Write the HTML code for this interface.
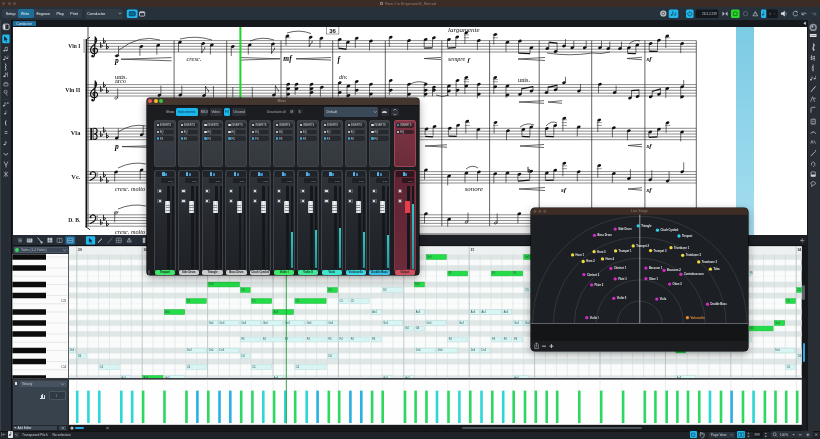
<!DOCTYPE html><html><head><meta charset="utf-8"><style>
*{margin:0;padding:0;box-sizing:border-box}
html,body{width:820px;height:439px;overflow:hidden;background:#1b1e23;font-family:"Liberation Sans",sans-serif}
.a{position:absolute}
</style></head><body><div class="a" style="left:0;top:0;width:820px;height:439px;overflow:hidden;will-change:transform;background:#1b1e23"><div class="a" style="left:0.00px;top:0.00px;width:820.00px;height:6.70px;background:#3b2d26;"></div><div class="a" style="left:2.20px;top:1.90px;width:3.00px;height:3.00px;background:#5c4d45;border-radius:50%"></div><div class="a" style="left:7.65px;top:1.90px;width:3.00px;height:3.00px;background:#5c4d45;border-radius:50%"></div><div class="a" style="left:13.10px;top:1.90px;width:3.00px;height:3.00px;background:#5c4d45;border-radius:50%"></div><svg class="a" style="left:0;top:0;overflow:visible" width="820" height="439"><text x="385.00" y="4.75" font-family="Liberation Sans" font-size="3.75" fill="#8e7f76" text-anchor="start" font-weight="normal">Flow 1 in Enigmatic06_Nimrod</text></svg><div class="a" style="left:380.20px;top:2.20px;width:2.80px;height:2.80px;background:transparent;border:0.5px solid #8e7f76;border-radius:0.4px"></div><div class="a" style="left:0.00px;top:6.70px;width:820.00px;height:13.40px;background:#27313b;"></div><div class="a" style="left:1.80px;top:9.10px;width:79.90px;height:9.20px;background:#303b47;border-radius:1.5px"></div><div class="a" style="left:18.30px;top:9.30px;width:15.80px;height:8.80px;background:#1f6e9a;border-radius:1.5px"></div><svg class="a" style="left:0;top:0;overflow:visible" width="820" height="439"><text x="5.80" y="15.21" font-family="Liberation Sans" font-size="3.7" fill="#eef2f6" text-anchor="start" font-weight="normal">Setup</text></svg><svg class="a" style="left:0;top:0;overflow:visible" width="820" height="439"><text x="20.80" y="15.21" font-family="Liberation Sans" font-size="3.7" fill="#eef2f6" text-anchor="start" font-weight="normal">Write</text></svg><svg class="a" style="left:0;top:0;overflow:visible" width="820" height="439"><text x="36.40" y="15.21" font-family="Liberation Sans" font-size="3.7" fill="#eef2f6" text-anchor="start" font-weight="normal">Engrave</text></svg><svg class="a" style="left:0;top:0;overflow:visible" width="820" height="439"><text x="56.60" y="15.21" font-family="Liberation Sans" font-size="3.7" fill="#eef2f6" text-anchor="start" font-weight="normal">Play</text></svg><svg class="a" style="left:0;top:0;overflow:visible" width="820" height="439"><text x="70.30" y="15.21" font-family="Liberation Sans" font-size="3.7" fill="#eef2f6" text-anchor="start" font-weight="normal">Print</text></svg><div class="a" style="left:84.90px;top:8.90px;width:38.00px;height:9.70px;background:#2f3a45;border-radius:1.5px"></div><svg class="a" style="left:0;top:0;overflow:visible" width="820" height="439"><text x="87.30" y="15.28" font-family="Liberation Sans" font-size="3.9" fill="#e8eef4" text-anchor="start" font-weight="normal">Conductor</text></svg><svg class="a" style="left:0;top:0" width="820" height="439" viewBox="0 0 820 439"><polyline points="118.70,12.75 120.00,14.05 121.30,12.75" stroke="#b0b8c0" stroke-width="0.7" fill="none"/><rect x="126.80" y="9.40" width="10.80" height="8.70" rx="1.5" fill="#22b8ec"/><rect x="129.20" y="11.65" width="6.00" height="4.20" rx="0.5" stroke="#063a55" stroke-width="0.8" fill="#0d6a94"/><rect x="139.50" y="11.70" width="5.20" height="4.40" rx="0.8" stroke="#d0d6dc" stroke-width="0.8" fill="none"/><line x1="139.60" y1="12.60" x2="144.60" y2="12.60" stroke="#d0d6dc" stroke-width="1.0"/><circle cx="663.30" cy="13.50" r="3.10" fill="#c8ccd0"/><circle cx="663.30" cy="13.50" r="1.90" fill="#6a7078"/><circle cx="663.30" cy="13.50" r="0.80" fill="#c8ccd0"/><rect x="668.70" y="9.60" width="9.60" height="8.30" rx="1.5" fill="#22b8ec"/><ellipse cx="671.64" cy="14.93" rx="1.04" ry="0.76" fill="#073a55"/><line x1="672.59" y1="14.83" x2="672.59" y2="11.51" stroke="#073a55" stroke-width="0.52"/><path d="M672.59 11.51 q1.5 0.6 1.3 2" stroke="#073a55" stroke-width="0.47" fill="none"/><ellipse cx="674.96" cy="14.92" rx="0.88" ry="0.64" fill="#073a55"/><line x1="675.76" y1="14.84" x2="675.76" y2="12.04" stroke="#073a55" stroke-width="0.44"/><rect x="686.00" y="9.60" width="7.60" height="8.30" rx="1.5" fill="#22b8ec"/><path d="M688.3 12.4 a2.1 2.1 0 1 0 3 0 M689.8 11 v2.4" stroke="#073a55" stroke-width="0.7" fill="none"/><rect x="695.60" y="9.60" width="22.80" height="8.30" rx="1.5" fill="#14171b"/><path d="M722.5 11.5 l2.2 2.2 l-2.2 2.2 z M727.5 11.5 l-2.2 2.2 l2.2 2.2 z" fill="#b8bec4"/><rect x="731.00" y="9.60" width="8.60" height="8.30" rx="1.5" fill="#2cd82c"/><rect x="733.50" y="11.95" width="3.60" height="3.60" rx="0.5" stroke="#0a5a0a" stroke-width="0.7" fill="none"/><circle cx="745.50" cy="13.70" r="2.20" stroke="#6a7078" stroke-width="0.7" fill="none"/><path d="M755.30 11.50 L757.70 15.82 L752.90 15.82 Z" stroke="#b8bec4" stroke-width="0.7" fill="none"/><line x1="755.30" y1="12.80" x2="755.30" y2="14.20" stroke="#b8bec4" stroke-width="0.5"/><rect x="761.00" y="9.60" width="5.20" height="8.30" rx="1.2" fill="#22b8ec"/><ellipse cx="762.88" cy="14.66" rx="0.99" ry="0.72" fill="#073a55"/><line x1="763.78" y1="14.57" x2="763.78" y2="11.42" stroke="#073a55" stroke-width="0.50"/><rect x="767.00" y="9.60" width="10.60" height="8.30" rx="1" fill="#14171b"/><line x1="770.00" y1="12.40" x2="770.00" y2="15.20" stroke="#8a9098" stroke-width="0.6"/><line x1="773.20" y1="13.70" x2="775.60" y2="13.70" stroke="#555" stroke-width="0.5"/><path d="M781 12.6 h1.6 l2.2 -1.8 v5.8 l-2.2 -1.8 h-1.6 z" fill="#d8dde2"/><path d="M785.8 12.2 q1 1.5 0 3" stroke="#d8dde2" stroke-width="0.5" fill="none"/><path d="M796.8 11.8 a2.3 2.3 0 1 0 0.8 2.4 M795.6 11.4 h1.6 v1.6" stroke="#b8bec4" stroke-width="0.7" fill="none"/><path d="M802.2 14.6 q1.6 -3 4.2 -1 M802 12.4 v2.4 h2.4" stroke="#b8bec4" stroke-width="0.7" fill="none"/><path d="M815.6 14.6 q-1.6 -3 -4.2 -1 M815.8 12.4 v2.4 h-2.4" stroke="#6a7078" stroke-width="0.7" fill="none"/><path d="M805.8 21.6 l-2.4 1.7 l2.4 1.7 z" fill="#d0d6dc"/></svg><svg class="a" style="left:0;top:0;overflow:visible" width="820" height="439"><text x="702.00" y="14.90" font-family="Liberation Sans" font-size="3.1" fill="#c8ccd0" text-anchor="start" font-weight="normal">26.3.2.239</text></svg><div class="a" style="left:0.00px;top:20.10px;width:820.00px;height:7.00px;background:#15181c;"></div><div class="a" style="left:12.80px;top:20.70px;width:23.20px;height:5.80px;background:#1f6d9a;border-radius:1px 1px 0 0"></div><svg class="a" style="left:0;top:0;overflow:visible" width="820" height="439"><text x="16.20" y="24.96" font-family="Liberation Sans" font-size="3.4" fill="#e0ecf4" text-anchor="start" font-weight="normal">Conductor</text></svg><svg class="a" style="left:0;top:0" width="820" height="439" viewBox="0 0 820 439"><path d="M805.8 21.6 l-2.4 1.7 l2.4 1.7 z" fill="#d0d6dc"/></svg><div class="a" style="left:0.00px;top:20.10px;width:11.20px;height:418.90px;background:#262c34;"></div><div class="a" style="left:0.00px;top:20.10px;width:0.80px;height:418.90px;background:#3a4048;"></div><div class="a" style="left:11.00px;top:20.10px;width:1.30px;height:418.90px;background:#0e1013;"></div><svg class="a" style="left:0;top:0" width="820" height="439" viewBox="0 0 820 439"><rect x="3.20" y="24.10" width="5.90" height="5.50" rx="1.3" stroke="#dfe3e6" stroke-width="0.8" fill="none"/><rect x="3.50" y="24.55" width="1.80" height="4.60" rx="0.3" fill="#dfe3e6"/><rect x="2.30" y="34.60" width="7.30" height="8.60" rx="1.2" fill="#22b8ec"/><path d="M4.04 36.04 L7.89 39.56 L6.02 39.67 L7.12 41.65 L6.35 41.98 L5.25 40.00 L4.04 41.10 Z" fill="#0a2a40"/><ellipse cx="4.20" cy="50.82" rx="0.99" ry="0.72" fill="#c4cacf"/><line x1="5.10" y1="50.73" x2="5.10" y2="47.58" stroke="#c4cacf" stroke-width="0.50"/><ellipse cx="6.54" cy="50.46" rx="0.99" ry="0.72" fill="#c4cacf"/><line x1="7.44" y1="50.37" x2="7.44" y2="47.22" stroke="#c4cacf" stroke-width="0.50"/><line x1="5.10" y1="47.58" x2="7.44" y2="47.22" stroke="#c4cacf" stroke-width="0.63"/><ellipse cx="4.08" cy="59.46" rx="0.99" ry="0.72" fill="#c4cacf"/><line x1="4.98" y1="59.37" x2="4.98" y2="56.22" stroke="#c4cacf" stroke-width="0.50"/><path d="M4.98 56.22 q1.5 0.6 1.3 2" stroke="#c4cacf" stroke-width="0.45" fill="none"/><ellipse cx="7.16" cy="58.32" rx="0.88" ry="0.64" fill="#c4cacf"/><line x1="7.96" y1="58.24" x2="7.96" y2="55.44" stroke="#c4cacf" stroke-width="0.44"/><path d="M5.2 63.5 q1.8 2 0 3.5 q1.8 1.5 0 3.5" stroke="#c4cacf" stroke-width="0.9" fill="none"/><ellipse cx="4.40" cy="76.40" rx="1.10" ry="0.80" fill="#c4cacf"/><line x1="5.40" y1="76.30" x2="5.40" y2="72.80" stroke="#c4cacf" stroke-width="0.55"/><path d="M5.40 72.80 q1.5 0.6 1.3 2" stroke="#c4cacf" stroke-width="0.50" fill="none"/><line x1="7.50" y1="72.20" x2="7.50" y2="77.00" stroke="#c4cacf" stroke-width="0.5"/><rect x="3.80" y="83.30" width="4.20" height="2.60" rx="0.4" stroke="#c4cacf" stroke-width="0.6" fill="none"/><line x1="4.40" y1="82.40" x2="7.40" y2="82.40" stroke="#c4cacf" stroke-width="0.5"/><circle cx="5.60" cy="91.80" r="1.50" stroke="#c4cacf" stroke-width="0.6" fill="none"/><line x1="6.20" y1="93.40" x2="7.20" y2="95.60" stroke="#c4cacf" stroke-width="0.6"/><line x1="2.60" y1="99.60" x2="9.20" y2="99.60" stroke="#3a4048" stroke-width="0.5"/><ellipse cx="3.88" cy="105.76" rx="0.99" ry="0.72" fill="#c4cacf"/><line x1="4.78" y1="105.67" x2="4.78" y2="102.52" stroke="#c4cacf" stroke-width="0.50"/><path d="M4.78 102.52 q1.5 0.6 1.3 2" stroke="#c4cacf" stroke-width="0.45" fill="none"/><path d="M6.8 103 h2 M7.8 102 v2" stroke="#c4cacf" stroke-width="0.5" fill="none"/><ellipse cx="5.08" cy="113.76" rx="0.99" ry="0.72" fill="#c4cacf"/><line x1="5.98" y1="113.67" x2="5.98" y2="110.52" stroke="#c4cacf" stroke-width="0.50"/><path d="M6 120.5 q-1.2 2.5 0 5" stroke="#c4cacf" stroke-width="0.9" fill="none"/><line x1="4.60" y1="131.60" x2="7.40" y2="131.60" stroke="#c4cacf" stroke-width="0.7"/><line x1="4.60" y1="133.40" x2="7.40" y2="133.40" stroke="#c4cacf" stroke-width="0.7"/><ellipse cx="4.48" cy="144.56" rx="0.99" ry="0.72" fill="#c4cacf"/><line x1="5.38" y1="144.47" x2="5.38" y2="141.32" stroke="#c4cacf" stroke-width="0.50"/><path d="M5.38 141.32 q1.5 0.6 1.3 2" stroke="#c4cacf" stroke-width="0.45" fill="none"/><path d="M3.8 153 q2 4 4.2 0" stroke="#c4cacf" stroke-width="0.8" fill="none"/><path d="M4 161.5 l2 4 l2 -4 M6 165.5 v2" stroke="#c4cacf" stroke-width="0.7" fill="none"/><path d="M3.6 172 l4.6 4.4 M8.2 172 l-4.6 4.4 M5.9 171.4 v5.6" stroke="#c4cacf" stroke-width="0.6" fill="none"/></svg><div class="a" style="left:806.60px;top:20.10px;width:13.40px;height:418.90px;background:#292d34;"></div><div class="a" style="left:806.60px;top:20.10px;width:0.80px;height:418.90px;background:#15171a;"></div><svg class="a" style="left:0;top:0" width="820" height="439" viewBox="0 0 820 439"><circle cx="813.20" cy="27.40" r="3.70" fill="#8c949c"/><circle cx="813.20" cy="27.40" r="2.20" fill="#3a4048"/><circle cx="812.40" cy="26.60" r="0.90" fill="#c8ccd0"/><rect x="809.90" y="34.00" width="6.60" height="3.00" rx="0.4" fill="#e4e8ec"/><line x1="810.60" y1="35.50" x2="815.80" y2="35.50" stroke="#22262b" stroke-width="0.4"/><g transform="translate(0 0.00)"><path d="M813.6 43.5 q1.5 1 0.6 2.6 q-2.4 1.6 -1.2 3.6 q1.5 1.2 1.6 -0.6 M813.5 43.5 v7.5" stroke="#d0d5da" stroke-width="0.7" fill="none"/></g><g transform="translate(0 0.45)"><path d="M811.4 54.5 v5 M814.2 55.5 v5 M810.6 57 l4.4 -1 M810.6 59 l4.4 -1" stroke="#d0d5da" stroke-width="0.6" fill="none"/></g><g transform="translate(0 0.90)"><path d="M813.2 63.5 v7 M812 65 q2 1 0 2.5 q2 1 0 2.5" stroke="#d0d5da" stroke-width="0.6" fill="none"/></g><g transform="translate(0 1.35)"><ellipse cx="810.92" cy="78.39" rx="0.94" ry="0.68" fill="#d0d5da"/><line x1="811.77" y1="78.31" x2="811.77" y2="75.33" stroke="#d0d5da" stroke-width="0.47"/><path d="M811.77 75.33 q1.5 0.6 1.3 2" stroke="#d0d5da" stroke-width="0.42" fill="none"/><ellipse cx="814.76" cy="77.32" rx="0.88" ry="0.64" fill="#d0d5da"/><line x1="815.56" y1="77.24" x2="815.56" y2="74.44" stroke="#d0d5da" stroke-width="0.44"/></g><g transform="translate(0 1.80)"><path d="M810.8 90 l4.8 -5.5" stroke="#d0d5da" stroke-width="0.9" fill="none"/></g><g transform="translate(0 2.25)"><path d="M810.6 99.5 l2 -5 l2 5 M813.8 96 h2" stroke="#d0d5da" stroke-width="0.6" fill="none"/></g><g transform="translate(0 2.70)"><path d="M811 110 v-4 q0 -1.4 1.4 -1.4 h3" stroke="#d0d5da" stroke-width="0.7" fill="none"/></g><g transform="translate(0 3.15)"><rect x="811.10" y="116.00" width="4.20" height="5.00" rx="0.3" stroke="#d0d5da" stroke-width="0.6" fill="none"/><line x1="811.80" y1="116.80" x2="814.60" y2="116.80" stroke="#d0d5da" stroke-width="0.4"/><line x1="811.80" y1="118.50" x2="814.60" y2="118.50" stroke="#d0d5da" stroke-width="0.4"/><line x1="811.80" y1="120.20" x2="814.60" y2="120.20" stroke="#d0d5da" stroke-width="0.4"/></g><g transform="translate(0 3.60)"><path d="M810.6 130 q2.6 -3.4 5.2 0" stroke="#d0d5da" stroke-width="0.8" fill="none"/></g><g transform="translate(0 4.05)"><path d="M810.8 139.5 l1.2 -3 l1.2 3 M814 136.5 l1.5 3" stroke="#d0d5da" stroke-width="0.6" fill="none"/></g><g transform="translate(0 4.50)"><path d="M810.8 151.5 l4.6 -4.6 M815 146.5 l0.8 -0.8" stroke="#d0d5da" stroke-width="0.8" fill="none"/></g><g transform="translate(0 4.95)"><path d="M811.6 160.5 q-1 -3 1.6 -3.6 q2.6 0.6 1.6 3.6 q-0.6 1 -1.6 1.2" stroke="#d0d5da" stroke-width="0.6" fill="none"/></g><g transform="translate(0 5.40)"><rect x="811.00" y="166.50" width="4.40" height="4.60" rx="0.4" stroke="#d0d5da" stroke-width="0.6" fill="none"/><rect x="811.00" y="169.00" width="4.40" height="2.00" rx="0.2" fill="#d0d5da"/></g><g transform="translate(0 5.85)"><path d="M810.8 177 q2.4 -2.8 4.8 0 q-0.6 2.6 -2.4 2.2 l-1.6 1.6 l0.4 -2 q-1.4 -0.6 -1.2 -1.8" stroke="#d0d5da" stroke-width="0.6" fill="none"/></g></svg><div class="a" style="left:12.5px;top:27.1px;width:794px;height:207.5px;background:#ffffff;"></div><div class="a" style="left:735.7px;top:27.1px;width:18.1px;height:207.5px;background:linear-gradient(#7ccbe4,#a6def0);"></div><svg class="a" style="left:0;top:0" width="820" height="439" viewBox="0 0 820 439"><defs><clipPath id="sc"><rect x="12.5" y="27" width="793.5" height="208"/></clipPath></defs><g clip-path="url(#sc)"><line x1="86" y1="40.60" x2="696.3" y2="40.60" stroke="#5a5a5a" stroke-width="0.7"/><line x1="86" y1="43.45" x2="696.3" y2="43.45" stroke="#5a5a5a" stroke-width="0.7"/><line x1="86" y1="46.30" x2="696.3" y2="46.30" stroke="#5a5a5a" stroke-width="0.7"/><line x1="86" y1="49.15" x2="696.3" y2="49.15" stroke="#5a5a5a" stroke-width="0.7"/><line x1="86" y1="52.00" x2="696.3" y2="52.00" stroke="#5a5a5a" stroke-width="0.7"/><line x1="86" y1="84.60" x2="696.3" y2="84.60" stroke="#5a5a5a" stroke-width="0.7"/><line x1="86" y1="87.45" x2="696.3" y2="87.45" stroke="#5a5a5a" stroke-width="0.7"/><line x1="86" y1="90.30" x2="696.3" y2="90.30" stroke="#5a5a5a" stroke-width="0.7"/><line x1="86" y1="93.15" x2="696.3" y2="93.15" stroke="#5a5a5a" stroke-width="0.7"/><line x1="86" y1="96.00" x2="696.3" y2="96.00" stroke="#5a5a5a" stroke-width="0.7"/><line x1="86" y1="128.30" x2="696.3" y2="128.30" stroke="#5a5a5a" stroke-width="0.7"/><line x1="86" y1="131.15" x2="696.3" y2="131.15" stroke="#5a5a5a" stroke-width="0.7"/><line x1="86" y1="134.00" x2="696.3" y2="134.00" stroke="#5a5a5a" stroke-width="0.7"/><line x1="86" y1="136.85" x2="696.3" y2="136.85" stroke="#5a5a5a" stroke-width="0.7"/><line x1="86" y1="139.70" x2="696.3" y2="139.70" stroke="#5a5a5a" stroke-width="0.7"/><line x1="86" y1="171.60" x2="696.3" y2="171.60" stroke="#5a5a5a" stroke-width="0.7"/><line x1="86" y1="174.45" x2="696.3" y2="174.45" stroke="#5a5a5a" stroke-width="0.7"/><line x1="86" y1="177.30" x2="696.3" y2="177.30" stroke="#5a5a5a" stroke-width="0.7"/><line x1="86" y1="180.15" x2="696.3" y2="180.15" stroke="#5a5a5a" stroke-width="0.7"/><line x1="86" y1="183.00" x2="696.3" y2="183.00" stroke="#5a5a5a" stroke-width="0.7"/><line x1="86" y1="214.80" x2="696.3" y2="214.80" stroke="#5a5a5a" stroke-width="0.7"/><line x1="86" y1="217.65" x2="696.3" y2="217.65" stroke="#5a5a5a" stroke-width="0.7"/><line x1="86" y1="220.50" x2="696.3" y2="220.50" stroke="#5a5a5a" stroke-width="0.7"/><line x1="86" y1="223.35" x2="696.3" y2="223.35" stroke="#5a5a5a" stroke-width="0.7"/><line x1="86" y1="226.20" x2="696.3" y2="226.20" stroke="#5a5a5a" stroke-width="0.7"/><line x1="174.1" y1="40.60" x2="174.1" y2="226.20" stroke="#333" stroke-width="0.75"/><line x1="226.7" y1="40.60" x2="226.7" y2="226.20" stroke="#333" stroke-width="0.75"/><line x1="281" y1="40.60" x2="281" y2="226.20" stroke="#333" stroke-width="0.75"/><line x1="332.7" y1="40.60" x2="332.7" y2="226.20" stroke="#333" stroke-width="0.75"/><line x1="385.3" y1="40.60" x2="385.3" y2="226.20" stroke="#333" stroke-width="0.75"/><line x1="441.8" y1="40.60" x2="441.8" y2="226.20" stroke="#333" stroke-width="0.75"/><line x1="489.6" y1="40.60" x2="489.6" y2="226.20" stroke="#333" stroke-width="0.75"/><line x1="539.2" y1="40.60" x2="539.2" y2="226.20" stroke="#333" stroke-width="0.75"/><line x1="591.7" y1="40.60" x2="591.7" y2="226.20" stroke="#333" stroke-width="0.75"/><line x1="644.9" y1="40.60" x2="644.9" y2="226.20" stroke="#333" stroke-width="0.75"/><line x1="696.3" y1="40.60" x2="696.3" y2="226.20" stroke="#333" stroke-width="0.75"/><line x1="88" y1="27" x2="88" y2="226.20" stroke="#444" stroke-width="0.9"/><line x1="86.3" y1="39.60" x2="86.3" y2="227.20" stroke="#111" stroke-width="1.6"/><path d="M85.5 40.10 Q88 38.60 90 37.10" stroke="#111" stroke-width="0.9" fill="none"/><path d="M85.5 226.70 Q88 228.20 90 229.70" stroke="#111" stroke-width="0.9" fill="none"/><rect x="83.3" y="39" width="2.2" height="14" fill="#bbb"/><text x="80.3" y="47.60" font-family="Liberation Serif" font-size="7.0" font-weight="bold" text-anchor="end" fill="#1a1a1a" textLength="12" lengthAdjust="spacingAndGlyphs">Vln I</text><text x="80.3" y="91.60" font-family="Liberation Serif" font-size="7.0" font-weight="bold" text-anchor="end" fill="#1a1a1a" textLength="15" lengthAdjust="spacingAndGlyphs">Vln II</text><text x="80.3" y="135.30" font-family="Liberation Serif" font-size="7.0" font-weight="bold" text-anchor="end" fill="#1a1a1a" textLength="9.5" lengthAdjust="spacingAndGlyphs">Vla</text><text x="80.3" y="178.60" font-family="Liberation Serif" font-size="7.0" font-weight="bold" text-anchor="end" fill="#1a1a1a" textLength="9" lengthAdjust="spacingAndGlyphs">Vc.</text><text x="80.3" y="221.80" font-family="Liberation Serif" font-size="7.0" font-weight="bold" text-anchor="end" fill="#1a1a1a" textLength="12" lengthAdjust="spacingAndGlyphs">D. B.</text><path d="M94.42 55.14 L95.27 37.18 C97.12 38.61 97.12 42.31 94.28 44.59 C91.14 46.87 89.86 49.15 90.86 51.72 C91.85 54.00 95.42 54.14 96.84 52.57 C98.27 50.86 97.41 48.01 94.84 48.01 C92.85 48.01 92.42 50.29 93.70 51.29 M94.42 55.14 C94.28 56.84 92.85 57.42 91.85 56.42" stroke="#111" stroke-width="1.2" fill="none" stroke-linecap="round"/><circle cx="92.42" cy="55.85" r="1.05" fill="#111"/><path d="M94.42 99.13 L95.27 81.18 C97.12 82.60 97.12 86.31 94.28 88.59 C91.14 90.87 89.86 93.15 90.86 95.71 C91.85 97.99 95.42 98.14 96.84 96.57 C98.27 94.86 97.41 92.01 94.84 92.01 C92.85 92.01 92.42 94.29 93.70 95.29 M94.42 99.13 C94.28 100.84 92.85 101.41 91.85 100.42" stroke="#111" stroke-width="1.2" fill="none" stroke-linecap="round"/><circle cx="92.42" cy="99.85" r="1.05" fill="#111"/><rect x="90.30" y="128.00" width="1.9" height="12.00" fill="#111"/><rect x="92.80" y="128.00" width="0.7" height="12.00" fill="#111"/><path d="M93.70 128.30 q3.4 -0.4 3.4 2.6 q0 2.8 -3 2.9 q3 0.1 3 2.9 q0 3 -3.4 2.6" stroke="#111" stroke-width="1.2" fill="none"/><path d="M90.19 173.96 C90.58 171.47 93.33 171.08 94.78 172.39 C96.22 173.83 95.82 176.58 94.12 178.02 C92.68 179.20 90.97 179.86 89.53 180.51" stroke="#111" stroke-width="1.1" fill="none"/><circle cx="90.71" cy="174.09" r="1.0" fill="#111"/><circle cx="97.13" cy="173.03" r="0.62" fill="#111"/><circle cx="97.13" cy="175.88" r="0.62" fill="#111"/><path d="M90.19 217.16 C90.58 214.67 93.33 214.28 94.78 215.59 C96.22 217.03 95.82 219.78 94.12 221.22 C92.68 222.40 90.97 223.06 89.53 223.71" stroke="#111" stroke-width="1.1" fill="none"/><circle cx="90.71" cy="217.29" r="1.0" fill="#111"/><circle cx="97.13" cy="216.23" r="0.62" fill="#111"/><circle cx="97.13" cy="219.08" r="0.62" fill="#111"/><path d="M100.50 42.10 L100.50 47.60 q2.4 -1 2 -2.2 q-0.4 -1 -2 0.2" stroke="#111" stroke-width="0.85" fill="none"/><path d="M103.50 37.82 L103.50 43.32 q2.4 -1 2 -2.2 q-0.4 -1 -2 0.2" stroke="#111" stroke-width="0.85" fill="none"/><path d="M106.50 43.52 L106.50 49.02 q2.4 -1 2 -2.2 q-0.4 -1 -2 0.2" stroke="#111" stroke-width="0.85" fill="none"/><path d="M100.50 86.10 L100.50 91.60 q2.4 -1 2 -2.2 q-0.4 -1 -2 0.2" stroke="#111" stroke-width="0.85" fill="none"/><path d="M103.50 81.82 L103.50 87.32 q2.4 -1 2 -2.2 q-0.4 -1 -2 0.2" stroke="#111" stroke-width="0.85" fill="none"/><path d="M106.50 87.52 L106.50 93.02 q2.4 -1 2 -2.2 q-0.4 -1 -2 0.2" stroke="#111" stroke-width="0.85" fill="none"/><path d="M100.50 131.23 L100.50 136.73 q2.4 -1 2 -2.2 q-0.4 -1 -2 0.2" stroke="#111" stroke-width="0.85" fill="none"/><path d="M103.50 126.95 L103.50 132.45 q2.4 -1 2 -2.2 q-0.4 -1 -2 0.2" stroke="#111" stroke-width="0.85" fill="none"/><path d="M106.50 132.65 L106.50 138.15 q2.4 -1 2 -2.2 q-0.4 -1 -2 0.2" stroke="#111" stroke-width="0.85" fill="none"/><path d="M100.50 175.95 L100.50 181.45 q2.4 -1 2 -2.2 q-0.4 -1 -2 0.2" stroke="#111" stroke-width="0.85" fill="none"/><path d="M103.50 171.68 L103.50 177.18 q2.4 -1 2 -2.2 q-0.4 -1 -2 0.2" stroke="#111" stroke-width="0.85" fill="none"/><path d="M106.50 177.38 L106.50 182.88 q2.4 -1 2 -2.2 q-0.4 -1 -2 0.2" stroke="#111" stroke-width="0.85" fill="none"/><path d="M100.50 219.15 L100.50 224.65 q2.4 -1 2 -2.2 q-0.4 -1 -2 0.2" stroke="#111" stroke-width="0.85" fill="none"/><path d="M103.50 214.88 L103.50 220.38 q2.4 -1 2 -2.2 q-0.4 -1 -2 0.2" stroke="#111" stroke-width="0.85" fill="none"/><path d="M106.50 220.58 L106.50 226.08 q2.4 -1 2 -2.2 q-0.4 -1 -2 0.2" stroke="#111" stroke-width="0.85" fill="none"/><ellipse cx="117.00" cy="55.80" rx="1.9" ry="1.35" transform="rotate(-22 117.00 55.80)" fill="#111"/><line x1="118.50" y1="55.80" x2="118.50" y2="46.30" stroke="#111" stroke-width="0.6"/><line x1="114.40" y1="55.80" x2="119.60" y2="55.80" stroke="#333" stroke-width="0.5"/><ellipse cx="141.40" cy="46.40" rx="1.9" ry="1.35" transform="rotate(-22 141.40 46.40)" fill="#111"/><line x1="139.90" y1="46.40" x2="139.90" y2="55.90" stroke="#111" stroke-width="0.6"/><ellipse cx="158.30" cy="45.20" rx="1.9" ry="1.35" transform="rotate(-22 158.30 45.20)" fill="#111"/><line x1="156.80" y1="45.20" x2="156.80" y2="54.70" stroke="#111" stroke-width="0.6"/><path d="M119.00 50.00 Q139.50 34.00 160.00 40.00" stroke="#222" stroke-width="0.7" fill="none"/><text x="115.00" y="62.50" font-family="Liberation Serif" font-size="7.5" font-style="italic" font-weight="bold" text-anchor="start" fill="#000">p</text><path d="M171.50 57.60 L121.00 59.20 L171.50 60.80" stroke="#333" stroke-width="0.75" fill="none"/><ellipse cx="180.00" cy="42.30" rx="1.9" ry="1.35" transform="rotate(-22 180.00 42.30)" fill="#111"/><line x1="178.50" y1="42.30" x2="178.50" y2="51.80" stroke="#111" stroke-width="0.6"/><ellipse cx="203.20" cy="43.60" rx="1.9" ry="1.35" transform="rotate(-22 203.20 43.60)" fill="#111"/><line x1="201.70" y1="43.60" x2="201.70" y2="53.10" stroke="#111" stroke-width="0.6"/><path d="M201.70 53.10 q0.3 -2.2 2.4 -3.6 q0.9 -0.9 0.5 -2.4" stroke="#111" stroke-width="0.75" fill="none"/><ellipse cx="211.90" cy="45.00" rx="1.9" ry="1.35" transform="rotate(-22 211.90 45.00)" fill="#111"/><line x1="210.40" y1="45.00" x2="210.40" y2="54.50" stroke="#111" stroke-width="0.6"/><path d="M180.00 39.00 Q196.00 35.00 212.00 40.00" stroke="#222" stroke-width="0.7" fill="none"/><text x="186.50" y="60.50" font-family="Liberation Serif" font-size="6.4" font-style="italic" font-weight="normal" text-anchor="start" fill="#111">cresc.</text><ellipse cx="232.80" cy="46.60" rx="1.9" ry="1.35" transform="rotate(-22 232.80 46.60)" fill="#111"/><line x1="231.30" y1="46.60" x2="231.30" y2="56.10" stroke="#111" stroke-width="0.6"/><ellipse cx="249.80" cy="45.00" rx="1.9" ry="1.35" transform="rotate(-22 249.80 45.00)" fill="#111"/><line x1="248.30" y1="45.00" x2="248.30" y2="54.50" stroke="#111" stroke-width="0.6"/><ellipse cx="273.00" cy="44.10" rx="1.9" ry="1.35" transform="rotate(-22 273.00 44.10)" fill="#111"/><line x1="271.50" y1="44.10" x2="271.50" y2="53.60" stroke="#111" stroke-width="0.6"/><path d="M271.50 53.60 q0.3 -2.2 2.4 -3.6 q0.9 -0.9 0.5 -2.4" stroke="#111" stroke-width="0.75" fill="none"/><path d="M250.00 41.00 Q262.00 36.00 274.00 40.00" stroke="#222" stroke-width="0.7" fill="none"/><path d="M241.00 57.55 L280.00 58.80 L241.00 60.05" stroke="#333" stroke-width="0.75" fill="none"/><text x="283.30" y="61.00" font-family="Liberation Serif" font-size="7.5" font-style="italic" font-weight="bold" text-anchor="start" fill="#000">mf</text><ellipse cx="287.50" cy="36.10" rx="1.9" ry="1.35" transform="rotate(-22 287.50 36.10)" fill="#111"/><line x1="286.00" y1="36.10" x2="286.00" y2="45.60" stroke="#111" stroke-width="0.6"/><line x1="284.90" y1="37.75" x2="290.10" y2="37.75" stroke="#333" stroke-width="0.5"/><ellipse cx="310.70" cy="37.30" rx="1.9" ry="1.35" transform="rotate(-22 310.70 37.30)" fill="#111"/><line x1="309.20" y1="37.30" x2="309.20" y2="46.80" stroke="#111" stroke-width="0.6"/><path d="M309.20 46.80 q0.3 -2.2 2.4 -3.6 q0.9 -0.9 0.5 -2.4" stroke="#111" stroke-width="0.75" fill="none"/><ellipse cx="321.50" cy="38.30" rx="1.9" ry="1.35" transform="rotate(-22 321.50 38.30)" fill="#111"/><line x1="320.00" y1="38.30" x2="320.00" y2="47.80" stroke="#111" stroke-width="0.6"/><path d="M287.00 33.00 Q299.00 29.00 311.00 33.50" stroke="#222" stroke-width="0.7" fill="none"/><path d="M331.00 57.55 L296.00 58.80 L331.00 60.05" stroke="#333" stroke-width="0.75" fill="none"/><text x="337.50" y="61.50" font-family="Liberation Serif" font-size="7.5" font-style="italic" font-weight="bold" text-anchor="start" fill="#000">f</text><ellipse cx="339.80" cy="39.50" rx="1.9" ry="1.35" transform="rotate(-22 339.80 39.50)" fill="#111"/><line x1="338.30" y1="39.50" x2="338.30" y2="47.50" stroke="#111" stroke-width="0.6"/><ellipse cx="348.00" cy="42.30" rx="1.9" ry="1.35" transform="rotate(-22 348.00 42.30)" fill="#111"/><line x1="346.50" y1="42.30" x2="346.50" y2="48.30" stroke="#111" stroke-width="0.6"/><polygon points="338.30,47.50 346.50,48.60 346.50,49.90 338.30,48.80" fill="#111"/><ellipse cx="356.80" cy="38.30" rx="1.9" ry="1.35" transform="rotate(-22 356.80 38.30)" fill="#111"/><line x1="355.30" y1="38.30" x2="355.30" y2="47.80" stroke="#111" stroke-width="0.6"/><ellipse cx="371.00" cy="41.10" rx="1.9" ry="1.35" transform="rotate(-22 371.00 41.10)" fill="#111"/><line x1="369.50" y1="41.10" x2="369.50" y2="50.60" stroke="#111" stroke-width="0.6"/><ellipse cx="390.80" cy="37.30" rx="1.9" ry="1.35" transform="rotate(-22 390.80 37.30)" fill="#111"/><line x1="389.30" y1="37.30" x2="389.30" y2="46.80" stroke="#111" stroke-width="0.6"/><ellipse cx="409.10" cy="40.60" rx="1.9" ry="1.35" transform="rotate(-22 409.10 40.60)" fill="#111"/><line x1="407.60" y1="40.60" x2="407.60" y2="50.10" stroke="#111" stroke-width="0.6"/><ellipse cx="425.70" cy="39.50" rx="1.9" ry="1.35" transform="rotate(-22 425.70 39.50)" fill="#111"/><line x1="424.20" y1="39.50" x2="424.20" y2="47.50" stroke="#111" stroke-width="0.6"/><ellipse cx="434.00" cy="37.80" rx="1.9" ry="1.35" transform="rotate(-22 434.00 37.80)" fill="#111"/><line x1="432.50" y1="37.80" x2="432.50" y2="47.30" stroke="#111" stroke-width="0.6"/><polygon points="424.20,47.50 432.50,47.30 432.50,48.60 424.20,48.80" fill="#111"/><path d="M441.00 57.40 L424.00 58.50 L441.00 59.60" stroke="#333" stroke-width="0.75" fill="none"/><ellipse cx="449.00" cy="39.50" rx="1.9" ry="1.35" transform="rotate(-22 449.00 39.50)" fill="#111"/><line x1="447.50" y1="39.50" x2="447.50" y2="47.50" stroke="#111" stroke-width="0.6"/><ellipse cx="457.30" cy="37.00" rx="1.9" ry="1.35" transform="rotate(-22 457.30 37.00)" fill="#111"/><line x1="455.80" y1="37.00" x2="455.80" y2="47.00" stroke="#111" stroke-width="0.6"/><polygon points="447.50,47.50 455.80,47.00 455.80,48.30 447.50,48.80" fill="#111"/><ellipse cx="466.40" cy="32.80" rx="1.9" ry="1.35" transform="rotate(-22 466.40 32.80)" fill="#111"/><line x1="464.90" y1="32.80" x2="464.90" y2="43.80" stroke="#111" stroke-width="0.6"/><line x1="463.80" y1="34.90" x2="469.00" y2="34.90" stroke="#333" stroke-width="0.5"/><line x1="463.80" y1="37.75" x2="469.00" y2="37.75" stroke="#333" stroke-width="0.5"/><ellipse cx="478.90" cy="40.60" rx="1.9" ry="1.35" transform="rotate(-22 478.90 40.60)" fill="#111"/><line x1="477.40" y1="40.60" x2="477.40" y2="50.10" stroke="#111" stroke-width="0.6"/><text x="448.00" y="32.00" font-family="Liberation Serif" font-size="7" font-style="italic" font-weight="normal" text-anchor="start" fill="#111">largamente</text><text x="448.00" y="61.00" font-family="Liberation Serif" font-size="6" font-style="italic" font-weight="normal" text-anchor="start" fill="#111">sempre</text><text x="467.50" y="61.50" font-family="Liberation Serif" font-size="7" font-style="italic" font-weight="bold" text-anchor="start" fill="#000">f</text><ellipse cx="495.30" cy="34.50" rx="1.9" ry="1.35" transform="rotate(-22 495.30 34.50)" fill="#111"/><line x1="493.80" y1="34.50" x2="493.80" y2="44.50" stroke="#111" stroke-width="0.6"/><line x1="492.70" y1="34.90" x2="497.90" y2="34.90" stroke="#333" stroke-width="0.5"/><line x1="492.70" y1="37.75" x2="497.90" y2="37.75" stroke="#333" stroke-width="0.5"/><ellipse cx="507.50" cy="42.30" rx="1.9" ry="1.35" transform="rotate(-22 507.50 42.30)" fill="#111"/><line x1="506.00" y1="42.30" x2="506.00" y2="51.80" stroke="#111" stroke-width="0.6"/><ellipse cx="520.00" cy="41.10" rx="1.9" ry="1.35" transform="rotate(-22 520.00 41.10)" fill="#111"/><line x1="521.50" y1="41.10" x2="521.50" y2="41.10" stroke="#111" stroke-width="0.6"/><ellipse cx="531.50" cy="47.80" rx="1.9" ry="1.35" transform="rotate(-22 531.50 47.80)" fill="#111"/><line x1="533.00" y1="47.80" x2="533.00" y2="47.80" stroke="#111" stroke-width="0.6"/><line x1="518.50" y1="41.10" x2="518.50" y2="53.20" stroke="#111" stroke-width="0.6"/><line x1="530.00" y1="47.80" x2="530.00" y2="53.50" stroke="#111" stroke-width="0.6"/><polygon points="518.50,52.50 530.00,53.00 530.00,54.30 518.50,53.80" fill="#111"/><path d="M545.00 57.50 L518.00 59.00 L545.00 60.50" stroke="#333" stroke-width="0.75" fill="none"/><ellipse cx="547.30" cy="48.60" rx="1.9" ry="1.35" transform="rotate(-22 547.30 48.60)" fill="#111"/><line x1="548.80" y1="48.60" x2="548.80" y2="42.60" stroke="#111" stroke-width="0.6"/><ellipse cx="555.60" cy="51.60" rx="1.9" ry="1.35" transform="rotate(-22 555.60 51.60)" fill="#111"/><line x1="557.10" y1="51.60" x2="557.10" y2="42.60" stroke="#111" stroke-width="0.6"/><polygon points="548.80,41.50 557.10,42.50 557.10,43.80 548.80,42.80" fill="#111"/><ellipse cx="564.00" cy="46.10" rx="1.9" ry="1.35" transform="rotate(-22 564.00 46.10)" fill="#111"/><line x1="565.50" y1="46.10" x2="565.50" y2="39.10" stroke="#111" stroke-width="0.6"/><ellipse cx="572.30" cy="47.80" rx="1.9" ry="1.35" transform="rotate(-22 572.30 47.80)" fill="#111"/><line x1="573.80" y1="47.80" x2="573.80" y2="40.80" stroke="#111" stroke-width="0.6"/><ellipse cx="584.70" cy="47.80" rx="1.9" ry="1.35" transform="rotate(-22 584.70 47.80)" fill="#111"/><line x1="586.20" y1="47.80" x2="586.20" y2="40.80" stroke="#111" stroke-width="0.6"/><path d="M547.00 53.00 Q569.50 56.50 592.00 53.00" stroke="#222" stroke-width="0.7" fill="none"/><ellipse cx="600.00" cy="47.80" rx="1.9" ry="1.35" transform="rotate(-22 600.00 47.80)" fill="#111"/><line x1="601.50" y1="47.80" x2="601.50" y2="40.80" stroke="#111" stroke-width="0.6"/><ellipse cx="608.30" cy="48.60" rx="1.9" ry="1.35" transform="rotate(-22 608.30 48.60)" fill="#111"/><line x1="609.80" y1="48.60" x2="609.80" y2="41.60" stroke="#111" stroke-width="0.6"/><ellipse cx="620.00" cy="48.60" rx="1.9" ry="1.35" transform="rotate(-22 620.00 48.60)" fill="#111"/><line x1="621.50" y1="48.60" x2="621.50" y2="41.60" stroke="#111" stroke-width="0.6"/><path d="M592.00 53.00 Q601.00 54.50 610.00 52.00" stroke="#222" stroke-width="0.7" fill="none"/><ellipse cx="629.00" cy="47.80" rx="1.9" ry="1.35" transform="rotate(-22 629.00 47.80)" fill="#111"/><line x1="627.50" y1="47.80" x2="627.50" y2="52.80" stroke="#111" stroke-width="0.6"/><ellipse cx="637.40" cy="45.00" rx="1.9" ry="1.35" transform="rotate(-22 637.40 45.00)" fill="#111"/><line x1="635.90" y1="45.00" x2="635.90" y2="53.00" stroke="#111" stroke-width="0.6"/><polygon points="627.50,52.80 635.90,53.00 635.90,54.30 627.50,54.10" fill="#111"/><path d="M629.00 44.00 Q634.50 39.00 640.00 41.00" stroke="#222" stroke-width="0.7" fill="none"/><path d="M642.00 57.25 L627.00 58.50 L642.00 59.75" stroke="#333" stroke-width="0.75" fill="none"/><ellipse cx="650.70" cy="43.60" rx="1.9" ry="1.35" transform="rotate(-22 650.70 43.60)" fill="#111"/><line x1="649.20" y1="43.60" x2="649.20" y2="50.60" stroke="#111" stroke-width="0.6"/><ellipse cx="659.00" cy="40.30" rx="1.9" ry="1.35" transform="rotate(-22 659.00 40.30)" fill="#111"/><line x1="657.50" y1="40.30" x2="657.50" y2="50.80" stroke="#111" stroke-width="0.6"/><polygon points="649.20,50.60 657.50,50.80 657.50,52.10 649.20,51.90" fill="#111"/><ellipse cx="667.30" cy="36.10" rx="1.9" ry="1.35" transform="rotate(-22 667.30 36.10)" fill="#111"/><line x1="665.80" y1="36.10" x2="665.80" y2="48.10" stroke="#111" stroke-width="0.6"/><line x1="664.70" y1="37.75" x2="669.90" y2="37.75" stroke="#333" stroke-width="0.5"/><ellipse cx="682.20" cy="43.60" rx="1.9" ry="1.35" transform="rotate(-22 682.20 43.60)" fill="#111"/><line x1="680.70" y1="43.60" x2="680.70" y2="53.10" stroke="#111" stroke-width="0.6"/><text x="646.50" y="61.00" font-family="Liberation Serif" font-size="7" font-style="italic" font-weight="bold" text-anchor="start" fill="#000">sf</text><text x="115.00" y="78.80" font-family="Liberation Serif" font-size="6.3" font-style="normal" font-weight="normal" text-anchor="start" fill="#111">unis.</text><text x="115.00" y="83.30" font-family="Liberation Serif" font-size="6.3" font-style="normal" font-weight="normal" text-anchor="start" fill="#111">arco</text><ellipse cx="116.20" cy="98.00" rx="1.5" ry="1.0" transform="rotate(-22 116.20 98.00)" fill="none" stroke="#111" stroke-width="0.6"/><line x1="117.70" y1="98.00" x2="117.70" y2="88.50" stroke="#111" stroke-width="0.6"/><ellipse cx="159.40" cy="95.20" rx="1.9" ry="1.35" transform="rotate(-22 159.40 95.20)" fill="#111"/><line x1="160.90" y1="95.20" x2="160.90" y2="85.70" stroke="#111" stroke-width="0.6"/><ellipse cx="180.30" cy="95.10" rx="1.9" ry="1.35" transform="rotate(-22 180.30 95.10)" fill="#111"/><line x1="181.80" y1="95.10" x2="181.80" y2="85.60" stroke="#111" stroke-width="0.6"/><ellipse cx="204.00" cy="95.60" rx="1.9" ry="1.35" transform="rotate(-22 204.00 95.60)" fill="#111"/><line x1="205.50" y1="95.60" x2="205.50" y2="86.10" stroke="#111" stroke-width="0.6"/><path d="M205.50 86.10 q0.3 2.2 2.4 3.6 q0.9 0.9 0.5 2.4" stroke="#111" stroke-width="0.75" fill="none"/><line x1="213.50" y1="86.00" x2="213.50" y2="97.50" stroke="#111" stroke-width="0.6"/><line x1="232.80" y1="87.00" x2="232.80" y2="97.50" stroke="#111" stroke-width="0.6"/><line x1="252.30" y1="87.00" x2="252.30" y2="97.50" stroke="#111" stroke-width="0.6"/><ellipse cx="273.90" cy="95.10" rx="1.9" ry="1.35" transform="rotate(-22 273.90 95.10)" fill="#111"/><line x1="275.40" y1="95.10" x2="275.40" y2="85.60" stroke="#111" stroke-width="0.6"/><path d="M275.40 85.60 q0.3 2.2 2.4 3.6 q0.9 0.9 0.5 2.4" stroke="#111" stroke-width="0.75" fill="none"/><ellipse cx="288.30" cy="84.30" rx="1.9" ry="1.35" transform="rotate(-22 288.30 84.30)" fill="#111"/><ellipse cx="288.30" cy="88.80" rx="1.9" ry="1.35" transform="rotate(-22 288.30 88.80)" fill="#111"/><ellipse cx="288.30" cy="94.30" rx="1.9" ry="1.35" transform="rotate(-22 288.30 94.30)" fill="#111"/><line x1="286.80" y1="84.30" x2="286.80" y2="98.30" stroke="#111" stroke-width="0.6"/><ellipse cx="296.60" cy="84.30" rx="1.9" ry="1.35" transform="rotate(-22 296.60 84.30)" fill="#111"/><ellipse cx="296.60" cy="88.80" rx="1.9" ry="1.35" transform="rotate(-22 296.60 88.80)" fill="#111"/><line x1="295.10" y1="84.30" x2="295.10" y2="94.80" stroke="#111" stroke-width="0.6"/><ellipse cx="311.60" cy="84.30" rx="1.9" ry="1.35" transform="rotate(-22 311.60 84.30)" fill="#111"/><ellipse cx="311.60" cy="88.80" rx="1.9" ry="1.35" transform="rotate(-22 311.60 88.80)" fill="#111"/><ellipse cx="311.60" cy="92.60" rx="1.9" ry="1.35" transform="rotate(-22 311.60 92.60)" fill="#111"/><line x1="310.10" y1="84.30" x2="310.10" y2="96.60" stroke="#111" stroke-width="0.6"/><ellipse cx="321.90" cy="87.20" rx="1.9" ry="1.35" transform="rotate(-22 321.90 87.20)" fill="#111"/><line x1="320.40" y1="87.20" x2="320.40" y2="96.70" stroke="#111" stroke-width="0.6"/><text x="339.00" y="79.00" font-family="Liberation Serif" font-size="6" font-style="italic" font-weight="normal" text-anchor="start" fill="#111">div.</text><ellipse cx="339.80" cy="82.70" rx="1.9" ry="1.35" transform="rotate(-22 339.80 82.70)" fill="#111"/><ellipse cx="339.80" cy="92.60" rx="1.9" ry="1.35" transform="rotate(-22 339.80 92.60)" fill="#111"/><line x1="338.30" y1="82.70" x2="338.30" y2="96.60" stroke="#111" stroke-width="0.6"/><ellipse cx="348.50" cy="86.00" rx="1.9" ry="1.35" transform="rotate(-22 348.50 86.00)" fill="#111"/><ellipse cx="348.50" cy="95.50" rx="1.9" ry="1.35" transform="rotate(-22 348.50 95.50)" fill="#111"/><line x1="347.00" y1="86.00" x2="347.00" y2="98.50" stroke="#111" stroke-width="0.6"/><ellipse cx="356.80" cy="81.50" rx="1.9" ry="1.35" transform="rotate(-22 356.80 81.50)" fill="#111"/><ellipse cx="356.80" cy="90.20" rx="1.9" ry="1.35" transform="rotate(-22 356.80 90.20)" fill="#111"/><line x1="355.30" y1="81.50" x2="355.30" y2="95.20" stroke="#111" stroke-width="0.6"/><ellipse cx="371.00" cy="84.30" rx="1.9" ry="1.35" transform="rotate(-22 371.00 84.30)" fill="#111"/><ellipse cx="371.00" cy="94.00" rx="1.9" ry="1.35" transform="rotate(-22 371.00 94.00)" fill="#111"/><line x1="369.50" y1="84.30" x2="369.50" y2="97.00" stroke="#111" stroke-width="0.6"/><ellipse cx="390.80" cy="80.50" rx="1.9" ry="1.35" transform="rotate(-22 390.80 80.50)" fill="#111"/><ellipse cx="390.80" cy="90.20" rx="1.9" ry="1.35" transform="rotate(-22 390.80 90.20)" fill="#111"/><line x1="389.30" y1="80.50" x2="389.30" y2="95.20" stroke="#111" stroke-width="0.6"/><ellipse cx="409.10" cy="84.30" rx="1.9" ry="1.35" transform="rotate(-22 409.10 84.30)" fill="#111"/><ellipse cx="409.10" cy="94.30" rx="1.9" ry="1.35" transform="rotate(-22 409.10 94.30)" fill="#111"/><line x1="407.60" y1="84.30" x2="407.60" y2="97.30" stroke="#111" stroke-width="0.6"/><ellipse cx="425.70" cy="84.30" rx="1.9" ry="1.35" transform="rotate(-22 425.70 84.30)" fill="#111"/><ellipse cx="425.70" cy="90.20" rx="1.9" ry="1.35" transform="rotate(-22 425.70 90.20)" fill="#111"/><ellipse cx="425.70" cy="94.30" rx="1.9" ry="1.35" transform="rotate(-22 425.70 94.30)" fill="#111"/><line x1="424.20" y1="84.30" x2="424.20" y2="97.30" stroke="#111" stroke-width="0.6"/><ellipse cx="434.00" cy="87.20" rx="1.9" ry="1.35" transform="rotate(-22 434.00 87.20)" fill="#111"/><ellipse cx="434.00" cy="90.20" rx="1.9" ry="1.35" transform="rotate(-22 434.00 90.20)" fill="#111"/><line x1="432.50" y1="87.20" x2="432.50" y2="96.20" stroke="#111" stroke-width="0.6"/><path d="M410.00 84.00 Q418.00 80.00 426.00 83.00" stroke="#222" stroke-width="0.7" fill="none"/><path d="M436.00 95.00 Q442.50 98.00 449.00 95.00" stroke="#222" stroke-width="0.7" fill="none"/><ellipse cx="449.00" cy="86.00" rx="1.9" ry="1.35" transform="rotate(-22 449.00 86.00)" fill="#111"/><ellipse cx="449.00" cy="91.00" rx="1.9" ry="1.35" transform="rotate(-22 449.00 91.00)" fill="#111"/><line x1="447.50" y1="86.00" x2="447.50" y2="96.00" stroke="#111" stroke-width="0.6"/><ellipse cx="457.60" cy="80.50" rx="1.9" ry="1.35" transform="rotate(-22 457.60 80.50)" fill="#111"/><ellipse cx="457.60" cy="90.20" rx="1.9" ry="1.35" transform="rotate(-22 457.60 90.20)" fill="#111"/><line x1="456.10" y1="80.50" x2="456.10" y2="96.20" stroke="#111" stroke-width="0.6"/><ellipse cx="466.40" cy="77.50" rx="1.9" ry="1.35" transform="rotate(-22 466.40 77.50)" fill="#111"/><ellipse cx="466.40" cy="86.00" rx="1.9" ry="1.35" transform="rotate(-22 466.40 86.00)" fill="#111"/><line x1="464.90" y1="77.50" x2="464.90" y2="94.00" stroke="#111" stroke-width="0.6"/><line x1="463.80" y1="79.60" x2="469.00" y2="79.60" stroke="#333" stroke-width="0.5"/><line x1="463.80" y1="81.75" x2="469.00" y2="81.75" stroke="#333" stroke-width="0.5"/><ellipse cx="478.90" cy="84.30" rx="1.9" ry="1.35" transform="rotate(-22 478.90 84.30)" fill="#111"/><ellipse cx="478.90" cy="94.30" rx="1.9" ry="1.35" transform="rotate(-22 478.90 94.30)" fill="#111"/><line x1="477.40" y1="84.30" x2="477.40" y2="98.30" stroke="#111" stroke-width="0.6"/><ellipse cx="495.30" cy="77.50" rx="1.9" ry="1.35" transform="rotate(-22 495.30 77.50)" fill="#111"/><ellipse cx="495.30" cy="86.80" rx="1.9" ry="1.35" transform="rotate(-22 495.30 86.80)" fill="#111"/><line x1="493.80" y1="77.50" x2="493.80" y2="93.80" stroke="#111" stroke-width="0.6"/><line x1="492.70" y1="79.60" x2="497.90" y2="79.60" stroke="#333" stroke-width="0.5"/><line x1="492.70" y1="81.75" x2="497.90" y2="81.75" stroke="#333" stroke-width="0.5"/><ellipse cx="507.50" cy="86.00" rx="1.9" ry="1.35" transform="rotate(-22 507.50 86.00)" fill="#111"/><ellipse cx="507.50" cy="95.00" rx="1.9" ry="1.35" transform="rotate(-22 507.50 95.00)" fill="#111"/><line x1="506.00" y1="86.00" x2="506.00" y2="98.00" stroke="#111" stroke-width="0.6"/><text x="518.00" y="81.50" font-family="Liberation Serif" font-size="6.3" font-style="normal" font-weight="normal" text-anchor="start" fill="#111">unis.</text><path d="M544.00 100.70 L519.00 102.00 L544.00 103.30" stroke="#333" stroke-width="0.75" fill="none"/><path d="M562.00 100.70 L548.00 102.00 L562.00 103.30" stroke="#333" stroke-width="0.75" fill="none"/><ellipse cx="520.00" cy="94.30" rx="1.9" ry="1.35" transform="rotate(-22 520.00 94.30)" fill="#111"/><line x1="521.50" y1="94.30" x2="521.50" y2="88.30" stroke="#111" stroke-width="0.6"/><ellipse cx="531.50" cy="91.00" rx="1.9" ry="1.35" transform="rotate(-22 531.50 91.00)" fill="#111"/><line x1="533.00" y1="91.00" x2="533.00" y2="86.00" stroke="#111" stroke-width="0.6"/><polygon points="521.50,88.30 533.00,86.00 533.00,87.30 521.50,89.60" fill="#111"/><ellipse cx="546.50" cy="92.60" rx="1.9" ry="1.35" transform="rotate(-22 546.50 92.60)" fill="#111"/><line x1="548.00" y1="92.60" x2="548.00" y2="86.60" stroke="#111" stroke-width="0.6"/><ellipse cx="555.60" cy="89.80" rx="1.9" ry="1.35" transform="rotate(-22 555.60 89.80)" fill="#111"/><line x1="557.10" y1="89.80" x2="557.10" y2="84.80" stroke="#111" stroke-width="0.6"/><polygon points="548.00,86.60 557.10,84.80 557.10,86.10 548.00,87.90" fill="#111"/><ellipse cx="564.00" cy="82.70" rx="1.9" ry="1.35" transform="rotate(-22 564.00 82.70)" fill="#111"/><line x1="565.50" y1="82.70" x2="565.50" y2="76.70" stroke="#111" stroke-width="0.6"/><ellipse cx="579.00" cy="91.00" rx="1.9" ry="1.35" transform="rotate(-22 579.00 91.00)" fill="#111"/><line x1="580.50" y1="91.00" x2="580.50" y2="84.00" stroke="#111" stroke-width="0.6"/><ellipse cx="600.00" cy="84.30" rx="1.9" ry="1.35" transform="rotate(-22 600.00 84.30)" fill="#111"/><line x1="598.50" y1="84.30" x2="598.50" y2="93.30" stroke="#111" stroke-width="0.6"/><ellipse cx="614.60" cy="92.60" rx="1.9" ry="1.35" transform="rotate(-22 614.60 92.60)" fill="#111"/><line x1="616.10" y1="92.60" x2="616.10" y2="85.60" stroke="#111" stroke-width="0.6"/><ellipse cx="630.00" cy="98.00" rx="1.9" ry="1.35" transform="rotate(-22 630.00 98.00)" fill="#111"/><line x1="631.50" y1="98.00" x2="631.50" y2="90.00" stroke="#111" stroke-width="0.6"/><ellipse cx="637.50" cy="96.50" rx="1.9" ry="1.35" transform="rotate(-22 637.50 96.50)" fill="#111"/><line x1="639.00" y1="96.50" x2="639.00" y2="89.50" stroke="#111" stroke-width="0.6"/><polygon points="631.50,90.00 639.00,89.50 639.00,90.80 631.50,91.30" fill="#111"/><ellipse cx="650.70" cy="96.80" rx="1.9" ry="1.35" transform="rotate(-22 650.70 96.80)" fill="#111"/><line x1="652.20" y1="96.80" x2="652.20" y2="90.80" stroke="#111" stroke-width="0.6"/><ellipse cx="659.00" cy="94.30" rx="1.9" ry="1.35" transform="rotate(-22 659.00 94.30)" fill="#111"/><line x1="660.50" y1="94.30" x2="660.50" y2="88.30" stroke="#111" stroke-width="0.6"/><polygon points="652.20,90.80 660.50,88.30 660.50,89.60 652.20,92.10" fill="#111"/><ellipse cx="667.30" cy="88.50" rx="1.9" ry="1.35" transform="rotate(-22 667.30 88.50)" fill="#111"/><line x1="665.80" y1="88.50" x2="665.80" y2="98.00" stroke="#111" stroke-width="0.6"/><ellipse cx="682.20" cy="86.80" rx="1.9" ry="1.35" transform="rotate(-22 682.20 86.80)" fill="#111"/><ellipse cx="682.20" cy="96.80" rx="1.9" ry="1.35" transform="rotate(-22 682.20 96.80)" fill="#111"/><line x1="680.70" y1="86.80" x2="680.70" y2="98.80" stroke="#111" stroke-width="0.6"/><line x1="683.70" y1="80.00" x2="683.70" y2="86.80" stroke="#111" stroke-width="0.6"/><ellipse cx="116.80" cy="138.00" rx="1.9" ry="1.35" transform="rotate(-22 116.80 138.00)" fill="#111"/><line x1="118.30" y1="138.00" x2="118.30" y2="128.50" stroke="#111" stroke-width="0.6"/><ellipse cx="141.70" cy="134.80" rx="1.9" ry="1.35" transform="rotate(-22 141.70 134.80)" fill="#111"/><line x1="143.20" y1="134.80" x2="143.20" y2="125.30" stroke="#111" stroke-width="0.6"/><text x="115.00" y="148.50" font-family="Liberation Serif" font-size="7.5" font-style="italic" font-weight="bold" text-anchor="start" fill="#000">p</text><path d="M118.00 132.00 Q132.00 123.00 146.00 126.00" stroke="#222" stroke-width="0.7" fill="none"/><path d="M150.00 145.80 L122.00 146.60 L150.00 147.40" stroke="#333" stroke-width="0.75" fill="none"/><ellipse cx="426.60" cy="129.00" rx="1.9" ry="1.35" transform="rotate(-22 426.60 129.00)" fill="#111"/><line x1="425.10" y1="129.00" x2="425.10" y2="135.00" stroke="#111" stroke-width="0.6"/><ellipse cx="434.60" cy="126.60" rx="1.9" ry="1.35" transform="rotate(-22 434.60 126.60)" fill="#111"/><line x1="433.10" y1="126.60" x2="433.10" y2="135.60" stroke="#111" stroke-width="0.6"/><polygon points="425.10,135.80 433.10,136.30 433.10,137.60 425.10,137.10" fill="#111"/><path d="M447.00 144.75 L425.00 146.00 L447.00 147.25" stroke="#333" stroke-width="0.75" fill="none"/><ellipse cx="449.90" cy="128.30" rx="1.9" ry="1.35" transform="rotate(-22 449.90 128.30)" fill="#111"/><line x1="448.40" y1="128.30" x2="448.40" y2="135.30" stroke="#111" stroke-width="0.6"/><ellipse cx="458.20" cy="125.30" rx="1.9" ry="1.35" transform="rotate(-22 458.20 125.30)" fill="#111"/><line x1="456.70" y1="125.30" x2="456.70" y2="135.30" stroke="#111" stroke-width="0.6"/><polygon points="448.40,135.50 456.70,135.80 456.70,137.10 448.40,136.80" fill="#111"/><ellipse cx="467.30" cy="121.30" rx="1.9" ry="1.35" transform="rotate(-22 467.30 121.30)" fill="#111"/><line x1="465.80" y1="121.30" x2="465.80" y2="133.30" stroke="#111" stroke-width="0.6"/><line x1="464.70" y1="122.60" x2="469.90" y2="122.60" stroke="#333" stroke-width="0.5"/><line x1="464.70" y1="125.40" x2="469.90" y2="125.40" stroke="#333" stroke-width="0.5"/><ellipse cx="478.50" cy="129.60" rx="1.9" ry="1.35" transform="rotate(-22 478.50 129.60)" fill="#111"/><line x1="477.00" y1="129.60" x2="477.00" y2="139.10" stroke="#111" stroke-width="0.6"/><ellipse cx="495.60" cy="122.40" rx="1.9" ry="1.35" transform="rotate(-22 495.60 122.40)" fill="#111"/><line x1="494.10" y1="122.40" x2="494.10" y2="133.40" stroke="#111" stroke-width="0.6"/><line x1="493.00" y1="125.40" x2="498.20" y2="125.40" stroke="#333" stroke-width="0.5"/><ellipse cx="508.00" cy="130.70" rx="1.9" ry="1.35" transform="rotate(-22 508.00 130.70)" fill="#111"/><line x1="506.50" y1="130.70" x2="506.50" y2="140.20" stroke="#111" stroke-width="0.6"/><ellipse cx="523.40" cy="129.60" rx="1.9" ry="1.35" transform="rotate(-22 523.40 129.60)" fill="#111"/><line x1="521.90" y1="129.60" x2="521.90" y2="135.60" stroke="#111" stroke-width="0.6"/><ellipse cx="531.40" cy="126.90" rx="1.9" ry="1.35" transform="rotate(-22 531.40 126.90)" fill="#111"/><line x1="529.90" y1="126.90" x2="529.90" y2="135.90" stroke="#111" stroke-width="0.6"/><polygon points="521.90,135.80 529.90,136.20 529.90,137.50 521.90,137.10" fill="#111"/><path d="M520.00 127.00 Q527.00 122.00 534.00 125.00" stroke="#222" stroke-width="0.7" fill="none"/><ellipse cx="546.90" cy="128.50" rx="1.9" ry="1.35" transform="rotate(-22 546.90 128.50)" fill="#111"/><line x1="545.40" y1="128.50" x2="545.40" y2="135.50" stroke="#111" stroke-width="0.6"/><ellipse cx="555.30" cy="125.50" rx="1.9" ry="1.35" transform="rotate(-22 555.30 125.50)" fill="#111"/><line x1="553.80" y1="125.50" x2="553.80" y2="135.50" stroke="#111" stroke-width="0.6"/><polygon points="545.40,135.80 553.80,136.00 553.80,137.30 545.40,137.10" fill="#111"/><path d="M546.00 126.00 Q551.50 120.00 557.00 123.00" stroke="#222" stroke-width="0.7" fill="none"/><path d="M544.00 144.50 L520.00 146.00 L544.00 147.50" stroke="#333" stroke-width="0.75" fill="none"/><ellipse cx="564.40" cy="118.20" rx="1.9" ry="1.35" transform="rotate(-22 564.40 118.20)" fill="#111"/><line x1="562.90" y1="118.20" x2="562.90" y2="131.20" stroke="#111" stroke-width="0.6"/><line x1="561.80" y1="119.80" x2="567.00" y2="119.80" stroke="#333" stroke-width="0.5"/><line x1="561.80" y1="122.60" x2="567.00" y2="122.60" stroke="#333" stroke-width="0.5"/><line x1="561.80" y1="125.40" x2="567.00" y2="125.40" stroke="#333" stroke-width="0.5"/><ellipse cx="578.80" cy="126.90" rx="1.9" ry="1.35" transform="rotate(-22 578.80 126.90)" fill="#111"/><line x1="577.30" y1="126.90" x2="577.30" y2="136.40" stroke="#111" stroke-width="0.6"/><ellipse cx="599.30" cy="120.00" rx="1.9" ry="1.35" transform="rotate(-22 599.30 120.00)" fill="#111"/><line x1="597.80" y1="120.00" x2="597.80" y2="132.00" stroke="#111" stroke-width="0.6"/><line x1="596.70" y1="122.60" x2="601.90" y2="122.60" stroke="#333" stroke-width="0.5"/><line x1="596.70" y1="125.40" x2="601.90" y2="125.40" stroke="#333" stroke-width="0.5"/><ellipse cx="613.90" cy="127.80" rx="1.9" ry="1.35" transform="rotate(-22 613.90 127.80)" fill="#111"/><line x1="612.40" y1="127.80" x2="612.40" y2="137.30" stroke="#111" stroke-width="0.6"/><ellipse cx="628.90" cy="130.80" rx="1.9" ry="1.35" transform="rotate(-22 628.90 130.80)" fill="#111"/><line x1="627.40" y1="130.80" x2="627.40" y2="140.30" stroke="#111" stroke-width="0.6"/><path d="M642.00 144.25 L628.00 145.50 L642.00 146.75" stroke="#333" stroke-width="0.75" fill="none"/><ellipse cx="650.30" cy="131.90" rx="1.9" ry="1.35" transform="rotate(-22 650.30 131.90)" fill="#111"/><line x1="648.80" y1="131.90" x2="648.80" y2="136.90" stroke="#111" stroke-width="0.6"/><ellipse cx="659.00" cy="129.20" rx="1.9" ry="1.35" transform="rotate(-22 659.00 129.20)" fill="#111"/><line x1="657.50" y1="129.20" x2="657.50" y2="136.20" stroke="#111" stroke-width="0.6"/><polygon points="648.80,136.80 657.50,136.20 657.50,137.50 648.80,138.10" fill="#111"/><ellipse cx="667.60" cy="122.80" rx="1.9" ry="1.35" transform="rotate(-22 667.60 122.80)" fill="#111"/><line x1="666.10" y1="122.80" x2="666.10" y2="132.80" stroke="#111" stroke-width="0.6"/><line x1="665.00" y1="125.40" x2="670.20" y2="125.40" stroke="#333" stroke-width="0.5"/><ellipse cx="682.20" cy="131.90" rx="1.9" ry="1.35" transform="rotate(-22 682.20 131.90)" fill="#111"/><line x1="680.70" y1="131.90" x2="680.70" y2="141.40" stroke="#111" stroke-width="0.6"/><text x="646.50" y="148.00" font-family="Liberation Serif" font-size="7" font-style="italic" font-weight="bold" text-anchor="start" fill="#000">sf</text><ellipse cx="116.20" cy="172.00" rx="1.9" ry="1.35" transform="rotate(-22 116.20 172.00)" fill="#111"/><line x1="114.70" y1="172.00" x2="114.70" y2="181.50" stroke="#111" stroke-width="0.6"/><ellipse cx="141.70" cy="170.00" rx="1.9" ry="1.35" transform="rotate(-22 141.70 170.00)" fill="#111"/><line x1="140.20" y1="170.00" x2="140.20" y2="179.50" stroke="#111" stroke-width="0.6"/><path d="M118.00 168.00 Q132.00 161.00 146.00 164.00" stroke="#222" stroke-width="0.7" fill="none"/><text x="115.00" y="190.50" font-family="Liberation Serif" font-size="6.2" font-style="italic" font-weight="normal" text-anchor="start" fill="#111">cresc. molto</text><ellipse cx="426.00" cy="170.00" rx="1.9" ry="1.35" transform="rotate(-22 426.00 170.00)" fill="#111"/><line x1="424.50" y1="170.00" x2="424.50" y2="179.50" stroke="#111" stroke-width="0.6"/><ellipse cx="449.20" cy="176.00" rx="1.9" ry="1.35" transform="rotate(-22 449.20 176.00)" fill="#111"/><line x1="447.70" y1="176.00" x2="447.70" y2="185.50" stroke="#111" stroke-width="0.6"/><ellipse cx="466.50" cy="173.10" rx="1.9" ry="1.35" transform="rotate(-22 466.50 173.10)" fill="#111"/><line x1="465.00" y1="173.10" x2="465.00" y2="182.60" stroke="#111" stroke-width="0.6"/><ellipse cx="479.00" cy="171.90" rx="1.9" ry="1.35" transform="rotate(-22 479.00 171.90)" fill="#111"/><line x1="477.50" y1="171.90" x2="477.50" y2="181.40" stroke="#111" stroke-width="0.6"/><path d="M466.00 169.00 Q472.00 164.00 478.00 168.00" stroke="#222" stroke-width="0.7" fill="none"/><text x="464.70" y="190.80" font-family="Liberation Serif" font-size="6.8" font-style="italic" font-weight="normal" text-anchor="start" fill="#111">sonore</text><ellipse cx="495.30" cy="173.70" rx="1.9" ry="1.35" transform="rotate(-22 495.30 173.70)" fill="#111"/><line x1="493.80" y1="173.70" x2="493.80" y2="183.20" stroke="#111" stroke-width="0.6"/><ellipse cx="507.50" cy="173.10" rx="1.9" ry="1.35" transform="rotate(-22 507.50 173.10)" fill="#111"/><line x1="506.00" y1="173.10" x2="506.00" y2="182.60" stroke="#111" stroke-width="0.6"/><ellipse cx="519.40" cy="174.20" rx="1.9" ry="1.35" transform="rotate(-22 519.40 174.20)" fill="#111"/><line x1="517.90" y1="174.20" x2="517.90" y2="180.20" stroke="#111" stroke-width="0.6"/><ellipse cx="531.20" cy="171.30" rx="1.9" ry="1.35" transform="rotate(-22 531.20 171.30)" fill="#111"/><line x1="529.70" y1="171.30" x2="529.70" y2="179.30" stroke="#111" stroke-width="0.6"/><polygon points="517.90,180.50 529.70,179.50 529.70,180.80 517.90,181.80" fill="#111"/><path d="M528.00 166.80 L528.00 172.30 q2.4 -1 2 -2.2 q-0.4 -1 -2 0.2" stroke="#111" stroke-width="0.85" fill="none"/><path d="M545.00 187.50 L519.00 189.00 L545.00 190.50" stroke="#333" stroke-width="0.75" fill="none"/><ellipse cx="546.90" cy="172.90" rx="1.9" ry="1.35" transform="rotate(-22 546.90 172.90)" fill="#111"/><line x1="545.40" y1="172.90" x2="545.40" y2="179.90" stroke="#111" stroke-width="0.6"/><ellipse cx="555.30" cy="170.20" rx="1.9" ry="1.35" transform="rotate(-22 555.30 170.20)" fill="#111"/><line x1="553.80" y1="170.20" x2="553.80" y2="179.20" stroke="#111" stroke-width="0.6"/><polygon points="545.40,179.80 553.80,179.50 553.80,180.80 545.40,181.10" fill="#111"/><ellipse cx="564.40" cy="163.30" rx="1.9" ry="1.35" transform="rotate(-22 564.40 163.30)" fill="#111"/><line x1="562.90" y1="163.30" x2="562.90" y2="176.30" stroke="#111" stroke-width="0.6"/><line x1="561.80" y1="165.90" x2="567.00" y2="165.90" stroke="#333" stroke-width="0.5"/><line x1="561.80" y1="168.70" x2="567.00" y2="168.70" stroke="#333" stroke-width="0.5"/><ellipse cx="578.80" cy="171.80" rx="1.9" ry="1.35" transform="rotate(-22 578.80 171.80)" fill="#111"/><line x1="577.30" y1="171.80" x2="577.30" y2="181.30" stroke="#111" stroke-width="0.6"/><text x="561.00" y="191.50" font-family="Liberation Serif" font-size="7" font-style="italic" font-weight="bold" text-anchor="start" fill="#000">sf</text><ellipse cx="599.30" cy="165.60" rx="1.9" ry="1.35" transform="rotate(-22 599.30 165.60)" fill="#111"/><line x1="597.80" y1="165.60" x2="597.80" y2="177.60" stroke="#111" stroke-width="0.6"/><line x1="596.70" y1="168.70" x2="601.90" y2="168.70" stroke="#333" stroke-width="0.5"/><ellipse cx="613.90" cy="173.40" rx="1.9" ry="1.35" transform="rotate(-22 613.90 173.40)" fill="#111"/><line x1="612.40" y1="173.40" x2="612.40" y2="182.90" stroke="#111" stroke-width="0.6"/><ellipse cx="628.90" cy="178.60" rx="1.9" ry="1.35" transform="rotate(-22 628.90 178.60)" fill="#111"/><line x1="630.40" y1="178.60" x2="630.40" y2="169.10" stroke="#111" stroke-width="0.6"/><path d="M642.00 187.75 L628.00 189.00 L642.00 190.25" stroke="#333" stroke-width="0.75" fill="none"/><ellipse cx="650.30" cy="179.70" rx="1.9" ry="1.35" transform="rotate(-22 650.30 179.70)" fill="#111"/><line x1="651.80" y1="179.70" x2="651.80" y2="170.20" stroke="#111" stroke-width="0.6"/><ellipse cx="667.60" cy="180.90" rx="1.9" ry="1.35" transform="rotate(-22 667.60 180.90)" fill="#111"/><line x1="669.10" y1="180.90" x2="669.10" y2="171.40" stroke="#111" stroke-width="0.6"/><ellipse cx="682.20" cy="171.80" rx="1.9" ry="1.35" transform="rotate(-22 682.20 171.80)" fill="#111"/><line x1="683.70" y1="171.80" x2="683.70" y2="162.30" stroke="#111" stroke-width="0.6"/><text x="646.50" y="191.50" font-family="Liberation Serif" font-size="7" font-style="italic" font-weight="bold" text-anchor="start" fill="#000">sf</text><ellipse cx="116.20" cy="212.80" rx="1.5" ry="1.0" transform="rotate(-22 116.20 212.80)" fill="none" stroke="#111" stroke-width="0.6"/><line x1="114.70" y1="212.80" x2="114.70" y2="222.30" stroke="#111" stroke-width="0.6"/><line x1="113.60" y1="212.00" x2="118.80" y2="212.00" stroke="#333" stroke-width="0.5"/><path d="M118.00 209.00 Q132.00 203.00 146.00 206.00" stroke="#222" stroke-width="0.7" fill="none"/><text x="115.00" y="234.00" font-family="Liberation Serif" font-size="6.2" font-style="italic" font-weight="normal" text-anchor="start" fill="#111">cresc. molto</text><ellipse cx="426.00" cy="213.80" rx="1.9" ry="1.35" transform="rotate(-22 426.00 213.80)" fill="#111"/><line x1="424.50" y1="213.80" x2="424.50" y2="223.30" stroke="#111" stroke-width="0.6"/><ellipse cx="449.20" cy="219.30" rx="1.9" ry="1.35" transform="rotate(-22 449.20 219.30)" fill="#111"/><line x1="447.70" y1="219.30" x2="447.70" y2="228.80" stroke="#111" stroke-width="0.6"/><ellipse cx="466.50" cy="222.00" rx="1.5" ry="1.0" transform="rotate(-22 466.50 222.00)" fill="none" stroke="#111" stroke-width="0.6"/><line x1="468.00" y1="222.00" x2="468.00" y2="212.50" stroke="#111" stroke-width="0.6"/><ellipse cx="495.70" cy="222.90" rx="1.5" ry="1.0" transform="rotate(-22 495.70 222.90)" fill="none" stroke="#111" stroke-width="0.6"/><line x1="497.20" y1="222.90" x2="497.20" y2="213.40" stroke="#111" stroke-width="0.6"/><ellipse cx="519.40" cy="213.80" rx="1.9" ry="1.35" transform="rotate(-22 519.40 213.80)" fill="#111"/><line x1="517.90" y1="213.80" x2="517.90" y2="223.30" stroke="#111" stroke-width="0.6"/><rect x="326.3" y="26.8" width="12.6" height="7.2" fill="#fff" stroke="#444" stroke-width="0.5"/><text x="332.60" y="32.90" font-family="Liberation Sans" font-size="6" font-style="normal" font-weight="bold" text-anchor="middle" fill="#111">36</text><rect x="239.4" y="27" width="2" height="208" fill="#1fd22e"/><rect x="147" y="226.7" width="383" height="6.8" fill="#e9e9e9"/><rect x="147" y="233.5" width="383" height="1.1" fill="#4a4c50"/></g></svg><svg class="a" style="left:0;top:0" width="820" height="439" viewBox="0 0 820 439"><defs><clipPath id="gr"><rect x="68.5" y="246.2" width="733.3" height="132.0"/></clipPath><clipPath id="ky"><rect x="12.2" y="254" width="56.3" height="124.19999999999999"/></clipPath></defs><g clip-path="url(#gr)"><rect x="68.5" y="246.2" width="733.3" height="132.0" fill="#fafcfc"/><line x1="68.5" y1="248.75" x2="801.8" y2="248.75" stroke="#e9eded" stroke-width="0.4"/><rect x="68.5" y="254.25" width="733.3" height="5.5" fill="#dfe6e6"/><line x1="68.5" y1="254.25" x2="801.8" y2="254.25" stroke="#e9eded" stroke-width="0.4"/><line x1="68.5" y1="259.75" x2="801.8" y2="259.75" stroke="#e9eded" stroke-width="0.4"/><rect x="68.5" y="265.25" width="733.3" height="5.5" fill="#dfe6e6"/><line x1="68.5" y1="265.25" x2="801.8" y2="265.25" stroke="#e9eded" stroke-width="0.4"/><line x1="68.5" y1="270.75" x2="801.8" y2="270.75" stroke="#e9eded" stroke-width="0.4"/><line x1="68.5" y1="276.25" x2="801.8" y2="276.25" stroke="#e9eded" stroke-width="0.4"/><rect x="68.5" y="281.75" width="733.3" height="5.5" fill="#dfe6e6"/><line x1="68.5" y1="281.75" x2="801.8" y2="281.75" stroke="#e9eded" stroke-width="0.4"/><line x1="68.5" y1="287.25" x2="801.8" y2="287.25" stroke="#e9eded" stroke-width="0.4"/><rect x="68.5" y="292.75" width="733.3" height="5.5" fill="#dfe6e6"/><line x1="68.5" y1="292.75" x2="801.8" y2="292.75" stroke="#e9eded" stroke-width="0.4"/><line x1="68.5" y1="298.25" x2="801.8" y2="298.25" stroke="#e9eded" stroke-width="0.4"/><line x1="68.5" y1="303.75" x2="801.8" y2="303.75" stroke="#e9eded" stroke-width="0.4"/><rect x="68.5" y="309.25" width="733.3" height="5.5" fill="#dfe6e6"/><line x1="68.5" y1="309.25" x2="801.8" y2="309.25" stroke="#e9eded" stroke-width="0.4"/><line x1="68.5" y1="314.75" x2="801.8" y2="314.75" stroke="#e9eded" stroke-width="0.4"/><rect x="68.5" y="320.25" width="733.3" height="5.5" fill="#dfe6e6"/><line x1="68.5" y1="320.25" x2="801.8" y2="320.25" stroke="#e9eded" stroke-width="0.4"/><line x1="68.5" y1="325.75" x2="801.8" y2="325.75" stroke="#e9eded" stroke-width="0.4"/><rect x="68.5" y="331.25" width="733.3" height="5.5" fill="#dfe6e6"/><line x1="68.5" y1="331.25" x2="801.8" y2="331.25" stroke="#e9eded" stroke-width="0.4"/><line x1="68.5" y1="336.75" x2="801.8" y2="336.75" stroke="#e9eded" stroke-width="0.4"/><line x1="68.5" y1="342.25" x2="801.8" y2="342.25" stroke="#e9eded" stroke-width="0.4"/><rect x="68.5" y="347.75" width="733.3" height="5.5" fill="#dfe6e6"/><line x1="68.5" y1="347.75" x2="801.8" y2="347.75" stroke="#e9eded" stroke-width="0.4"/><line x1="68.5" y1="353.25" x2="801.8" y2="353.25" stroke="#e9eded" stroke-width="0.4"/><rect x="68.5" y="358.75" width="733.3" height="5.5" fill="#dfe6e6"/><line x1="68.5" y1="358.75" x2="801.8" y2="358.75" stroke="#e9eded" stroke-width="0.4"/><line x1="68.5" y1="364.25" x2="801.8" y2="364.25" stroke="#e9eded" stroke-width="0.4"/><line x1="68.5" y1="369.75" x2="801.8" y2="369.75" stroke="#e9eded" stroke-width="0.4"/><rect x="68.5" y="375.25" width="733.3" height="5.5" fill="#dfe6e6"/><line x1="68.5" y1="375.25" x2="801.8" y2="375.25" stroke="#e9eded" stroke-width="0.4"/><line x1="68.5" y1="380.75" x2="801.8" y2="380.75" stroke="#e9eded" stroke-width="0.4"/><rect x="68.5" y="246.2" width="733.3" height="7.800000000000011" fill="#eef1f1"/><line x1="76.80" y1="246.2" x2="76.80" y2="378.2" stroke="#b4bcbc" stroke-width="0.8"/><line x1="87.70" y1="254" x2="87.70" y2="378.2" stroke="#d0d7d7" stroke-width="0.5"/><line x1="98.60" y1="254" x2="98.60" y2="378.2" stroke="#d0d7d7" stroke-width="0.5"/><line x1="109.50" y1="254" x2="109.50" y2="378.2" stroke="#d0d7d7" stroke-width="0.5"/><line x1="120.40" y1="254" x2="120.40" y2="378.2" stroke="#d0d7d7" stroke-width="0.5"/><line x1="131.30" y1="254" x2="131.30" y2="378.2" stroke="#d0d7d7" stroke-width="0.5"/><line x1="142.20" y1="246.2" x2="142.20" y2="378.2" stroke="#b4bcbc" stroke-width="0.8"/><line x1="153.10" y1="254" x2="153.10" y2="378.2" stroke="#d0d7d7" stroke-width="0.5"/><line x1="164.00" y1="254" x2="164.00" y2="378.2" stroke="#d0d7d7" stroke-width="0.5"/><line x1="174.90" y1="254" x2="174.90" y2="378.2" stroke="#d0d7d7" stroke-width="0.5"/><line x1="185.80" y1="254" x2="185.80" y2="378.2" stroke="#d0d7d7" stroke-width="0.5"/><line x1="196.70" y1="254" x2="196.70" y2="378.2" stroke="#d0d7d7" stroke-width="0.5"/><line x1="207.60" y1="246.2" x2="207.60" y2="378.2" stroke="#b4bcbc" stroke-width="0.8"/><line x1="218.50" y1="254" x2="218.50" y2="378.2" stroke="#d0d7d7" stroke-width="0.5"/><line x1="229.40" y1="254" x2="229.40" y2="378.2" stroke="#d0d7d7" stroke-width="0.5"/><line x1="240.30" y1="254" x2="240.30" y2="378.2" stroke="#d0d7d7" stroke-width="0.5"/><line x1="251.20" y1="254" x2="251.20" y2="378.2" stroke="#d0d7d7" stroke-width="0.5"/><line x1="262.10" y1="254" x2="262.10" y2="378.2" stroke="#d0d7d7" stroke-width="0.5"/><line x1="273.00" y1="246.2" x2="273.00" y2="378.2" stroke="#b4bcbc" stroke-width="0.8"/><line x1="283.90" y1="254" x2="283.90" y2="378.2" stroke="#d0d7d7" stroke-width="0.5"/><line x1="294.80" y1="254" x2="294.80" y2="378.2" stroke="#d0d7d7" stroke-width="0.5"/><line x1="305.70" y1="254" x2="305.70" y2="378.2" stroke="#d0d7d7" stroke-width="0.5"/><line x1="316.60" y1="254" x2="316.60" y2="378.2" stroke="#d0d7d7" stroke-width="0.5"/><line x1="327.50" y1="254" x2="327.50" y2="378.2" stroke="#d0d7d7" stroke-width="0.5"/><line x1="338.40" y1="246.2" x2="338.40" y2="378.2" stroke="#b4bcbc" stroke-width="0.8"/><line x1="349.30" y1="254" x2="349.30" y2="378.2" stroke="#d0d7d7" stroke-width="0.5"/><line x1="360.20" y1="254" x2="360.20" y2="378.2" stroke="#d0d7d7" stroke-width="0.5"/><line x1="371.10" y1="254" x2="371.10" y2="378.2" stroke="#d0d7d7" stroke-width="0.5"/><line x1="382.00" y1="254" x2="382.00" y2="378.2" stroke="#d0d7d7" stroke-width="0.5"/><line x1="392.90" y1="254" x2="392.90" y2="378.2" stroke="#d0d7d7" stroke-width="0.5"/><line x1="403.80" y1="246.2" x2="403.80" y2="378.2" stroke="#b4bcbc" stroke-width="0.8"/><line x1="414.70" y1="254" x2="414.70" y2="378.2" stroke="#d0d7d7" stroke-width="0.5"/><line x1="425.60" y1="254" x2="425.60" y2="378.2" stroke="#d0d7d7" stroke-width="0.5"/><line x1="436.50" y1="254" x2="436.50" y2="378.2" stroke="#d0d7d7" stroke-width="0.5"/><line x1="447.40" y1="254" x2="447.40" y2="378.2" stroke="#d0d7d7" stroke-width="0.5"/><line x1="458.30" y1="254" x2="458.30" y2="378.2" stroke="#d0d7d7" stroke-width="0.5"/><line x1="469.20" y1="246.2" x2="469.20" y2="378.2" stroke="#b4bcbc" stroke-width="0.8"/><line x1="480.10" y1="254" x2="480.10" y2="378.2" stroke="#d0d7d7" stroke-width="0.5"/><line x1="491.00" y1="254" x2="491.00" y2="378.2" stroke="#d0d7d7" stroke-width="0.5"/><line x1="501.90" y1="254" x2="501.90" y2="378.2" stroke="#d0d7d7" stroke-width="0.5"/><line x1="512.80" y1="254" x2="512.80" y2="378.2" stroke="#d0d7d7" stroke-width="0.5"/><line x1="523.70" y1="254" x2="523.70" y2="378.2" stroke="#d0d7d7" stroke-width="0.5"/><line x1="534.60" y1="246.2" x2="534.60" y2="378.2" stroke="#b4bcbc" stroke-width="0.8"/><line x1="545.50" y1="254" x2="545.50" y2="378.2" stroke="#d0d7d7" stroke-width="0.5"/><line x1="556.40" y1="254" x2="556.40" y2="378.2" stroke="#d0d7d7" stroke-width="0.5"/><line x1="567.30" y1="254" x2="567.30" y2="378.2" stroke="#d0d7d7" stroke-width="0.5"/><line x1="578.20" y1="254" x2="578.20" y2="378.2" stroke="#d0d7d7" stroke-width="0.5"/><line x1="589.10" y1="254" x2="589.10" y2="378.2" stroke="#d0d7d7" stroke-width="0.5"/><line x1="600.00" y1="246.2" x2="600.00" y2="378.2" stroke="#b4bcbc" stroke-width="0.8"/><line x1="610.90" y1="254" x2="610.90" y2="378.2" stroke="#d0d7d7" stroke-width="0.5"/><line x1="621.80" y1="254" x2="621.80" y2="378.2" stroke="#d0d7d7" stroke-width="0.5"/><line x1="632.70" y1="254" x2="632.70" y2="378.2" stroke="#d0d7d7" stroke-width="0.5"/><line x1="643.60" y1="254" x2="643.60" y2="378.2" stroke="#d0d7d7" stroke-width="0.5"/><line x1="654.50" y1="254" x2="654.50" y2="378.2" stroke="#d0d7d7" stroke-width="0.5"/><line x1="665.40" y1="246.2" x2="665.40" y2="378.2" stroke="#b4bcbc" stroke-width="0.8"/><line x1="676.30" y1="254" x2="676.30" y2="378.2" stroke="#d0d7d7" stroke-width="0.5"/><line x1="687.20" y1="254" x2="687.20" y2="378.2" stroke="#d0d7d7" stroke-width="0.5"/><line x1="698.10" y1="254" x2="698.10" y2="378.2" stroke="#d0d7d7" stroke-width="0.5"/><line x1="709.00" y1="254" x2="709.00" y2="378.2" stroke="#d0d7d7" stroke-width="0.5"/><line x1="719.90" y1="254" x2="719.90" y2="378.2" stroke="#d0d7d7" stroke-width="0.5"/><line x1="730.80" y1="246.2" x2="730.80" y2="378.2" stroke="#b4bcbc" stroke-width="0.8"/><line x1="741.70" y1="254" x2="741.70" y2="378.2" stroke="#d0d7d7" stroke-width="0.5"/><line x1="752.60" y1="254" x2="752.60" y2="378.2" stroke="#d0d7d7" stroke-width="0.5"/><line x1="763.50" y1="254" x2="763.50" y2="378.2" stroke="#d0d7d7" stroke-width="0.5"/><line x1="774.40" y1="254" x2="774.40" y2="378.2" stroke="#d0d7d7" stroke-width="0.5"/><line x1="785.30" y1="254" x2="785.30" y2="378.2" stroke="#d0d7d7" stroke-width="0.5"/><line x1="796.20" y1="246.2" x2="796.20" y2="378.2" stroke="#b4bcbc" stroke-width="0.8"/><text x="78.00" y="250.8" font-family="Liberation Sans" font-size="3.4" font-weight="bold" fill="#333">29</text><text x="143.40" y="250.8" font-family="Liberation Sans" font-size="3.4" font-weight="bold" fill="#333">30</text><text x="470.40" y="250.8" font-family="Liberation Sans" font-size="3.4" font-weight="bold" fill="#333">31</text><text x="797.40" y="250.8" font-family="Liberation Sans" font-size="3.4" font-weight="bold" fill="#333">34</text><rect x="207.90" y="282.10" width="31.50" height="4.8" fill="#22dc48" stroke="#15b836" stroke-width="0.5"/><text x="208.80" y="285.35" font-family="Liberation Sans" font-size="2.6" fill="#3a4a50">D&#9839;5</text><rect x="240.50" y="287.60" width="9.70" height="4.8" fill="#22dc48" stroke="#15b836" stroke-width="0.5"/><text x="241.40" y="290.85" font-family="Liberation Sans" font-size="2.6" fill="#3a4a50">D5</text><rect x="186.10" y="298.60" width="20.20" height="4.8" fill="#22dc48" stroke="#15b836" stroke-width="0.5"/><text x="187.00" y="301.85" font-family="Liberation Sans" font-size="2.6" fill="#3a4a50">C5</text><rect x="251.30" y="298.60" width="20.40" height="4.8" fill="#22dc48" stroke="#15b836" stroke-width="0.5"/><text x="252.20" y="301.85" font-family="Liberation Sans" font-size="2.6" fill="#3a4a50">C5</text><rect x="164.30" y="309.60" width="20.40" height="4.8" fill="#22dc48" stroke="#15b836" stroke-width="0.5"/><text x="165.20" y="312.85" font-family="Liberation Sans" font-size="2.6" fill="#3a4a50">A&#9839;4</text><rect x="207.90" y="320.60" width="9.40" height="4.8" fill="#d6f5f3" stroke="#b8dcdb" stroke-width="0.5"/><text x="208.80" y="323.85" font-family="Liberation Sans" font-size="2.6" fill="#3a4a50">G&#9839;4</text><rect x="218.70" y="320.60" width="20.20" height="4.8" fill="#d6f5f3" stroke="#b8dcdb" stroke-width="0.5"/><text x="219.60" y="323.85" font-family="Liberation Sans" font-size="2.6" fill="#3a4a50">G&#9839;4</text><rect x="240.50" y="320.60" width="20.20" height="4.8" fill="#d6f5f3" stroke="#b8dcdb" stroke-width="0.5"/><text x="241.40" y="323.85" font-family="Liberation Sans" font-size="2.6" fill="#3a4a50">G&#9839;4</text><rect x="262.00" y="320.60" width="20.20" height="4.8" fill="#d6f5f3" stroke="#b8dcdb" stroke-width="0.5"/><text x="262.90" y="323.85" font-family="Liberation Sans" font-size="2.6" fill="#3a4a50">G&#9839;4</text><rect x="240.50" y="337.10" width="20.20" height="4.8" fill="#d6f5f3" stroke="#b8dcdb" stroke-width="0.5"/><text x="241.40" y="340.35" font-family="Liberation Sans" font-size="2.6" fill="#3a4a50">F4</text><rect x="262.00" y="337.10" width="20.20" height="4.8" fill="#d6f5f3" stroke="#b8dcdb" stroke-width="0.5"/><text x="262.90" y="340.35" font-family="Liberation Sans" font-size="2.6" fill="#3a4a50">F4</text><rect x="68.80" y="348.10" width="6.40" height="4.8" fill="#d6f5f3" stroke="#b8dcdb" stroke-width="0.5"/><text x="69.70" y="351.35" font-family="Liberation Sans" font-size="2.6" fill="#3a4a50">D&#9839;4</text><rect x="186.10" y="348.10" width="20.20" height="4.8" fill="#d6f5f3" stroke="#b8dcdb" stroke-width="0.5"/><text x="187.00" y="351.35" font-family="Liberation Sans" font-size="2.6" fill="#3a4a50">D&#9839;4</text><rect x="207.90" y="348.10" width="9.40" height="4.8" fill="#d6f5f3" stroke="#b8dcdb" stroke-width="0.5"/><text x="208.80" y="351.35" font-family="Liberation Sans" font-size="2.6" fill="#3a4a50">D&#9839;4</text><rect x="218.70" y="348.10" width="20.20" height="4.8" fill="#d6f5f3" stroke="#b8dcdb" stroke-width="0.5"/><text x="219.60" y="351.35" font-family="Liberation Sans" font-size="2.6" fill="#3a4a50">D&#9839;4</text><rect x="77.10" y="353.60" width="9.40" height="4.8" fill="#d6f5f3" stroke="#b8dcdb" stroke-width="0.5"/><text x="78.00" y="356.85" font-family="Liberation Sans" font-size="2.6" fill="#3a4a50">D4</text><rect x="240.50" y="353.60" width="9.70" height="4.8" fill="#d6f5f3" stroke="#b8dcdb" stroke-width="0.5"/><text x="241.40" y="356.85" font-family="Liberation Sans" font-size="2.6" fill="#3a4a50">D4</text><rect x="98.90" y="364.60" width="20.20" height="4.8" fill="#d6f5f3" stroke="#b8dcdb" stroke-width="0.5"/><text x="99.80" y="367.85" font-family="Liberation Sans" font-size="2.6" fill="#3a4a50">C4</text><rect x="186.10" y="364.60" width="20.20" height="4.8" fill="#d6f5f3" stroke="#b8dcdb" stroke-width="0.5"/><text x="187.00" y="367.85" font-family="Liberation Sans" font-size="2.6" fill="#3a4a50">C4</text><rect x="251.30" y="364.60" width="20.40" height="4.8" fill="#d6f5f3" stroke="#b8dcdb" stroke-width="0.5"/><text x="252.20" y="367.85" font-family="Liberation Sans" font-size="2.6" fill="#3a4a50">C4</text><rect x="120.40" y="375.60" width="10.00" height="4.8" fill="#d6f5f3" stroke="#b8dcdb" stroke-width="0.5"/><text x="121.30" y="378.85" font-family="Liberation Sans" font-size="2.6" fill="#3a4a50">A&#9839;3</text><rect x="142.50" y="375.60" width="20.40" height="4.8" fill="#22dc48" stroke="#15b836" stroke-width="0.5"/><text x="143.40" y="378.85" font-family="Liberation Sans" font-size="2.6" fill="#3a4a50">A&#9839;3</text><rect x="164.30" y="375.60" width="20.40" height="4.8" fill="#d6f5f3" stroke="#b8dcdb" stroke-width="0.5"/><text x="165.20" y="378.85" font-family="Liberation Sans" font-size="2.6" fill="#3a4a50">A&#9839;3</text><rect x="327.50" y="287.60" width="9.90" height="4.8" fill="#22dc48" stroke="#15b836" stroke-width="0.5"/><text x="328.40" y="290.85" font-family="Liberation Sans" font-size="2.6" fill="#3a4a50">D5</text><rect x="382.30" y="287.60" width="20.30" height="4.8" fill="#d6f5f3" stroke="#b8dcdb" stroke-width="0.5"/><text x="383.20" y="290.85" font-family="Liberation Sans" font-size="2.6" fill="#3a4a50">D5</text><rect x="414.30" y="282.10" width="10.10" height="4.8" fill="#22dc48" stroke="#15b836" stroke-width="0.5"/><text x="415.20" y="285.35" font-family="Liberation Sans" font-size="2.6" fill="#3a4a50">D&#9839;5</text><rect x="447.80" y="271.10" width="19.90" height="4.8" fill="#22dc48" stroke="#15b836" stroke-width="0.5"/><text x="448.70" y="274.35" font-family="Liberation Sans" font-size="2.6" fill="#3a4a50">F5</text><rect x="294.90" y="298.60" width="31.20" height="4.8" fill="#22dc48" stroke="#15b836" stroke-width="0.5"/><text x="295.80" y="301.85" font-family="Liberation Sans" font-size="2.6" fill="#3a4a50">C5</text><rect x="338.70" y="298.60" width="9.50" height="4.8" fill="#d6f5f3" stroke="#b8dcdb" stroke-width="0.5"/><text x="339.60" y="301.85" font-family="Liberation Sans" font-size="2.6" fill="#3a4a50">C5</text><rect x="349.80" y="298.60" width="19.40" height="4.8" fill="#d6f5f3" stroke="#b8dcdb" stroke-width="0.5"/><text x="350.70" y="301.85" font-family="Liberation Sans" font-size="2.6" fill="#3a4a50">C5</text><rect x="272.80" y="309.60" width="20.70" height="4.8" fill="#22dc48" stroke="#15b836" stroke-width="0.5"/><text x="273.70" y="312.85" font-family="Liberation Sans" font-size="2.6" fill="#3a4a50">A&#9839;4</text><rect x="371.30" y="309.60" width="9.90" height="4.8" fill="#d6f5f3" stroke="#b8dcdb" stroke-width="0.5"/><text x="372.20" y="312.85" font-family="Liberation Sans" font-size="2.6" fill="#3a4a50">A&#9839;4</text><rect x="414.90" y="309.60" width="9.50" height="4.8" fill="#d6f5f3" stroke="#b8dcdb" stroke-width="0.5"/><text x="415.80" y="312.85" font-family="Liberation Sans" font-size="2.6" fill="#3a4a50">A&#9839;4</text><rect x="284.10" y="320.60" width="20.00" height="4.8" fill="#d6f5f3" stroke="#b8dcdb" stroke-width="0.5"/><text x="285.00" y="323.85" font-family="Liberation Sans" font-size="2.6" fill="#3a4a50">G&#9839;4</text><rect x="305.90" y="320.60" width="20.20" height="4.8" fill="#d6f5f3" stroke="#b8dcdb" stroke-width="0.5"/><text x="306.80" y="323.85" font-family="Liberation Sans" font-size="2.6" fill="#3a4a50">G&#9839;4</text><rect x="327.50" y="320.60" width="9.90" height="4.8" fill="#d6f5f3" stroke="#b8dcdb" stroke-width="0.5"/><text x="328.40" y="323.85" font-family="Liberation Sans" font-size="2.6" fill="#3a4a50">G&#9839;4</text><rect x="382.30" y="320.60" width="20.40" height="4.8" fill="#d6f5f3" stroke="#b8dcdb" stroke-width="0.5"/><text x="383.20" y="323.85" font-family="Liberation Sans" font-size="2.6" fill="#3a4a50">G&#9839;4</text><rect x="425.70" y="320.60" width="20.20" height="4.8" fill="#d6f5f3" stroke="#b8dcdb" stroke-width="0.5"/><text x="426.60" y="323.85" font-family="Liberation Sans" font-size="2.6" fill="#3a4a50">G&#9839;4</text><rect x="458.20" y="320.60" width="9.50" height="4.8" fill="#d6f5f3" stroke="#b8dcdb" stroke-width="0.5"/><text x="459.10" y="323.85" font-family="Liberation Sans" font-size="2.6" fill="#3a4a50">G&#9839;4</text><rect x="404.30" y="326.10" width="9.40" height="4.8" fill="#d6f5f3" stroke="#b8dcdb" stroke-width="0.5"/><text x="405.20" y="329.35" font-family="Liberation Sans" font-size="2.6" fill="#3a4a50">G4</text><rect x="414.90" y="326.10" width="9.50" height="4.8" fill="#d6f5f3" stroke="#b8dcdb" stroke-width="0.5"/><text x="415.80" y="329.35" font-family="Liberation Sans" font-size="2.6" fill="#3a4a50">G4</text><rect x="284.10" y="337.10" width="20.00" height="4.8" fill="#d6f5f3" stroke="#b8dcdb" stroke-width="0.5"/><text x="285.00" y="340.35" font-family="Liberation Sans" font-size="2.6" fill="#3a4a50">F4</text><rect x="305.90" y="337.10" width="20.20" height="4.8" fill="#d6f5f3" stroke="#b8dcdb" stroke-width="0.5"/><text x="306.80" y="340.35" font-family="Liberation Sans" font-size="2.6" fill="#3a4a50">F4</text><rect x="327.50" y="337.10" width="9.90" height="4.8" fill="#d6f5f3" stroke="#b8dcdb" stroke-width="0.5"/><text x="328.40" y="340.35" font-family="Liberation Sans" font-size="2.6" fill="#3a4a50">F4</text><rect x="338.70" y="337.10" width="9.50" height="4.8" fill="#d6f5f3" stroke="#b8dcdb" stroke-width="0.5"/><text x="339.60" y="340.35" font-family="Liberation Sans" font-size="2.6" fill="#3a4a50">F4</text><rect x="349.80" y="337.10" width="19.40" height="4.8" fill="#d6f5f3" stroke="#b8dcdb" stroke-width="0.5"/><text x="350.70" y="340.35" font-family="Liberation Sans" font-size="2.6" fill="#3a4a50">F4</text><rect x="371.30" y="337.10" width="9.90" height="4.8" fill="#d6f5f3" stroke="#b8dcdb" stroke-width="0.5"/><text x="372.20" y="340.35" font-family="Liberation Sans" font-size="2.6" fill="#3a4a50">F4</text><rect x="447.80" y="337.10" width="19.90" height="4.8" fill="#d6f5f3" stroke="#b8dcdb" stroke-width="0.5"/><text x="448.70" y="340.35" font-family="Liberation Sans" font-size="2.6" fill="#3a4a50">F4</text><rect x="414.90" y="348.10" width="20.20" height="4.8" fill="#d6f5f3" stroke="#b8dcdb" stroke-width="0.5"/><text x="415.80" y="351.35" font-family="Liberation Sans" font-size="2.6" fill="#3a4a50">D&#9839;4</text><rect x="437.00" y="348.10" width="20.70" height="4.8" fill="#d6f5f3" stroke="#b8dcdb" stroke-width="0.5"/><text x="437.90" y="351.35" font-family="Liberation Sans" font-size="2.6" fill="#3a4a50">D&#9839;4</text><rect x="327.50" y="353.60" width="9.90" height="4.8" fill="#d6f5f3" stroke="#b8dcdb" stroke-width="0.5"/><text x="328.40" y="356.85" font-family="Liberation Sans" font-size="2.6" fill="#3a4a50">D4</text><rect x="294.90" y="364.60" width="31.20" height="4.8" fill="#d6f5f3" stroke="#b8dcdb" stroke-width="0.5"/><text x="295.80" y="367.85" font-family="Liberation Sans" font-size="2.6" fill="#3a4a50">C4</text><rect x="272.80" y="375.60" width="9.90" height="4.8" fill="#d6f5f3" stroke="#b8dcdb" stroke-width="0.5"/><text x="273.70" y="378.85" font-family="Liberation Sans" font-size="2.6" fill="#3a4a50">A&#9839;3</text><rect x="382.30" y="375.60" width="9.40" height="4.8" fill="#d6f5f3" stroke="#b8dcdb" stroke-width="0.5"/><text x="383.20" y="378.85" font-family="Liberation Sans" font-size="2.6" fill="#3a4a50">A&#9839;3</text><rect x="404.30" y="375.60" width="9.40" height="4.8" fill="#d6f5f3" stroke="#b8dcdb" stroke-width="0.5"/><text x="405.20" y="378.85" font-family="Liberation Sans" font-size="2.6" fill="#3a4a50">A&#9839;3</text><rect x="426.30" y="254.60" width="20.00" height="4.8" fill="#22dc48" stroke="#15b836" stroke-width="0.5"/><text x="427.20" y="257.85" font-family="Liberation Sans" font-size="2.6" fill="#3a4a50">G&#9839;5</text><rect x="523.80" y="254.60" width="15.90" height="4.8" fill="#22dc48" stroke="#15b836" stroke-width="0.5"/><text x="524.70" y="257.85" font-family="Liberation Sans" font-size="2.6" fill="#3a4a50">G&#9839;5</text><rect x="491.30" y="271.10" width="20.40" height="4.8" fill="#22dc48" stroke="#15b836" stroke-width="0.5"/><text x="492.20" y="274.35" font-family="Liberation Sans" font-size="2.6" fill="#3a4a50">F5</text><rect x="512.30" y="271.10" width="10.40" height="4.8" fill="#22dc48" stroke="#15b836" stroke-width="0.5"/><text x="513.20" y="274.35" font-family="Liberation Sans" font-size="2.6" fill="#3a4a50">F5</text><rect x="524.70" y="287.60" width="10.00" height="4.8" fill="#d6f5f3" stroke="#b8dcdb" stroke-width="0.5"/><text x="525.60" y="290.85" font-family="Liberation Sans" font-size="2.6" fill="#3a4a50">D5</text><rect x="469.80" y="309.60" width="9.50" height="4.8" fill="#d6f5f3" stroke="#b8dcdb" stroke-width="0.5"/><text x="470.70" y="312.85" font-family="Liberation Sans" font-size="2.6" fill="#3a4a50">A&#9839;4</text><rect x="480.50" y="309.60" width="20.70" height="4.8" fill="#d6f5f3" stroke="#b8dcdb" stroke-width="0.5"/><text x="481.40" y="312.85" font-family="Liberation Sans" font-size="2.6" fill="#3a4a50">A&#9839;4</text><rect x="502.80" y="309.60" width="8.90" height="4.8" fill="#d6f5f3" stroke="#b8dcdb" stroke-width="0.5"/><text x="503.70" y="312.85" font-family="Liberation Sans" font-size="2.6" fill="#3a4a50">A&#9839;4</text><rect x="513.30" y="320.60" width="9.40" height="4.8" fill="#d6f5f3" stroke="#b8dcdb" stroke-width="0.5"/><text x="514.20" y="323.85" font-family="Liberation Sans" font-size="2.6" fill="#3a4a50">G&#9839;4</text><rect x="524.30" y="320.60" width="10.40" height="4.8" fill="#d6f5f3" stroke="#b8dcdb" stroke-width="0.5"/><text x="525.20" y="323.85" font-family="Liberation Sans" font-size="2.6" fill="#3a4a50">G&#9839;4</text><rect x="491.30" y="337.10" width="9.90" height="4.8" fill="#d6f5f3" stroke="#b8dcdb" stroke-width="0.5"/><text x="492.20" y="340.35" font-family="Liberation Sans" font-size="2.6" fill="#3a4a50">F4</text><rect x="502.80" y="337.10" width="8.90" height="4.8" fill="#d6f5f3" stroke="#b8dcdb" stroke-width="0.5"/><text x="503.70" y="340.35" font-family="Liberation Sans" font-size="2.6" fill="#3a4a50">F4</text><rect x="513.30" y="337.10" width="9.40" height="4.8" fill="#d6f5f3" stroke="#b8dcdb" stroke-width="0.5"/><text x="514.20" y="340.35" font-family="Liberation Sans" font-size="2.6" fill="#3a4a50">F4</text><rect x="469.80" y="348.10" width="9.50" height="4.8" fill="#d6f5f3" stroke="#b8dcdb" stroke-width="0.5"/><text x="470.70" y="351.35" font-family="Liberation Sans" font-size="2.6" fill="#3a4a50">D&#9839;4</text><rect x="480.50" y="348.10" width="9.20" height="4.8" fill="#d6f5f3" stroke="#b8dcdb" stroke-width="0.5"/><text x="481.40" y="351.35" font-family="Liberation Sans" font-size="2.6" fill="#3a4a50">D&#9839;4</text><rect x="513.30" y="375.60" width="15.40" height="4.8" fill="#d6f5f3" stroke="#b8dcdb" stroke-width="0.5"/><text x="514.20" y="378.85" font-family="Liberation Sans" font-size="2.6" fill="#3a4a50">A&#9839;3</text><rect x="749.00" y="271.10" width="2.70" height="4.8" fill="#d6f5f3" stroke="#b8dcdb" stroke-width="0.5"/><text x="749.90" y="274.35" font-family="Liberation Sans" font-size="2.6" fill="#3a4a50">F5</text><rect x="796.70" y="287.60" width="4.80" height="4.8" fill="#22dc48" stroke="#15b836" stroke-width="0.5"/><text x="797.60" y="290.85" font-family="Liberation Sans" font-size="2.6" fill="#3a4a50">D5</text><rect x="785.80" y="298.60" width="9.60" height="4.8" fill="#22dc48" stroke="#15b836" stroke-width="0.5"/><text x="786.70" y="301.85" font-family="Liberation Sans" font-size="2.6" fill="#3a4a50">C5</text><rect x="774.30" y="320.60" width="10.40" height="4.8" fill="#22dc48" stroke="#15b836" stroke-width="0.5"/><text x="775.20" y="323.85" font-family="Liberation Sans" font-size="2.6" fill="#3a4a50">G&#9839;4</text><rect x="749.00" y="326.10" width="24.10" height="4.8" fill="#22dc48" stroke="#15b836" stroke-width="0.5"/><text x="749.90" y="329.35" font-family="Liberation Sans" font-size="2.6" fill="#3a4a50">G4</text><rect x="774.30" y="348.10" width="20.40" height="4.8" fill="#d6f5f3" stroke="#b8dcdb" stroke-width="0.5"/><text x="775.20" y="351.35" font-family="Liberation Sans" font-size="2.6" fill="#3a4a50">D&#9839;4</text><rect x="797.00" y="353.60" width="4.50" height="4.8" fill="#d6f5f3" stroke="#b8dcdb" stroke-width="0.5"/><text x="797.90" y="356.85" font-family="Liberation Sans" font-size="2.6" fill="#3a4a50">D4</text><rect x="785.80" y="364.60" width="9.60" height="4.8" fill="#d6f5f3" stroke="#b8dcdb" stroke-width="0.5"/><text x="786.70" y="367.85" font-family="Liberation Sans" font-size="2.6" fill="#3a4a50">C4</text><rect x="675.90" y="348.10" width="9.80" height="4.8" fill="#22dc48" stroke="#15b836" stroke-width="0.5"/><text x="676.80" y="351.35" font-family="Liberation Sans" font-size="2.6" fill="#3a4a50">D&#9839;4</text><rect x="675.90" y="375.60" width="19.80" height="4.8" fill="#d6f5f3" stroke="#b8dcdb" stroke-width="0.5"/><text x="676.80" y="378.85" font-family="Liberation Sans" font-size="2.6" fill="#3a4a50">A&#9839;3</text><rect x="740.30" y="337.10" width="11.40" height="4.8" fill="#d6f5f3" stroke="#b8dcdb" stroke-width="0.5"/><text x="741.20" y="340.35" font-family="Liberation Sans" font-size="2.6" fill="#3a4a50">F4</text><line x1="286.3" y1="246.2" x2="286.3" y2="378.2" stroke="#1d9a35" stroke-width="0.9"/></g><rect x="67.6" y="246.2" width="1.4" height="132.0" fill="#2a2d31"/><g clip-path="url(#ky)"><rect x="12.2" y="254" width="56.3" height="124.19999999999999" fill="#fbfbfb"/><rect x="12.2" y="254.25" width="33.8" height="5.5" fill="#0c0c0c"/><line x1="46" y1="257.00" x2="67.6" y2="257.00" stroke="#d2d4d6" stroke-width="0.5"/><rect x="12.2" y="265.25" width="33.8" height="5.5" fill="#0c0c0c"/><line x1="46" y1="268.00" x2="67.6" y2="268.00" stroke="#d2d4d6" stroke-width="0.5"/><line x1="12.5" y1="276.25" x2="67.6" y2="276.25" stroke="#d2d4d6" stroke-width="0.5"/><rect x="12.2" y="281.75" width="33.8" height="5.5" fill="#0c0c0c"/><line x1="46" y1="284.50" x2="67.6" y2="284.50" stroke="#d2d4d6" stroke-width="0.5"/><rect x="12.2" y="292.75" width="33.8" height="5.5" fill="#0c0c0c"/><line x1="46" y1="295.50" x2="67.6" y2="295.50" stroke="#d2d4d6" stroke-width="0.5"/><line x1="12.5" y1="303.75" x2="67.6" y2="303.75" stroke="#d2d4d6" stroke-width="0.5"/><rect x="12.2" y="309.25" width="33.8" height="5.5" fill="#0c0c0c"/><line x1="46" y1="312.00" x2="67.6" y2="312.00" stroke="#d2d4d6" stroke-width="0.5"/><rect x="12.2" y="320.25" width="33.8" height="5.5" fill="#0c0c0c"/><line x1="46" y1="323.00" x2="67.6" y2="323.00" stroke="#d2d4d6" stroke-width="0.5"/><rect x="12.2" y="331.25" width="33.8" height="5.5" fill="#0c0c0c"/><line x1="46" y1="334.00" x2="67.6" y2="334.00" stroke="#d2d4d6" stroke-width="0.5"/><line x1="12.5" y1="342.25" x2="67.6" y2="342.25" stroke="#d2d4d6" stroke-width="0.5"/><rect x="12.2" y="347.75" width="33.8" height="5.5" fill="#0c0c0c"/><line x1="46" y1="350.50" x2="67.6" y2="350.50" stroke="#d2d4d6" stroke-width="0.5"/><rect x="12.2" y="358.75" width="33.8" height="5.5" fill="#0c0c0c"/><line x1="46" y1="361.50" x2="67.6" y2="361.50" stroke="#d2d4d6" stroke-width="0.5"/><line x1="12.5" y1="369.75" x2="67.6" y2="369.75" stroke="#d2d4d6" stroke-width="0.5"/><rect x="12.2" y="375.25" width="33.8" height="5.5" fill="#0c0c0c"/><line x1="46" y1="378.00" x2="67.6" y2="378.00" stroke="#d2d4d6" stroke-width="0.5"/><text x="66" y="301.6" font-family="Liberation Sans" font-size="3.8" fill="#333" text-anchor="end">C5</text><text x="66" y="367.6" font-family="Liberation Sans" font-size="3.8" fill="#333" text-anchor="end">C4</text></g><rect x="12.5" y="378.0" width="789.3" height="1.6" fill="#3a3d42"/></svg><div class="a" style="left:12.50px;top:246.20px;width:55.20px;height:7.80px;background:#2a3038;"></div><div class="a" style="left:13.70px;top:246.70px;width:54.00px;height:6.60px;background:#3a4654;border-radius:1px;border:0.5px solid #4b5868"></div><div class="a" style="left:15.30px;top:248.40px;width:3.80px;height:3.80px;background:#34d860;border-radius:50%"></div><svg class="a" style="left:0;top:0;overflow:visible" width="820" height="439"><text x="21.00" y="251.22" font-family="Liberation Sans" font-size="3" fill="#b8c0c8" text-anchor="start" font-weight="normal">Violins (1-4 Violins)</text></svg><svg class="a" style="left:0;top:0" width="820" height="439" viewBox="0 0 820 439"><polyline points="63.2,249.4 64.5,250.7 65.8,249.4" stroke="#b8c0c8" stroke-width="0.6" fill="none"/></svg><div class="a" style="left:12.50px;top:379.60px;width:55.60px;height:45.20px;background:#38424d;"></div><div class="a" style="left:19.50px;top:381.00px;width:47.40px;height:6.40px;background:#46525f;border-radius:1px"></div><div class="a" style="left:14.60px;top:382.40px;width:2.40px;height:2.40px;background:#dfe4e8;border-radius:0.3px"></div><svg class="a" style="left:0;top:0;overflow:visible" width="820" height="439"><text x="22.00" y="384.92" font-family="Liberation Sans" font-size="3" fill="#c4ccd4" text-anchor="start" font-weight="normal">Velocity</text></svg><svg class="a" style="left:0;top:0" width="820" height="439" viewBox="0 0 820 439"><polyline points="61.2,383.4 62.6,384.8 64,383.4" stroke="#c4ccd4" stroke-width="0.6" fill="none"/></svg><div class="a" style="left:39.60px;top:394.20px;width:5.40px;height:5.00px;background:transparent;border-bottom:0.8px solid #d8dde2"></div><div class="a" style="left:40.60px;top:394.60px;width:0.90px;height:4.40px;background:#d8dde2;"></div><div class="a" style="left:42.40px;top:393.60px;width:0.90px;height:5.40px;background:#d8dde2;"></div><div class="a" style="left:44.00px;top:395.40px;width:0.80px;height:3.60px;background:#d8dde2;"></div><div class="a" style="left:48.80px;top:391.30px;width:17.50px;height:9.20px;background:#303942;border-radius:1px;border:0.5px solid #4a5560"></div><svg class="a" style="left:0;top:0;overflow:visible" width="820" height="439"><text x="55.50" y="396.72" font-family="Liberation Sans" font-size="3" fill="#9aa4ae" text-anchor="start" font-weight="normal">1</text></svg><div class="a" style="left:63.40px;top:392.60px;width:1.60px;height:6.00px;background:transparent;"></div><svg class="a" style="left:0;top:0" width="820" height="439" viewBox="0 0 820 439"><rect x="68.5" y="379.6" width="733.3" height="45.2" fill="#fefefe"/><line x1="76.80" y1="379.6" x2="76.80" y2="424.8" stroke="#dfe3e3" stroke-width="0.6"/><line x1="98.60" y1="379.6" x2="98.60" y2="424.8" stroke="#eef0f0" stroke-width="0.6"/><line x1="120.40" y1="379.6" x2="120.40" y2="424.8" stroke="#eef0f0" stroke-width="0.6"/><line x1="142.20" y1="379.6" x2="142.20" y2="424.8" stroke="#dfe3e3" stroke-width="0.6"/><line x1="164.00" y1="379.6" x2="164.00" y2="424.8" stroke="#eef0f0" stroke-width="0.6"/><line x1="185.80" y1="379.6" x2="185.80" y2="424.8" stroke="#eef0f0" stroke-width="0.6"/><line x1="207.60" y1="379.6" x2="207.60" y2="424.8" stroke="#dfe3e3" stroke-width="0.6"/><line x1="229.40" y1="379.6" x2="229.40" y2="424.8" stroke="#eef0f0" stroke-width="0.6"/><line x1="251.20" y1="379.6" x2="251.20" y2="424.8" stroke="#eef0f0" stroke-width="0.6"/><line x1="273.00" y1="379.6" x2="273.00" y2="424.8" stroke="#dfe3e3" stroke-width="0.6"/><line x1="294.80" y1="379.6" x2="294.80" y2="424.8" stroke="#eef0f0" stroke-width="0.6"/><line x1="316.60" y1="379.6" x2="316.60" y2="424.8" stroke="#eef0f0" stroke-width="0.6"/><line x1="338.40" y1="379.6" x2="338.40" y2="424.8" stroke="#dfe3e3" stroke-width="0.6"/><line x1="360.20" y1="379.6" x2="360.20" y2="424.8" stroke="#eef0f0" stroke-width="0.6"/><line x1="382.00" y1="379.6" x2="382.00" y2="424.8" stroke="#eef0f0" stroke-width="0.6"/><line x1="403.80" y1="379.6" x2="403.80" y2="424.8" stroke="#dfe3e3" stroke-width="0.6"/><line x1="425.60" y1="379.6" x2="425.60" y2="424.8" stroke="#eef0f0" stroke-width="0.6"/><line x1="447.40" y1="379.6" x2="447.40" y2="424.8" stroke="#eef0f0" stroke-width="0.6"/><line x1="469.20" y1="379.6" x2="469.20" y2="424.8" stroke="#dfe3e3" stroke-width="0.6"/><line x1="491.00" y1="379.6" x2="491.00" y2="424.8" stroke="#eef0f0" stroke-width="0.6"/><line x1="512.80" y1="379.6" x2="512.80" y2="424.8" stroke="#eef0f0" stroke-width="0.6"/><line x1="534.60" y1="379.6" x2="534.60" y2="424.8" stroke="#dfe3e3" stroke-width="0.6"/><line x1="556.40" y1="379.6" x2="556.40" y2="424.8" stroke="#eef0f0" stroke-width="0.6"/><line x1="578.20" y1="379.6" x2="578.20" y2="424.8" stroke="#eef0f0" stroke-width="0.6"/><line x1="600.00" y1="379.6" x2="600.00" y2="424.8" stroke="#dfe3e3" stroke-width="0.6"/><line x1="621.80" y1="379.6" x2="621.80" y2="424.8" stroke="#eef0f0" stroke-width="0.6"/><line x1="643.60" y1="379.6" x2="643.60" y2="424.8" stroke="#eef0f0" stroke-width="0.6"/><line x1="665.40" y1="379.6" x2="665.40" y2="424.8" stroke="#dfe3e3" stroke-width="0.6"/><line x1="687.20" y1="379.6" x2="687.20" y2="424.8" stroke="#eef0f0" stroke-width="0.6"/><line x1="709.00" y1="379.6" x2="709.00" y2="424.8" stroke="#eef0f0" stroke-width="0.6"/><line x1="730.80" y1="379.6" x2="730.80" y2="424.8" stroke="#dfe3e3" stroke-width="0.6"/><line x1="752.60" y1="379.6" x2="752.60" y2="424.8" stroke="#eef0f0" stroke-width="0.6"/><line x1="774.40" y1="379.6" x2="774.40" y2="424.8" stroke="#eef0f0" stroke-width="0.6"/><line x1="796.20" y1="379.6" x2="796.20" y2="424.8" stroke="#dfe3e3" stroke-width="0.6"/><rect x="67.6" y="379.6" width="1.4" height="45.2" fill="#2a2d31"/><rect x="75.90" y="390.6" width="2.6" height="32.4" fill="#2cd8d6"/><rect x="87.10" y="390.6" width="2.6" height="32.4" fill="#2cd8d6"/><rect x="98.00" y="390.6" width="2.6" height="32.4" fill="#2cd8d6"/><rect x="120.00" y="390.6" width="2.6" height="32.4" fill="#2cd8d6"/><rect x="130.90" y="390.6" width="2.6" height="32.4" fill="#2cd8d6"/><rect x="141.80" y="390.6" width="2.6" height="32.4" fill="#2cd862"/><rect x="163.20" y="390.6" width="2.6" height="32.4" fill="#2cd862"/><rect x="185.20" y="390.6" width="2.6" height="32.4" fill="#2cd862"/><rect x="196.10" y="390.6" width="2.6" height="32.4" fill="#2ab0e4"/><rect x="207.00" y="390.6" width="2.6" height="32.4" fill="#2cd862"/><rect x="218.20" y="390.6" width="2.6" height="32.4" fill="#2ab0e4"/><rect x="229.00" y="390.6" width="2.6" height="32.4" fill="#2ab0e4"/><rect x="239.90" y="390.6" width="2.6" height="32.4" fill="#2cd862"/><rect x="251.10" y="390.6" width="2.6" height="32.4" fill="#2cd862"/><rect x="262.00" y="390.6" width="2.6" height="32.4" fill="#2cd8d6"/><rect x="272.80" y="390.6" width="2.6" height="32.4" fill="#2cd862"/><rect x="284.00" y="390.6" width="2.6" height="32.4" fill="#2cd8d6"/><rect x="293.90" y="390.6" width="2.6" height="32.4" fill="#2cd862"/><rect x="305.40" y="390.6" width="2.6" height="32.4" fill="#2cd8d6"/><rect x="316.30" y="390.6" width="2.6" height="32.4" fill="#2ab0e4"/><rect x="327.50" y="390.6" width="2.6" height="32.4" fill="#2cd862"/><rect x="337.90" y="390.6" width="2.6" height="32.4" fill="#2cd862"/><rect x="349.10" y="390.6" width="2.6" height="32.4" fill="#2ab0e4"/><rect x="360.00" y="390.6" width="2.6" height="32.4" fill="#2ab0e4"/><rect x="370.80" y="390.6" width="2.6" height="32.4" fill="#2cd862"/><rect x="381.40" y="390.6" width="2.6" height="32.4" fill="#2cd862"/><rect x="403.70" y="390.6" width="2.6" height="32.4" fill="#2cd862"/><rect x="414.30" y="390.6" width="2.6" height="32.4" fill="#2cd862"/><rect x="425.20" y="390.6" width="2.6" height="32.4" fill="#2cd862"/><rect x="435.70" y="390.6" width="2.6" height="32.4" fill="#2cd8d6"/><rect x="447.20" y="390.6" width="2.6" height="32.4" fill="#2cd862"/><rect x="458.10" y="390.6" width="2.6" height="32.4" fill="#2cd8d6"/><rect x="469.00" y="390.6" width="2.6" height="32.4" fill="#2cd862"/><rect x="480.20" y="390.6" width="2.6" height="32.4" fill="#2cd8d6"/><rect x="491.00" y="390.6" width="2.6" height="32.4" fill="#2cd862"/><rect x="501.90" y="390.6" width="2.6" height="32.4" fill="#2cd8d6"/><rect x="512.40" y="390.6" width="2.6" height="32.4" fill="#2cd862"/><rect x="523.70" y="390.6" width="2.6" height="32.4" fill="#2cd862"/><rect x="534.50" y="390.6" width="2.6" height="32.4" fill="#2cd862"/><rect x="545.40" y="390.6" width="2.6" height="32.4" fill="#2cd862"/><rect x="555.90" y="390.6" width="2.6" height="32.4" fill="#2cd862"/><rect x="578.00" y="390.6" width="2.6" height="32.4" fill="#2cd862"/><rect x="599.90" y="390.6" width="2.6" height="32.4" fill="#2cd862"/><rect x="621.80" y="390.6" width="2.6" height="32.4" fill="#2cd862"/><rect x="643.50" y="390.6" width="2.6" height="32.4" fill="#2cd862"/><rect x="654.10" y="390.6" width="2.6" height="32.4" fill="#2cd862"/><rect x="665.40" y="390.6" width="2.6" height="32.4" fill="#2cd862"/><rect x="676.10" y="390.6" width="2.6" height="32.4" fill="#2cd862"/><rect x="686.70" y="390.6" width="2.6" height="32.4" fill="#2cd862"/><rect x="698.00" y="390.6" width="2.6" height="32.4" fill="#2cd862"/><rect x="708.70" y="390.6" width="2.6" height="32.4" fill="#2cd8d6"/><rect x="719.70" y="390.6" width="2.6" height="32.4" fill="#2cd862"/><rect x="730.30" y="390.6" width="2.6" height="32.4" fill="#2ab0e4"/><rect x="741.70" y="390.6" width="2.6" height="32.4" fill="#2cd862"/><rect x="752.30" y="390.6" width="2.6" height="32.4" fill="#2cd8d6"/><rect x="763.60" y="390.6" width="2.6" height="32.4" fill="#2cd862"/><rect x="774.20" y="390.6" width="2.6" height="32.4" fill="#2cd862"/><rect x="784.90" y="390.6" width="2.6" height="32.4" fill="#2cd862"/><rect x="795.90" y="390.6" width="2.6" height="32.4" fill="#2cd862"/><line x1="286.3" y1="379.6" x2="286.3" y2="423.6" stroke="#1d9a35" stroke-width="0.9"/></svg><div class="a" style="left:12.50px;top:235.10px;width:793.90px;height:10.10px;background:#1c1f23;"></div><div class="a" style="left:12.50px;top:235.10px;width:140.00px;height:10.10px;background:#252c35;"></div><div class="a" style="left:12.50px;top:245.20px;width:793.90px;height:1.00px;background:#111316;"></div><svg class="a" style="left:0;top:0" width="820" height="439" viewBox="0 0 820 439"><line x1="18.40" y1="239.00" x2="22.00" y2="239.00" stroke="#b8c0c8" stroke-width="0.6"/><line x1="18.40" y1="240.40" x2="22.00" y2="240.40" stroke="#b8c0c8" stroke-width="0.6"/><line x1="18.40" y1="241.80" x2="22.00" y2="241.80" stroke="#b8c0c8" stroke-width="0.6"/><line x1="17.60" y1="239.00" x2="18.20" y2="239.00" stroke="#b8c0c8" stroke-width="0.6"/><rect x="26.80" y="238.40" width="5.60" height="4.00" rx="0.4" fill="#b8c0c8"/><line x1="28.20" y1="238.40" x2="28.20" y2="241.40" stroke="#27303a" stroke-width="0.5"/><line x1="30.20" y1="238.40" x2="30.20" y2="241.40" stroke="#27303a" stroke-width="0.5"/><path d="M37.6 237.6 l3.6 4.4" stroke="#b8c0c8" stroke-width="1.0" fill="none"/><circle cx="41.60" cy="242.40" r="1.10" fill="#b8c0c8"/><rect x="47.50" y="237.70" width="2.20" height="2.20" rx="0.2" fill="#b8c0c8"/><rect x="50.10" y="237.70" width="2.20" height="2.20" rx="0.2" fill="#b8c0c8"/><rect x="47.50" y="240.30" width="2.20" height="2.20" rx="0.2" fill="#b8c0c8"/><rect x="50.10" y="240.30" width="2.20" height="2.20" rx="0.2" fill="#b8c0c8"/><rect x="57.10" y="238.30" width="5.00" height="4.20" rx="0.3" stroke="#b8c0c8" stroke-width="0.5" fill="none"/><line x1="59.60" y1="238.30" x2="59.60" y2="242.50" stroke="#b8c0c8" stroke-width="0.4"/><rect x="65.40" y="236.35" width="9.70" height="8.20" rx="1" fill="#1e6d9c"/><rect x="67.55" y="238.25" width="5.40" height="4.40" rx="0.3" stroke="#cfe4f0" stroke-width="0.5" fill="none"/><line x1="68.00" y1="240.40" x2="72.60" y2="240.40" stroke="#cfe4f0" stroke-width="0.5"/><rect x="85.90" y="236.35" width="9.30" height="8.20" rx="1" fill="#22b8ec"/><path d="M88.92 237.77 L92.59 241.13 L90.81 241.24 L91.86 243.12 L91.12 243.44 L90.07 241.55 L88.92 242.60 Z" fill="#0a2a40"/><path d="M98.20 242.40 L102.00 238.60" stroke="#d8dde2" stroke-width="1.0" fill="none"/><path d="M97.80 242.80 l0.4 -1.2 l0.8 0.8 z" fill="#d8dde2"/><line x1="107.50" y1="243.50" x2="112.50" y2="237.50" stroke="#8a9098" stroke-width="0.6"/><rect x="116.30" y="238.10" width="5.00" height="4.60" rx="0.3" stroke="#b8c0c8" stroke-width="0.5" fill="none"/><line x1="118.80" y1="238.10" x2="118.80" y2="242.70" stroke="#b8c0c8" stroke-width="0.4"/><line x1="116.30" y1="240.40" x2="121.30" y2="240.40" stroke="#b8c0c8" stroke-width="0.4"/><path d="M129.20 238.00 L131.40 241.96 L127.00 241.96 Z" stroke="#b8c0c8" stroke-width="0.6" fill="none"/><line x1="129.20" y1="238.00" x2="129.20" y2="242.20" stroke="#b8c0c8" stroke-width="0.5"/><rect x="142.80" y="237.80" width="2.40" height="5.20" rx="0.4" fill="#b8c0c8"/><path d="M800 240.4 h4.4 M802.2 238.2 v4.4" stroke="#b8c0c8" stroke-width="0.6" fill="none"/></svg><div class="a" style="left:12.50px;top:424.80px;width:55.60px;height:6.00px;background:#22272d;"></div><div class="a" style="left:12.70px;top:425.80px;width:44.30px;height:4.60px;background:#3a4450;border-radius:0.6px"></div><svg class="a" style="left:0;top:0;overflow:visible" width="820" height="439"><text x="17.50" y="429.12" font-family="Liberation Sans" font-size="3" fill="#dde4ea" text-anchor="start" font-weight="normal">Add Editor</text></svg><div class="a" style="left:59.40px;top:425.80px;width:7.10px;height:4.60px;background:#3a4450;border-radius:0.6px"></div><div class="a" style="left:68.50px;top:424.80px;width:733.00px;height:6.00px;background:#15181b;"></div><div class="a" style="left:74.50px;top:426.90px;width:9.80px;height:2.40px;background:#2aa8e0;border-radius:1px"></div><div class="a" style="left:461.70px;top:426.60px;width:180.50px;height:2.80px;background:#4a5058;border-radius:1.2px"></div><div class="a" style="left:801.80px;top:246.20px;width:4.80px;height:184.00px;background:#15171a;"></div><div class="a" style="left:802.20px;top:285.00px;width:3.20px;height:14.70px;background:#5a6068;border-radius:1.5px"></div><div class="a" style="left:802.60px;top:343.00px;width:2.40px;height:18.70px;background:#2aa8e0;border-radius:1px"></div><div class="a" style="left:801.80px;top:378.20px;width:4.60px;height:52.00px;background:#1a1d21;"></div><div class="a" style="left:0.00px;top:430.80px;width:820.00px;height:8.20px;background:#1f2328;"></div><div class="a" style="left:0.00px;top:430.80px;width:820.00px;height:0.50px;background:#101214;"></div><div class="a" style="left:7.60px;top:431.40px;width:5.60px;height:6.60px;background:#dfe4e8;border-radius:0.8px"></div><div class="a" style="left:13.60px;top:431.60px;width:5.40px;height:6.20px;background:#2c323a;border-radius:0.8px"></div><svg class="a" style="left:0;top:0;overflow:visible" width="820" height="439"><text x="22.00" y="435.77" font-family="Liberation Sans" font-size="3.3" fill="#c8d0d8" text-anchor="start" font-weight="normal">Transposed Pitch</text></svg><svg class="a" style="left:0;top:0;overflow:visible" width="820" height="439"><text x="52.40" y="435.77" font-family="Liberation Sans" font-size="3.3" fill="#c8d0d8" text-anchor="start" font-weight="normal">No selection</text></svg><div class="a" style="left:689.50px;top:431.40px;width:7.30px;height:6.80px;background:#22b8ec;border-radius:1px"></div><div class="a" style="left:709.00px;top:431.60px;width:25.60px;height:6.60px;background:#2c343e;border-radius:1px"></div><svg class="a" style="left:0;top:0;overflow:visible" width="820" height="439"><text x="710.80" y="435.77" font-family="Liberation Sans" font-size="3.3" fill="#d0d6dc" text-anchor="start" font-weight="normal">Page View</text></svg><div class="a" style="left:737.00px;top:431.40px;width:8.20px;height:6.80px;background:#22b8ec;border-radius:1px"></div><div class="a" style="left:753.20px;top:431.60px;width:9.60px;height:6.60px;background:#14171b;border-radius:1px"></div><svg class="a" style="left:0;top:0;overflow:visible" width="820" height="439"><text x="754.50" y="435.60" font-family="Liberation Sans" font-size="3.1" fill="#c0c8d0" text-anchor="start" font-weight="normal">999</text></svg><div class="a" style="left:771.00px;top:431.40px;width:42.00px;height:7.00px;background:#2a3038;border-radius:1px"></div><svg class="a" style="left:0;top:0;overflow:visible" width="820" height="439"><text x="779.80" y="435.77" font-family="Liberation Sans" font-size="3.3" fill="#c8d0d8" text-anchor="start" font-weight="normal">100%</text></svg><svg class="a" style="left:0;top:0" width="820" height="439" viewBox="0 0 820 439"><path d="M14 427 l1.2 1.6 l1.2 -1.6 z" fill="#c0c8d0"/><path d="M61.8 426.8 l2.4 2.4 M64.2 426.8 l-2.4 2.4" stroke="#b0b8c0" stroke-width="0.5" fill="none"/><circle cx="72.00" cy="428.10" r="1.60" fill="#b0b8c0"/><path d="M106.3 426.8 l2.4 2.4 M108.7 426.8 l-2.4 2.4" stroke="#b0b8c0" stroke-width="0.6" fill="none"/><path d="M1.5 432.5 v4 M2.6 434.5 h3 M3.8 433.4 l-1.2 1.1 l1.2 1.1" stroke="#a0a8b0" stroke-width="0.5" fill="none"/><ellipse cx="9.80" cy="435.00" rx="1.10" ry="0.80" fill="#222"/><line x1="10.80" y1="434.90" x2="10.80" y2="431.40" stroke="#222" stroke-width="0.55"/><polyline points="15.10,434.00 16.30,435.20 17.50,434.00" stroke="#c0c8d0" stroke-width="0.6" fill="none"/><rect x="691.55" y="433.20" width="3.20" height="3.20" rx="0.3" stroke="#073a55" stroke-width="0.6" fill="none"/><path d="M700.6 436.6 q-0.8 -2 0 -3.6 v-1 M701.8 432.2 v2.4 M703 432.6 v2.2 M704.2 433.4 v2 q0 2 -1.8 2.4 h-1" stroke="#d0d6dc" stroke-width="0.6" fill="none"/><polyline points="730.50,434.25 731.60,435.35 732.70,434.25" stroke="#a0a8b0" stroke-width="0.6" fill="none"/><rect x="738.30" y="432.80" width="2.60" height="4.00" rx="0.2" stroke="#073a55" stroke-width="0.5" fill="none"/><rect x="741.30" y="432.80" width="2.60" height="4.00" rx="0.2" stroke="#073a55" stroke-width="0.5" fill="none"/><path d="M747.2 433.8 l1.2 -1.4 l1.2 1.4 z M747.2 435.8 l1.2 1.4 l1.2 -1.4 z" fill="#a0a8b0"/><path d="M764.6 433.8 l1.2 -1.4 l1.2 1.4 z M764.6 435.8 l1.2 1.4 l1.2 -1.4 z" fill="#a0a8b0"/><circle cx="774.60" cy="434.20" r="1.50" stroke="#b0b8c0" stroke-width="0.6" fill="none"/><line x1="775.70" y1="435.30" x2="776.90" y2="436.50" stroke="#b0b8c0" stroke-width="0.6"/><path d="M792.4 434 l1.2 1.4 l1.2 -1.4 z" fill="#a0a8b0"/><line x1="798.60" y1="434.80" x2="801.80" y2="434.80" stroke="#c8d0d8" stroke-width="0.6"/><path d="M806.2 434.8 h3.4 M807.9 433.1 v3.4" stroke="#c8d0d8" stroke-width="0.6" fill="none"/><path d="M815 433.4 l2.4 2.4 M817.4 433.4 l-2.4 2.4" stroke="#c8d0d8" stroke-width="0.5" fill="none"/></svg><div class="a" style="left:146.80px;top:97.60px;width:271.90px;height:177.50px;background:#1c1d21;box-shadow:0 3px 10px rgba(0,0,0,0.38), 0 0 0 0.6px #050505;border-radius:3px"></div><div class="a" style="left:146.80px;top:97.60px;width:271.90px;height:177.50px;background:#1c1d21;border-radius:3px;overflow:hidden"></div><div class="a" style="left:146.80px;top:97.60px;width:271.90px;height:7.20px;background:#44362e;border-radius:3px 3px 0 0"></div><div class="a" style="left:146.80px;top:104.90px;width:271.90px;height:0.60px;background:#121316;"></div><div class="a" style="left:148.30px;top:99.20px;width:3.90px;height:3.90px;background:#ee5b52;border-radius:50%"></div><div class="a" style="left:153.75px;top:99.20px;width:3.90px;height:3.90px;background:#f3bd31;border-radius:50%"></div><div class="a" style="left:159.20px;top:99.20px;width:3.90px;height:3.90px;background:#3fc43f;border-radius:50%"></div><svg class="a" style="left:0;top:0;overflow:visible" width="820" height="439"><text x="277.50" y="102.46" font-family="Liberation Sans" font-size="3.4" fill="#a09a95" text-anchor="start" font-weight="normal">Mixer</text></svg><svg class="a" style="left:0;top:0;overflow:visible" width="820" height="439"><text x="166.00" y="112.97" font-family="Liberation Sans" font-size="3.3" fill="#b9bdc2" text-anchor="start" font-weight="normal">Show</text></svg><div class="a" style="left:176.00px;top:107.90px;width:22.30px;height:7.90px;background:#1bb6ea;border-radius:1.5px"></div><svg class="a" style="left:0;top:0;overflow:visible" width="820" height="439"><text x="177.80" y="113.06" font-family="Liberation Sans" font-size="3.4" fill="#0a3550" text-anchor="start" font-weight="normal">Instruments</text></svg><div class="a" style="left:199.80px;top:107.90px;width:8.60px;height:7.90px;background:#2b2e34;border-radius:1.5px"></div><svg class="a" style="left:0;top:0;overflow:visible" width="820" height="439"><text x="200.80" y="112.97" font-family="Liberation Sans" font-size="3.3" fill="#c0c4c8" text-anchor="start" font-weight="normal">MIDI</text></svg><div class="a" style="left:210.00px;top:107.90px;width:11.80px;height:7.90px;background:#2b2e34;border-radius:1.5px"></div><svg class="a" style="left:0;top:0;overflow:visible" width="820" height="439"><text x="211.40" y="112.97" font-family="Liberation Sans" font-size="3.3" fill="#c0c4c8" text-anchor="start" font-weight="normal">Video</text></svg><div class="a" style="left:223.50px;top:107.90px;width:6.70px;height:7.90px;background:#1bb6ea;border-radius:1.5px"></div><svg class="a" style="left:0;top:0;overflow:visible" width="820" height="439"><text x="225.10" y="112.97" font-family="Liberation Sans" font-size="3.3" fill="#0a3550" text-anchor="start" font-weight="normal">FX</text></svg><div class="a" style="left:232.30px;top:107.90px;width:14.00px;height:7.90px;background:#2b2e34;border-radius:1.5px"></div><svg class="a" style="left:0;top:0;overflow:visible" width="820" height="439"><text x="233.60" y="112.97" font-family="Liberation Sans" font-size="3.3" fill="#c0c4c8" text-anchor="start" font-weight="normal">Unused</text></svg><svg class="a" style="left:0;top:0;overflow:visible" width="820" height="439"><text x="267.00" y="113.00" font-family="Liberation Sans" font-size="3.1" fill="#a8acb0" text-anchor="start" font-weight="normal">Deactivate all</text></svg><div class="a" style="left:289.50px;top:108.80px;width:5.00px;height:5.50px;background:#25282d;border-radius:1px"></div><svg class="a" style="left:0;top:0;overflow:visible" width="820" height="439"><text x="290.60" y="112.72" font-family="Liberation Sans" font-size="3" fill="#ccc" text-anchor="start" font-weight="normal">M</text></svg><div class="a" style="left:297.50px;top:108.80px;width:5.00px;height:5.50px;background:#25282d;border-radius:1px"></div><svg class="a" style="left:0;top:0;overflow:visible" width="820" height="439"><text x="298.60" y="112.72" font-family="Liberation Sans" font-size="3" fill="#ccc" text-anchor="start" font-weight="normal">S</text></svg><div class="a" style="left:323.80px;top:107.40px;width:54.50px;height:9.30px;background:#3a4858;border-radius:1.5px"></div><svg class="a" style="left:0;top:0;overflow:visible" width="820" height="439"><text x="326.50" y="113.46" font-family="Liberation Sans" font-size="3.4" fill="#d8dde2" text-anchor="start" font-weight="normal">Default</text></svg><div class="a" style="left:380.60px;top:107.80px;width:8.00px;height:8.50px;background:#2b2e34;border-radius:1.5px"></div><div class="a" style="left:391.00px;top:107.80px;width:8.00px;height:8.50px;background:#2b2e34;border-radius:1.5px"></div><div class="a" style="left:382.30px;top:110.60px;width:4.60px;height:2.80px;background:transparent;border:0.6px solid #c8ccd0;border-radius:2.3px 2.3px 0 0"></div><svg class="a" style="left:0;top:0" width="820" height="439" viewBox="0 0 820 439"><polyline points="373.8,111.2 375.2,112.6 376.6,111.2" stroke="#c8ccd8" stroke-width="0.6" fill="none"/><path d="M393.4 110.6 l1.6 -1.6 l1.6 1.6 M393.4 113.6 l1.6 1.6 l1.6 -1.6" stroke="#c8ccd0" stroke-width="0.6" fill="none"/></svg><div class="a" style="left:153.90px;top:120.10px;width:21.90px;height:47.00px;background:linear-gradient(#3b4047,#343940);border-radius:2px;border:0.4px solid #40454c"></div><div class="a" style="left:155.70px;top:123.00px;width:18.30px;height:4.70px;background:#26292e;border-radius:2.3px"></div><div class="a" style="left:156.70px;top:124.20px;width:2.30px;height:2.30px;background:#e8e8e8;border-radius:50%"></div><svg class="a" style="left:0;top:0;overflow:visible" width="820" height="439"><text x="159.90" y="126.33" font-family="Liberation Sans" font-size="2.6" fill="#d8dadc" text-anchor="start" font-weight="normal">INSERTS</text></svg><div class="a" style="left:155.70px;top:129.60px;width:18.30px;height:4.70px;background:#26292e;border-radius:2.3px"></div><div class="a" style="left:156.70px;top:130.80px;width:2.30px;height:2.30px;background:#e8e8e8;border-radius:50%"></div><svg class="a" style="left:0;top:0;overflow:visible" width="820" height="439"><text x="159.90" y="132.93" font-family="Liberation Sans" font-size="2.6" fill="#d8dadc" text-anchor="start" font-weight="normal">EQ</text></svg><div class="a" style="left:155.70px;top:136.20px;width:18.30px;height:4.70px;background:#26292e;border-radius:2.3px"></div><div class="a" style="left:156.70px;top:137.40px;width:2.30px;height:2.30px;background:#39a8e0;border-radius:50%"></div><svg class="a" style="left:0;top:0;overflow:visible" width="820" height="439"><text x="159.90" y="139.53" font-family="Liberation Sans" font-size="2.6" fill="#d8dadc" text-anchor="start" font-weight="normal">FX</text></svg><div class="a" style="left:153.90px;top:169.80px;width:21.90px;height:102.50px;background:linear-gradient(#30363d,#262a30 45%,#1e2126);border-radius:2px;border:0.5px solid #3d4249"></div><div class="a" style="left:155.70px;top:171.30px;width:18.30px;height:5.60px;background:#202328;border-radius:1.2px"></div><div class="a" style="left:162.45px;top:172.40px;width:2.20px;height:3.40px;background:#5cb0e0;border-radius:0.6px"></div><div class="a" style="left:165.05px;top:173.20px;width:2.20px;height:2.60px;background:#3a88c0;border-radius:0.6px"></div><div class="a" style="left:161.30px;top:178.20px;width:12.70px;height:5.00px;background:#1e2125;border-radius:1px"></div><svg class="a" style="left:0;top:0;overflow:visible" width="820" height="439"><text x="167.30" y="181.62" font-family="Liberation Sans" font-size="2.4" fill="#9ac" text-anchor="start" font-weight="normal">-0.00</text></svg><div class="a" style="left:157.30px;top:188.60px;width:4.60px;height:4.20px;background:#3a4047;border-radius:0.6px;border:0.4px solid #50565e"></div><div class="a" style="left:158.50px;top:189.80px;width:2.20px;height:1.80px;background:#d8dce0;border-radius:0.3px"></div><div class="a" style="left:157.30px;top:198.60px;width:4.60px;height:4.20px;background:#3a4047;border-radius:0.6px;border:0.4px solid #50565e"></div><div class="a" style="left:158.50px;top:199.80px;width:2.20px;height:1.80px;background:#d8dce0;border-radius:0.3px"></div><div class="a" style="left:167.00px;top:186.30px;width:2.90px;height:83.00px;background:#15171a;"></div><div class="a" style="left:172.10px;top:186.30px;width:1.80px;height:83.00px;background:#15171a;"></div><div class="a" style="left:165.10px;top:201.30px;width:5.00px;height:11.30px;background:linear-gradient(90deg,#bfc3c6,#f2f3f4,#c7cacd);border-radius:0.6px"></div><div class="a" style="left:165.50px;top:204.50px;width:4.20px;height:0.50px;background:#8a8e92;"></div><div class="a" style="left:165.50px;top:207.20px;width:4.20px;height:0.50px;background:#8a8e92;"></div><div class="a" style="left:165.50px;top:209.90px;width:4.20px;height:0.50px;background:#8a8e92;"></div><div class="a" style="left:154.70px;top:269.60px;width:20.30px;height:5.30px;background:#3fe46a;border-radius:1.8px"></div><svg class="a" style="left:0;top:0;overflow:visible" width="820" height="439"><text x="164.85" y="272.87" font-family="Liberation Sans" font-size="2.7" fill="#0d2a18" text-anchor="middle" font-weight="bold">Timpani</text></svg><div class="a" style="left:177.75px;top:120.10px;width:21.90px;height:47.00px;background:linear-gradient(#3b4047,#343940);border-radius:2px;border:0.4px solid #40454c"></div><div class="a" style="left:179.55px;top:123.00px;width:18.30px;height:4.70px;background:#26292e;border-radius:2.3px"></div><div class="a" style="left:180.55px;top:124.20px;width:2.30px;height:2.30px;background:#e8e8e8;border-radius:50%"></div><svg class="a" style="left:0;top:0;overflow:visible" width="820" height="439"><text x="183.75" y="126.33" font-family="Liberation Sans" font-size="2.6" fill="#d8dadc" text-anchor="start" font-weight="normal">INSERTS</text></svg><div class="a" style="left:179.55px;top:129.60px;width:18.30px;height:4.70px;background:#26292e;border-radius:2.3px"></div><div class="a" style="left:180.55px;top:130.80px;width:2.30px;height:2.30px;background:#e8e8e8;border-radius:50%"></div><svg class="a" style="left:0;top:0;overflow:visible" width="820" height="439"><text x="183.75" y="132.93" font-family="Liberation Sans" font-size="2.6" fill="#d8dadc" text-anchor="start" font-weight="normal">EQ</text></svg><div class="a" style="left:179.55px;top:136.20px;width:18.30px;height:4.70px;background:#26292e;border-radius:2.3px"></div><div class="a" style="left:180.55px;top:137.40px;width:2.30px;height:2.30px;background:#39a8e0;border-radius:50%"></div><svg class="a" style="left:0;top:0;overflow:visible" width="820" height="439"><text x="183.75" y="139.53" font-family="Liberation Sans" font-size="2.6" fill="#d8dadc" text-anchor="start" font-weight="normal">FX</text></svg><div class="a" style="left:177.75px;top:169.80px;width:21.90px;height:102.50px;background:linear-gradient(#30363d,#262a30 45%,#1e2126);border-radius:2px;border:0.5px solid #3d4249"></div><div class="a" style="left:179.55px;top:171.30px;width:18.30px;height:5.60px;background:#202328;border-radius:1.2px"></div><div class="a" style="left:186.30px;top:172.40px;width:2.20px;height:3.40px;background:#5cb0e0;border-radius:0.6px"></div><div class="a" style="left:188.90px;top:173.20px;width:2.20px;height:2.60px;background:#3a88c0;border-radius:0.6px"></div><div class="a" style="left:185.15px;top:178.20px;width:12.70px;height:5.00px;background:#1e2125;border-radius:1px"></div><svg class="a" style="left:0;top:0;overflow:visible" width="820" height="439"><text x="191.15" y="181.62" font-family="Liberation Sans" font-size="2.4" fill="#9ac" text-anchor="start" font-weight="normal">-0.00</text></svg><div class="a" style="left:181.15px;top:188.60px;width:4.60px;height:4.20px;background:#3a4047;border-radius:0.6px;border:0.4px solid #50565e"></div><div class="a" style="left:182.35px;top:189.80px;width:2.20px;height:1.80px;background:#d8dce0;border-radius:0.3px"></div><div class="a" style="left:181.15px;top:198.60px;width:4.60px;height:4.20px;background:#3a4047;border-radius:0.6px;border:0.4px solid #50565e"></div><div class="a" style="left:182.35px;top:199.80px;width:2.20px;height:1.80px;background:#d8dce0;border-radius:0.3px"></div><div class="a" style="left:190.85px;top:186.30px;width:2.90px;height:83.00px;background:#15171a;"></div><div class="a" style="left:195.95px;top:186.30px;width:1.80px;height:83.00px;background:#15171a;"></div><div class="a" style="left:188.95px;top:201.30px;width:5.00px;height:11.30px;background:linear-gradient(90deg,#bfc3c6,#f2f3f4,#c7cacd);border-radius:0.6px"></div><div class="a" style="left:189.35px;top:204.50px;width:4.20px;height:0.50px;background:#8a8e92;"></div><div class="a" style="left:189.35px;top:207.20px;width:4.20px;height:0.50px;background:#8a8e92;"></div><div class="a" style="left:189.35px;top:209.90px;width:4.20px;height:0.50px;background:#8a8e92;"></div><div class="a" style="left:178.55px;top:269.60px;width:20.30px;height:5.30px;background:#c9cbcd;border-radius:1.8px"></div><svg class="a" style="left:0;top:0;overflow:visible" width="820" height="439"><text x="188.70" y="272.87" font-family="Liberation Sans" font-size="2.7" fill="#222" text-anchor="middle" font-weight="bold">Side Drum</text></svg><div class="a" style="left:201.60px;top:120.10px;width:21.90px;height:47.00px;background:linear-gradient(#3b4047,#343940);border-radius:2px;border:0.4px solid #40454c"></div><div class="a" style="left:203.40px;top:123.00px;width:18.30px;height:4.70px;background:#26292e;border-radius:2.3px"></div><div class="a" style="left:204.40px;top:124.20px;width:2.30px;height:2.30px;background:#e8e8e8;border-radius:50%"></div><svg class="a" style="left:0;top:0;overflow:visible" width="820" height="439"><text x="207.60" y="126.33" font-family="Liberation Sans" font-size="2.6" fill="#d8dadc" text-anchor="start" font-weight="normal">INSERTS</text></svg><div class="a" style="left:203.40px;top:129.60px;width:18.30px;height:4.70px;background:#26292e;border-radius:2.3px"></div><div class="a" style="left:204.40px;top:130.80px;width:2.30px;height:2.30px;background:#e8e8e8;border-radius:50%"></div><svg class="a" style="left:0;top:0;overflow:visible" width="820" height="439"><text x="207.60" y="132.93" font-family="Liberation Sans" font-size="2.6" fill="#d8dadc" text-anchor="start" font-weight="normal">EQ</text></svg><div class="a" style="left:203.40px;top:136.20px;width:18.30px;height:4.70px;background:#26292e;border-radius:2.3px"></div><div class="a" style="left:204.40px;top:137.40px;width:2.30px;height:2.30px;background:#39a8e0;border-radius:50%"></div><svg class="a" style="left:0;top:0;overflow:visible" width="820" height="439"><text x="207.60" y="139.53" font-family="Liberation Sans" font-size="2.6" fill="#d8dadc" text-anchor="start" font-weight="normal">FX</text></svg><div class="a" style="left:201.60px;top:169.80px;width:21.90px;height:102.50px;background:linear-gradient(#30363d,#262a30 45%,#1e2126);border-radius:2px;border:0.5px solid #3d4249"></div><div class="a" style="left:203.40px;top:171.30px;width:18.30px;height:5.60px;background:#202328;border-radius:1.2px"></div><div class="a" style="left:210.15px;top:172.40px;width:2.20px;height:3.40px;background:#5cb0e0;border-radius:0.6px"></div><div class="a" style="left:212.75px;top:173.20px;width:2.20px;height:2.60px;background:#3a88c0;border-radius:0.6px"></div><div class="a" style="left:209.00px;top:178.20px;width:12.70px;height:5.00px;background:#1e2125;border-radius:1px"></div><svg class="a" style="left:0;top:0;overflow:visible" width="820" height="439"><text x="215.00" y="181.62" font-family="Liberation Sans" font-size="2.4" fill="#9ac" text-anchor="start" font-weight="normal">-0.00</text></svg><div class="a" style="left:205.00px;top:188.60px;width:4.60px;height:4.20px;background:#3a4047;border-radius:0.6px;border:0.4px solid #50565e"></div><div class="a" style="left:206.20px;top:189.80px;width:2.20px;height:1.80px;background:#d8dce0;border-radius:0.3px"></div><div class="a" style="left:205.00px;top:198.60px;width:4.60px;height:4.20px;background:#3a4047;border-radius:0.6px;border:0.4px solid #50565e"></div><div class="a" style="left:206.20px;top:199.80px;width:2.20px;height:1.80px;background:#d8dce0;border-radius:0.3px"></div><div class="a" style="left:214.70px;top:186.30px;width:2.90px;height:83.00px;background:#15171a;"></div><div class="a" style="left:219.80px;top:186.30px;width:1.80px;height:83.00px;background:#15171a;"></div><div class="a" style="left:212.80px;top:201.30px;width:5.00px;height:11.30px;background:linear-gradient(90deg,#bfc3c6,#f2f3f4,#c7cacd);border-radius:0.6px"></div><div class="a" style="left:213.20px;top:204.50px;width:4.20px;height:0.50px;background:#8a8e92;"></div><div class="a" style="left:213.20px;top:207.20px;width:4.20px;height:0.50px;background:#8a8e92;"></div><div class="a" style="left:213.20px;top:209.90px;width:4.20px;height:0.50px;background:#8a8e92;"></div><div class="a" style="left:202.40px;top:269.60px;width:20.30px;height:5.30px;background:#c9cbcd;border-radius:1.8px"></div><svg class="a" style="left:0;top:0;overflow:visible" width="820" height="439"><text x="212.55" y="272.87" font-family="Liberation Sans" font-size="2.7" fill="#222" text-anchor="middle" font-weight="bold">Triangle</text></svg><div class="a" style="left:225.45px;top:120.10px;width:21.90px;height:47.00px;background:linear-gradient(#3b4047,#343940);border-radius:2px;border:0.4px solid #40454c"></div><div class="a" style="left:227.25px;top:123.00px;width:18.30px;height:4.70px;background:#26292e;border-radius:2.3px"></div><div class="a" style="left:228.25px;top:124.20px;width:2.30px;height:2.30px;background:#e8e8e8;border-radius:50%"></div><svg class="a" style="left:0;top:0;overflow:visible" width="820" height="439"><text x="231.45" y="126.33" font-family="Liberation Sans" font-size="2.6" fill="#d8dadc" text-anchor="start" font-weight="normal">INSERTS</text></svg><div class="a" style="left:227.25px;top:129.60px;width:18.30px;height:4.70px;background:#26292e;border-radius:2.3px"></div><div class="a" style="left:228.25px;top:130.80px;width:2.30px;height:2.30px;background:#e8e8e8;border-radius:50%"></div><svg class="a" style="left:0;top:0;overflow:visible" width="820" height="439"><text x="231.45" y="132.93" font-family="Liberation Sans" font-size="2.6" fill="#d8dadc" text-anchor="start" font-weight="normal">EQ</text></svg><div class="a" style="left:227.25px;top:136.20px;width:18.30px;height:4.70px;background:#26292e;border-radius:2.3px"></div><div class="a" style="left:228.25px;top:137.40px;width:2.30px;height:2.30px;background:#39a8e0;border-radius:50%"></div><svg class="a" style="left:0;top:0;overflow:visible" width="820" height="439"><text x="231.45" y="139.53" font-family="Liberation Sans" font-size="2.6" fill="#d8dadc" text-anchor="start" font-weight="normal">FX</text></svg><div class="a" style="left:225.45px;top:169.80px;width:21.90px;height:102.50px;background:linear-gradient(#30363d,#262a30 45%,#1e2126);border-radius:2px;border:0.5px solid #3d4249"></div><div class="a" style="left:227.25px;top:171.30px;width:18.30px;height:5.60px;background:#202328;border-radius:1.2px"></div><div class="a" style="left:234.00px;top:172.40px;width:2.20px;height:3.40px;background:#5cb0e0;border-radius:0.6px"></div><div class="a" style="left:236.60px;top:173.20px;width:2.20px;height:2.60px;background:#3a88c0;border-radius:0.6px"></div><div class="a" style="left:232.85px;top:178.20px;width:12.70px;height:5.00px;background:#1e2125;border-radius:1px"></div><svg class="a" style="left:0;top:0;overflow:visible" width="820" height="439"><text x="238.85" y="181.62" font-family="Liberation Sans" font-size="2.4" fill="#9ac" text-anchor="start" font-weight="normal">-0.00</text></svg><div class="a" style="left:228.85px;top:188.60px;width:4.60px;height:4.20px;background:#3a4047;border-radius:0.6px;border:0.4px solid #50565e"></div><div class="a" style="left:230.05px;top:189.80px;width:2.20px;height:1.80px;background:#d8dce0;border-radius:0.3px"></div><div class="a" style="left:228.85px;top:198.60px;width:4.60px;height:4.20px;background:#3a4047;border-radius:0.6px;border:0.4px solid #50565e"></div><div class="a" style="left:230.05px;top:199.80px;width:2.20px;height:1.80px;background:#d8dce0;border-radius:0.3px"></div><div class="a" style="left:238.55px;top:186.30px;width:2.90px;height:83.00px;background:#15171a;"></div><div class="a" style="left:243.65px;top:186.30px;width:1.80px;height:83.00px;background:#15171a;"></div><div class="a" style="left:236.65px;top:201.30px;width:5.00px;height:11.30px;background:linear-gradient(90deg,#bfc3c6,#f2f3f4,#c7cacd);border-radius:0.6px"></div><div class="a" style="left:237.05px;top:204.50px;width:4.20px;height:0.50px;background:#8a8e92;"></div><div class="a" style="left:237.05px;top:207.20px;width:4.20px;height:0.50px;background:#8a8e92;"></div><div class="a" style="left:237.05px;top:209.90px;width:4.20px;height:0.50px;background:#8a8e92;"></div><div class="a" style="left:226.25px;top:269.60px;width:20.30px;height:5.30px;background:#c9cbcd;border-radius:1.8px"></div><svg class="a" style="left:0;top:0;overflow:visible" width="820" height="439"><text x="236.40" y="272.87" font-family="Liberation Sans" font-size="2.7" fill="#222" text-anchor="middle" font-weight="bold">Bass Drum</text></svg><div class="a" style="left:249.30px;top:120.10px;width:21.90px;height:47.00px;background:linear-gradient(#3b4047,#343940);border-radius:2px;border:0.4px solid #40454c"></div><div class="a" style="left:251.10px;top:123.00px;width:18.30px;height:4.70px;background:#26292e;border-radius:2.3px"></div><div class="a" style="left:252.10px;top:124.20px;width:2.30px;height:2.30px;background:#e8e8e8;border-radius:50%"></div><svg class="a" style="left:0;top:0;overflow:visible" width="820" height="439"><text x="255.30" y="126.33" font-family="Liberation Sans" font-size="2.6" fill="#d8dadc" text-anchor="start" font-weight="normal">INSERTS</text></svg><div class="a" style="left:251.10px;top:129.60px;width:18.30px;height:4.70px;background:#26292e;border-radius:2.3px"></div><div class="a" style="left:252.10px;top:130.80px;width:2.30px;height:2.30px;background:#e8e8e8;border-radius:50%"></div><svg class="a" style="left:0;top:0;overflow:visible" width="820" height="439"><text x="255.30" y="132.93" font-family="Liberation Sans" font-size="2.6" fill="#d8dadc" text-anchor="start" font-weight="normal">EQ</text></svg><div class="a" style="left:251.10px;top:136.20px;width:18.30px;height:4.70px;background:#26292e;border-radius:2.3px"></div><div class="a" style="left:252.10px;top:137.40px;width:2.30px;height:2.30px;background:#39a8e0;border-radius:50%"></div><svg class="a" style="left:0;top:0;overflow:visible" width="820" height="439"><text x="255.30" y="139.53" font-family="Liberation Sans" font-size="2.6" fill="#d8dadc" text-anchor="start" font-weight="normal">FX</text></svg><div class="a" style="left:249.30px;top:169.80px;width:21.90px;height:102.50px;background:linear-gradient(#30363d,#262a30 45%,#1e2126);border-radius:2px;border:0.5px solid #3d4249"></div><div class="a" style="left:251.10px;top:171.30px;width:18.30px;height:5.60px;background:#202328;border-radius:1.2px"></div><div class="a" style="left:257.85px;top:172.40px;width:2.20px;height:3.40px;background:#5cb0e0;border-radius:0.6px"></div><div class="a" style="left:260.45px;top:173.20px;width:2.20px;height:2.60px;background:#3a88c0;border-radius:0.6px"></div><div class="a" style="left:256.70px;top:178.20px;width:12.70px;height:5.00px;background:#1e2125;border-radius:1px"></div><svg class="a" style="left:0;top:0;overflow:visible" width="820" height="439"><text x="262.70" y="181.62" font-family="Liberation Sans" font-size="2.4" fill="#9ac" text-anchor="start" font-weight="normal">-0.00</text></svg><div class="a" style="left:252.70px;top:188.60px;width:4.60px;height:4.20px;background:#3a4047;border-radius:0.6px;border:0.4px solid #50565e"></div><div class="a" style="left:253.90px;top:189.80px;width:2.20px;height:1.80px;background:#d8dce0;border-radius:0.3px"></div><div class="a" style="left:252.70px;top:198.60px;width:4.60px;height:4.20px;background:#3a4047;border-radius:0.6px;border:0.4px solid #50565e"></div><div class="a" style="left:253.90px;top:199.80px;width:2.20px;height:1.80px;background:#d8dce0;border-radius:0.3px"></div><div class="a" style="left:262.40px;top:186.30px;width:2.90px;height:83.00px;background:#15171a;"></div><div class="a" style="left:267.50px;top:186.30px;width:1.80px;height:83.00px;background:#15171a;"></div><div class="a" style="left:260.50px;top:201.30px;width:5.00px;height:11.30px;background:linear-gradient(90deg,#bfc3c6,#f2f3f4,#c7cacd);border-radius:0.6px"></div><div class="a" style="left:260.90px;top:204.50px;width:4.20px;height:0.50px;background:#8a8e92;"></div><div class="a" style="left:260.90px;top:207.20px;width:4.20px;height:0.50px;background:#8a8e92;"></div><div class="a" style="left:260.90px;top:209.90px;width:4.20px;height:0.50px;background:#8a8e92;"></div><div class="a" style="left:250.10px;top:269.60px;width:20.30px;height:5.30px;background:#c9cbcd;border-radius:1.8px"></div><svg class="a" style="left:0;top:0;overflow:visible" width="820" height="439"><text x="260.25" y="272.87" font-family="Liberation Sans" font-size="2.7" fill="#222" text-anchor="middle" font-weight="bold">Clash Cymbal</text></svg><div class="a" style="left:273.15px;top:120.10px;width:21.90px;height:47.00px;background:linear-gradient(#3b4047,#343940);border-radius:2px;border:0.4px solid #40454c"></div><div class="a" style="left:274.95px;top:123.00px;width:18.30px;height:4.70px;background:#26292e;border-radius:2.3px"></div><div class="a" style="left:275.95px;top:124.20px;width:2.30px;height:2.30px;background:#e8e8e8;border-radius:50%"></div><svg class="a" style="left:0;top:0;overflow:visible" width="820" height="439"><text x="279.15" y="126.33" font-family="Liberation Sans" font-size="2.6" fill="#d8dadc" text-anchor="start" font-weight="normal">INSERTS</text></svg><div class="a" style="left:274.95px;top:129.60px;width:18.30px;height:4.70px;background:#26292e;border-radius:2.3px"></div><div class="a" style="left:275.95px;top:130.80px;width:2.30px;height:2.30px;background:#e8e8e8;border-radius:50%"></div><svg class="a" style="left:0;top:0;overflow:visible" width="820" height="439"><text x="279.15" y="132.93" font-family="Liberation Sans" font-size="2.6" fill="#d8dadc" text-anchor="start" font-weight="normal">EQ</text></svg><div class="a" style="left:274.95px;top:136.20px;width:18.30px;height:4.70px;background:#26292e;border-radius:2.3px"></div><div class="a" style="left:275.95px;top:137.40px;width:2.30px;height:2.30px;background:#39a8e0;border-radius:50%"></div><svg class="a" style="left:0;top:0;overflow:visible" width="820" height="439"><text x="279.15" y="139.53" font-family="Liberation Sans" font-size="2.6" fill="#d8dadc" text-anchor="start" font-weight="normal">FX</text></svg><div class="a" style="left:273.15px;top:169.80px;width:21.90px;height:102.50px;background:linear-gradient(#30363d,#262a30 45%,#1e2126);border-radius:2px;border:0.5px solid #3d4249"></div><div class="a" style="left:274.95px;top:171.30px;width:18.30px;height:5.60px;background:#202328;border-radius:1.2px"></div><div class="a" style="left:281.70px;top:172.40px;width:2.20px;height:3.40px;background:#5cb0e0;border-radius:0.6px"></div><div class="a" style="left:284.30px;top:173.20px;width:2.20px;height:2.60px;background:#3a88c0;border-radius:0.6px"></div><div class="a" style="left:280.55px;top:178.20px;width:12.70px;height:5.00px;background:#1e2125;border-radius:1px"></div><svg class="a" style="left:0;top:0;overflow:visible" width="820" height="439"><text x="286.55" y="181.62" font-family="Liberation Sans" font-size="2.4" fill="#9ac" text-anchor="start" font-weight="normal">-0.00</text></svg><div class="a" style="left:276.55px;top:188.60px;width:4.60px;height:4.20px;background:#3a4047;border-radius:0.6px;border:0.4px solid #50565e"></div><div class="a" style="left:277.75px;top:189.80px;width:2.20px;height:1.80px;background:#d8dce0;border-radius:0.3px"></div><div class="a" style="left:276.55px;top:198.60px;width:4.60px;height:4.20px;background:#3a4047;border-radius:0.6px;border:0.4px solid #50565e"></div><div class="a" style="left:277.75px;top:199.80px;width:2.20px;height:1.80px;background:#d8dce0;border-radius:0.3px"></div><div class="a" style="left:286.25px;top:186.30px;width:2.90px;height:83.00px;background:#15171a;"></div><div class="a" style="left:291.35px;top:186.30px;width:1.80px;height:83.00px;background:#15171a;"></div><div class="a" style="left:284.35px;top:201.30px;width:5.00px;height:11.30px;background:linear-gradient(90deg,#bfc3c6,#f2f3f4,#c7cacd);border-radius:0.6px"></div><div class="a" style="left:284.75px;top:204.50px;width:4.20px;height:0.50px;background:#8a8e92;"></div><div class="a" style="left:284.75px;top:207.20px;width:4.20px;height:0.50px;background:#8a8e92;"></div><div class="a" style="left:284.75px;top:209.90px;width:4.20px;height:0.50px;background:#8a8e92;"></div><div class="a" style="left:291.35px;top:232.00px;width:1.80px;height:36.00px;background:linear-gradient(#2cc8c8,#1a9aa0);"></div><div class="a" style="left:273.95px;top:269.60px;width:20.30px;height:5.30px;background:#3ee86a;border-radius:1.8px"></div><svg class="a" style="left:0;top:0;overflow:visible" width="820" height="439"><text x="284.10" y="272.87" font-family="Liberation Sans" font-size="2.7" fill="#0d2a18" text-anchor="middle" font-weight="bold">Violin I</text></svg><div class="a" style="left:297.00px;top:120.10px;width:21.90px;height:47.00px;background:linear-gradient(#3b4047,#343940);border-radius:2px;border:0.4px solid #40454c"></div><div class="a" style="left:298.80px;top:123.00px;width:18.30px;height:4.70px;background:#26292e;border-radius:2.3px"></div><div class="a" style="left:299.80px;top:124.20px;width:2.30px;height:2.30px;background:#e8e8e8;border-radius:50%"></div><svg class="a" style="left:0;top:0;overflow:visible" width="820" height="439"><text x="303.00" y="126.33" font-family="Liberation Sans" font-size="2.6" fill="#d8dadc" text-anchor="start" font-weight="normal">INSERTS</text></svg><div class="a" style="left:298.80px;top:129.60px;width:18.30px;height:4.70px;background:#26292e;border-radius:2.3px"></div><div class="a" style="left:299.80px;top:130.80px;width:2.30px;height:2.30px;background:#e8e8e8;border-radius:50%"></div><svg class="a" style="left:0;top:0;overflow:visible" width="820" height="439"><text x="303.00" y="132.93" font-family="Liberation Sans" font-size="2.6" fill="#d8dadc" text-anchor="start" font-weight="normal">EQ</text></svg><div class="a" style="left:298.80px;top:136.20px;width:18.30px;height:4.70px;background:#26292e;border-radius:2.3px"></div><div class="a" style="left:299.80px;top:137.40px;width:2.30px;height:2.30px;background:#39a8e0;border-radius:50%"></div><svg class="a" style="left:0;top:0;overflow:visible" width="820" height="439"><text x="303.00" y="139.53" font-family="Liberation Sans" font-size="2.6" fill="#d8dadc" text-anchor="start" font-weight="normal">FX</text></svg><div class="a" style="left:297.00px;top:169.80px;width:21.90px;height:102.50px;background:linear-gradient(#30363d,#262a30 45%,#1e2126);border-radius:2px;border:0.5px solid #3d4249"></div><div class="a" style="left:298.80px;top:171.30px;width:18.30px;height:5.60px;background:#202328;border-radius:1.2px"></div><div class="a" style="left:305.55px;top:172.40px;width:2.20px;height:3.40px;background:#5cb0e0;border-radius:0.6px"></div><div class="a" style="left:308.15px;top:173.20px;width:2.20px;height:2.60px;background:#3a88c0;border-radius:0.6px"></div><div class="a" style="left:304.40px;top:178.20px;width:12.70px;height:5.00px;background:#1e2125;border-radius:1px"></div><svg class="a" style="left:0;top:0;overflow:visible" width="820" height="439"><text x="310.40" y="181.62" font-family="Liberation Sans" font-size="2.4" fill="#9ac" text-anchor="start" font-weight="normal">-0.00</text></svg><div class="a" style="left:300.40px;top:188.60px;width:4.60px;height:4.20px;background:#3a4047;border-radius:0.6px;border:0.4px solid #50565e"></div><div class="a" style="left:301.60px;top:189.80px;width:2.20px;height:1.80px;background:#d8dce0;border-radius:0.3px"></div><div class="a" style="left:300.40px;top:198.60px;width:4.60px;height:4.20px;background:#3a4047;border-radius:0.6px;border:0.4px solid #50565e"></div><div class="a" style="left:301.60px;top:199.80px;width:2.20px;height:1.80px;background:#d8dce0;border-radius:0.3px"></div><div class="a" style="left:310.10px;top:186.30px;width:2.90px;height:83.00px;background:#15171a;"></div><div class="a" style="left:315.20px;top:186.30px;width:1.80px;height:83.00px;background:#15171a;"></div><div class="a" style="left:308.20px;top:201.30px;width:5.00px;height:11.30px;background:linear-gradient(90deg,#bfc3c6,#f2f3f4,#c7cacd);border-radius:0.6px"></div><div class="a" style="left:308.60px;top:204.50px;width:4.20px;height:0.50px;background:#8a8e92;"></div><div class="a" style="left:308.60px;top:207.20px;width:4.20px;height:0.50px;background:#8a8e92;"></div><div class="a" style="left:308.60px;top:209.90px;width:4.20px;height:0.50px;background:#8a8e92;"></div><div class="a" style="left:315.20px;top:230.00px;width:1.80px;height:38.00px;background:linear-gradient(#2cc8c8,#1a9aa0);"></div><div class="a" style="left:297.80px;top:269.60px;width:20.30px;height:5.30px;background:#42e89a;border-radius:1.8px"></div><svg class="a" style="left:0;top:0;overflow:visible" width="820" height="439"><text x="307.95" y="272.87" font-family="Liberation Sans" font-size="2.7" fill="#0d2a18" text-anchor="middle" font-weight="bold">Violin II</text></svg><div class="a" style="left:320.85px;top:120.10px;width:21.90px;height:47.00px;background:linear-gradient(#3b4047,#343940);border-radius:2px;border:0.4px solid #40454c"></div><div class="a" style="left:322.65px;top:123.00px;width:18.30px;height:4.70px;background:#26292e;border-radius:2.3px"></div><div class="a" style="left:323.65px;top:124.20px;width:2.30px;height:2.30px;background:#e8e8e8;border-radius:50%"></div><svg class="a" style="left:0;top:0;overflow:visible" width="820" height="439"><text x="326.85" y="126.33" font-family="Liberation Sans" font-size="2.6" fill="#d8dadc" text-anchor="start" font-weight="normal">INSERTS</text></svg><div class="a" style="left:322.65px;top:129.60px;width:18.30px;height:4.70px;background:#26292e;border-radius:2.3px"></div><div class="a" style="left:323.65px;top:130.80px;width:2.30px;height:2.30px;background:#e8e8e8;border-radius:50%"></div><svg class="a" style="left:0;top:0;overflow:visible" width="820" height="439"><text x="326.85" y="132.93" font-family="Liberation Sans" font-size="2.6" fill="#d8dadc" text-anchor="start" font-weight="normal">EQ</text></svg><div class="a" style="left:322.65px;top:136.20px;width:18.30px;height:4.70px;background:#26292e;border-radius:2.3px"></div><div class="a" style="left:323.65px;top:137.40px;width:2.30px;height:2.30px;background:#39a8e0;border-radius:50%"></div><svg class="a" style="left:0;top:0;overflow:visible" width="820" height="439"><text x="326.85" y="139.53" font-family="Liberation Sans" font-size="2.6" fill="#d8dadc" text-anchor="start" font-weight="normal">FX</text></svg><div class="a" style="left:320.85px;top:169.80px;width:21.90px;height:102.50px;background:linear-gradient(#30363d,#262a30 45%,#1e2126);border-radius:2px;border:0.5px solid #3d4249"></div><div class="a" style="left:322.65px;top:171.30px;width:18.30px;height:5.60px;background:#202328;border-radius:1.2px"></div><div class="a" style="left:329.40px;top:172.40px;width:2.20px;height:3.40px;background:#5cb0e0;border-radius:0.6px"></div><div class="a" style="left:332.00px;top:173.20px;width:2.20px;height:2.60px;background:#3a88c0;border-radius:0.6px"></div><div class="a" style="left:328.25px;top:178.20px;width:12.70px;height:5.00px;background:#1e2125;border-radius:1px"></div><svg class="a" style="left:0;top:0;overflow:visible" width="820" height="439"><text x="334.25" y="181.62" font-family="Liberation Sans" font-size="2.4" fill="#9ac" text-anchor="start" font-weight="normal">-0.00</text></svg><div class="a" style="left:324.25px;top:188.60px;width:4.60px;height:4.20px;background:#3a4047;border-radius:0.6px;border:0.4px solid #50565e"></div><div class="a" style="left:325.45px;top:189.80px;width:2.20px;height:1.80px;background:#d8dce0;border-radius:0.3px"></div><div class="a" style="left:324.25px;top:198.60px;width:4.60px;height:4.20px;background:#3a4047;border-radius:0.6px;border:0.4px solid #50565e"></div><div class="a" style="left:325.45px;top:199.80px;width:2.20px;height:1.80px;background:#d8dce0;border-radius:0.3px"></div><div class="a" style="left:333.95px;top:186.30px;width:2.90px;height:83.00px;background:#15171a;"></div><div class="a" style="left:339.05px;top:186.30px;width:1.80px;height:83.00px;background:#15171a;"></div><div class="a" style="left:332.05px;top:201.30px;width:5.00px;height:11.30px;background:linear-gradient(90deg,#bfc3c6,#f2f3f4,#c7cacd);border-radius:0.6px"></div><div class="a" style="left:332.45px;top:204.50px;width:4.20px;height:0.50px;background:#8a8e92;"></div><div class="a" style="left:332.45px;top:207.20px;width:4.20px;height:0.50px;background:#8a8e92;"></div><div class="a" style="left:332.45px;top:209.90px;width:4.20px;height:0.50px;background:#8a8e92;"></div><div class="a" style="left:339.05px;top:228.00px;width:1.80px;height:40.00px;background:linear-gradient(#2cc8c8,#1a9aa0);"></div><div class="a" style="left:321.65px;top:269.60px;width:20.30px;height:5.30px;background:#3ee6d0;border-radius:1.8px"></div><svg class="a" style="left:0;top:0;overflow:visible" width="820" height="439"><text x="331.80" y="272.87" font-family="Liberation Sans" font-size="2.7" fill="#0d2a18" text-anchor="middle" font-weight="bold">Viola</text></svg><div class="a" style="left:344.70px;top:120.10px;width:21.90px;height:47.00px;background:linear-gradient(#3b4047,#343940);border-radius:2px;border:0.4px solid #40454c"></div><div class="a" style="left:346.50px;top:123.00px;width:18.30px;height:4.70px;background:#26292e;border-radius:2.3px"></div><div class="a" style="left:347.50px;top:124.20px;width:2.30px;height:2.30px;background:#e8e8e8;border-radius:50%"></div><svg class="a" style="left:0;top:0;overflow:visible" width="820" height="439"><text x="350.70" y="126.33" font-family="Liberation Sans" font-size="2.6" fill="#d8dadc" text-anchor="start" font-weight="normal">INSERTS</text></svg><div class="a" style="left:346.50px;top:129.60px;width:18.30px;height:4.70px;background:#26292e;border-radius:2.3px"></div><div class="a" style="left:347.50px;top:130.80px;width:2.30px;height:2.30px;background:#e8e8e8;border-radius:50%"></div><svg class="a" style="left:0;top:0;overflow:visible" width="820" height="439"><text x="350.70" y="132.93" font-family="Liberation Sans" font-size="2.6" fill="#d8dadc" text-anchor="start" font-weight="normal">EQ</text></svg><div class="a" style="left:346.50px;top:136.20px;width:18.30px;height:4.70px;background:#26292e;border-radius:2.3px"></div><div class="a" style="left:347.50px;top:137.40px;width:2.30px;height:2.30px;background:#39a8e0;border-radius:50%"></div><svg class="a" style="left:0;top:0;overflow:visible" width="820" height="439"><text x="350.70" y="139.53" font-family="Liberation Sans" font-size="2.6" fill="#d8dadc" text-anchor="start" font-weight="normal">FX</text></svg><div class="a" style="left:344.70px;top:169.80px;width:21.90px;height:102.50px;background:linear-gradient(#30363d,#262a30 45%,#1e2126);border-radius:2px;border:0.5px solid #3d4249"></div><div class="a" style="left:346.50px;top:171.30px;width:18.30px;height:5.60px;background:#202328;border-radius:1.2px"></div><div class="a" style="left:353.25px;top:172.40px;width:2.20px;height:3.40px;background:#5cb0e0;border-radius:0.6px"></div><div class="a" style="left:355.85px;top:173.20px;width:2.20px;height:2.60px;background:#3a88c0;border-radius:0.6px"></div><div class="a" style="left:352.10px;top:178.20px;width:12.70px;height:5.00px;background:#1e2125;border-radius:1px"></div><svg class="a" style="left:0;top:0;overflow:visible" width="820" height="439"><text x="358.10" y="181.62" font-family="Liberation Sans" font-size="2.4" fill="#9ac" text-anchor="start" font-weight="normal">-0.00</text></svg><div class="a" style="left:348.10px;top:188.60px;width:4.60px;height:4.20px;background:#3a4047;border-radius:0.6px;border:0.4px solid #50565e"></div><div class="a" style="left:349.30px;top:189.80px;width:2.20px;height:1.80px;background:#d8dce0;border-radius:0.3px"></div><div class="a" style="left:348.10px;top:198.60px;width:4.60px;height:4.20px;background:#3a4047;border-radius:0.6px;border:0.4px solid #50565e"></div><div class="a" style="left:349.30px;top:199.80px;width:2.20px;height:1.80px;background:#d8dce0;border-radius:0.3px"></div><div class="a" style="left:357.80px;top:186.30px;width:2.90px;height:83.00px;background:#15171a;"></div><div class="a" style="left:362.90px;top:186.30px;width:1.80px;height:83.00px;background:#15171a;"></div><div class="a" style="left:355.90px;top:201.30px;width:5.00px;height:11.30px;background:linear-gradient(90deg,#bfc3c6,#f2f3f4,#c7cacd);border-radius:0.6px"></div><div class="a" style="left:356.30px;top:204.50px;width:4.20px;height:0.50px;background:#8a8e92;"></div><div class="a" style="left:356.30px;top:207.20px;width:4.20px;height:0.50px;background:#8a8e92;"></div><div class="a" style="left:356.30px;top:209.90px;width:4.20px;height:0.50px;background:#8a8e92;"></div><div class="a" style="left:362.90px;top:232.00px;width:1.80px;height:36.00px;background:linear-gradient(#2cc8c8,#1a9aa0);"></div><div class="a" style="left:345.50px;top:269.60px;width:20.30px;height:5.30px;background:#40d8e8;border-radius:1.8px"></div><svg class="a" style="left:0;top:0;overflow:visible" width="820" height="439"><text x="355.65" y="272.87" font-family="Liberation Sans" font-size="2.7" fill="#0d2a18" text-anchor="middle" font-weight="bold">Violoncello</text></svg><div class="a" style="left:368.55px;top:120.10px;width:21.90px;height:47.00px;background:linear-gradient(#3b4047,#343940);border-radius:2px;border:0.4px solid #40454c"></div><div class="a" style="left:370.35px;top:123.00px;width:18.30px;height:4.70px;background:#26292e;border-radius:2.3px"></div><div class="a" style="left:371.35px;top:124.20px;width:2.30px;height:2.30px;background:#e8e8e8;border-radius:50%"></div><svg class="a" style="left:0;top:0;overflow:visible" width="820" height="439"><text x="374.55" y="126.33" font-family="Liberation Sans" font-size="2.6" fill="#d8dadc" text-anchor="start" font-weight="normal">INSERTS</text></svg><div class="a" style="left:370.35px;top:129.60px;width:18.30px;height:4.70px;background:#26292e;border-radius:2.3px"></div><div class="a" style="left:371.35px;top:130.80px;width:2.30px;height:2.30px;background:#e8e8e8;border-radius:50%"></div><svg class="a" style="left:0;top:0;overflow:visible" width="820" height="439"><text x="374.55" y="132.93" font-family="Liberation Sans" font-size="2.6" fill="#d8dadc" text-anchor="start" font-weight="normal">EQ</text></svg><div class="a" style="left:370.35px;top:136.20px;width:18.30px;height:4.70px;background:#26292e;border-radius:2.3px"></div><div class="a" style="left:371.35px;top:137.40px;width:2.30px;height:2.30px;background:#39a8e0;border-radius:50%"></div><svg class="a" style="left:0;top:0;overflow:visible" width="820" height="439"><text x="374.55" y="139.53" font-family="Liberation Sans" font-size="2.6" fill="#d8dadc" text-anchor="start" font-weight="normal">FX</text></svg><div class="a" style="left:368.55px;top:169.80px;width:21.90px;height:102.50px;background:linear-gradient(#30363d,#262a30 45%,#1e2126);border-radius:2px;border:0.5px solid #3d4249"></div><div class="a" style="left:370.35px;top:171.30px;width:18.30px;height:5.60px;background:#202328;border-radius:1.2px"></div><div class="a" style="left:377.10px;top:172.40px;width:2.20px;height:3.40px;background:#5cb0e0;border-radius:0.6px"></div><div class="a" style="left:379.70px;top:173.20px;width:2.20px;height:2.60px;background:#3a88c0;border-radius:0.6px"></div><div class="a" style="left:375.95px;top:178.20px;width:12.70px;height:5.00px;background:#1e2125;border-radius:1px"></div><svg class="a" style="left:0;top:0;overflow:visible" width="820" height="439"><text x="381.95" y="181.62" font-family="Liberation Sans" font-size="2.4" fill="#9ac" text-anchor="start" font-weight="normal">-0.00</text></svg><div class="a" style="left:371.95px;top:188.60px;width:4.60px;height:4.20px;background:#3a4047;border-radius:0.6px;border:0.4px solid #50565e"></div><div class="a" style="left:373.15px;top:189.80px;width:2.20px;height:1.80px;background:#d8dce0;border-radius:0.3px"></div><div class="a" style="left:371.95px;top:198.60px;width:4.60px;height:4.20px;background:#3a4047;border-radius:0.6px;border:0.4px solid #50565e"></div><div class="a" style="left:373.15px;top:199.80px;width:2.20px;height:1.80px;background:#d8dce0;border-radius:0.3px"></div><div class="a" style="left:381.65px;top:186.30px;width:2.90px;height:83.00px;background:#15171a;"></div><div class="a" style="left:386.75px;top:186.30px;width:1.80px;height:83.00px;background:#15171a;"></div><div class="a" style="left:379.75px;top:201.30px;width:5.00px;height:11.30px;background:linear-gradient(90deg,#bfc3c6,#f2f3f4,#c7cacd);border-radius:0.6px"></div><div class="a" style="left:380.15px;top:204.50px;width:4.20px;height:0.50px;background:#8a8e92;"></div><div class="a" style="left:380.15px;top:207.20px;width:4.20px;height:0.50px;background:#8a8e92;"></div><div class="a" style="left:380.15px;top:209.90px;width:4.20px;height:0.50px;background:#8a8e92;"></div><div class="a" style="left:386.75px;top:235.00px;width:1.80px;height:33.00px;background:linear-gradient(#2cc8c8,#1a9aa0);"></div><div class="a" style="left:369.35px;top:269.60px;width:20.30px;height:5.30px;background:#38c0e8;border-radius:1.8px"></div><svg class="a" style="left:0;top:0;overflow:visible" width="820" height="439"><text x="379.50" y="272.87" font-family="Liberation Sans" font-size="2.7" fill="#0d2a18" text-anchor="middle" font-weight="bold">Double Bass</text></svg><div class="a" style="left:394.20px;top:120.10px;width:21.40px;height:47.00px;background:linear-gradient(#7c3445,#6c2c3a);border-radius:2px;border:0.4px solid #9a4654"></div><div class="a" style="left:396.00px;top:123.00px;width:17.80px;height:4.70px;background:#3a2228;border-radius:2.3px"></div><div class="a" style="left:397.00px;top:124.20px;width:2.30px;height:2.30px;background:#39a8e0;border-radius:50%"></div><svg class="a" style="left:0;top:0;overflow:visible" width="820" height="439"><text x="400.20" y="126.33" font-family="Liberation Sans" font-size="2.6" fill="#d8dadc" text-anchor="start" font-weight="normal">INSERTS</text></svg><div class="a" style="left:396.00px;top:129.60px;width:17.80px;height:4.70px;background:#3a2228;border-radius:2.3px"></div><div class="a" style="left:397.00px;top:130.80px;width:2.30px;height:2.30px;background:#e8e8e8;border-radius:50%"></div><svg class="a" style="left:0;top:0;overflow:visible" width="820" height="439"><text x="400.20" y="132.93" font-family="Liberation Sans" font-size="2.6" fill="#d8dadc" text-anchor="start" font-weight="normal">EQ</text></svg><div class="a" style="left:394.20px;top:169.80px;width:21.40px;height:102.50px;background:linear-gradient(#5e2433,#6c2b3b);border-radius:2px;border:0.5px solid #7a3446"></div><div class="a" style="left:396.00px;top:171.30px;width:17.80px;height:5.60px;background:#2e161c;border-radius:1.2px"></div><div class="a" style="left:402.50px;top:172.40px;width:2.20px;height:3.40px;background:#5cb0e0;border-radius:0.6px"></div><div class="a" style="left:405.10px;top:173.20px;width:2.20px;height:2.60px;background:#3a88c0;border-radius:0.6px"></div><div class="a" style="left:401.60px;top:178.20px;width:12.20px;height:5.00px;background:#2e161c;border-radius:1px"></div><svg class="a" style="left:0;top:0;overflow:visible" width="820" height="439"><text x="407.10" y="181.62" font-family="Liberation Sans" font-size="2.4" fill="#9ac" text-anchor="start" font-weight="normal">-0.00</text></svg><div class="a" style="left:397.60px;top:188.60px;width:4.60px;height:4.20px;background:#2a1a20;border-radius:0.6px;border:0.4px solid #806068"></div><div class="a" style="left:398.80px;top:189.80px;width:2.20px;height:1.80px;background:#d8dce0;border-radius:0.3px"></div><div class="a" style="left:397.60px;top:198.60px;width:4.60px;height:4.20px;background:#2a1a20;border-radius:0.6px;border:0.4px solid #806068"></div><div class="a" style="left:398.80px;top:199.80px;width:2.20px;height:1.80px;background:#d8dce0;border-radius:0.3px"></div><div class="a" style="left:407.30px;top:186.30px;width:2.90px;height:83.00px;background:#15171a;"></div><div class="a" style="left:412.40px;top:186.30px;width:1.80px;height:83.00px;background:#15171a;"></div><div class="a" style="left:405.40px;top:201.30px;width:5.00px;height:11.30px;background:#e63e4c;border-radius:0.6px"></div><div class="a" style="left:412.40px;top:204.00px;width:1.80px;height:65.00px;background:linear-gradient(#2cc8c8,#1a9aa0);"></div><div class="a" style="left:395.00px;top:269.60px;width:19.80px;height:5.30px;background:#d05060;border-radius:1.8px"></div><svg class="a" style="left:0;top:0;overflow:visible" width="820" height="439"><text x="404.90" y="272.87" font-family="Liberation Sans" font-size="2.7" fill="#222" text-anchor="middle" font-weight="bold">Output</text></svg><div class="a" style="left:147.50px;top:270.00px;width:2.50px;height:5.00px;background:#3a5040;border-radius:1px"></div><div class="a" style="left:530.8px;top:208.1px;width:216.9px;height:142.6px;background:#1c1f24;border-radius:4px;overflow:hidden;box-shadow:0 3px 10px rgba(0,0,0,0.38), 0 0 0 0.6px #050505"><svg width="216.9" height="142.6" viewBox="530.8 208.1 216.9 142.6" style="position:absolute;left:0;top:0"><rect x="530.8" y="208.1" width="216.9" height="6.9" fill="#3d2d25"/><circle cx="534.80" cy="211.4" r="1.5" fill="#5e4f47"/><circle cx="539.70" cy="211.4" r="1.5" fill="#5e4f47"/><circle cx="544.60" cy="211.4" r="1.5" fill="#5e4f47"/><text x="639" y="212.6" font-family="Liberation Sans" font-size="3.6" fill="#8f8078" text-anchor="middle">Live Stage</text><path d="M617.30 323.6 A22.3 22.3 0 0 1 661.90 323.6" stroke="#3d4146" stroke-width="0.7" fill="none"/><path d="M595.90 323.6 A43.7 43.7 0 0 1 683.30 323.6" stroke="#3d4146" stroke-width="0.7" fill="none"/><path d="M574.20 323.6 A65.4 65.4 0 0 1 705.00 323.6" stroke="#3d4146" stroke-width="0.7" fill="none"/><path d="M553.40 323.6 A86.2 86.2 0 0 1 725.80 323.6" stroke="#3d4146" stroke-width="0.7" fill="none"/><path d="M532.40 323.6 A107.2 107.2 0 0 1 746.80 323.6" stroke="#3d4146" stroke-width="0.7" fill="none"/><line x1="639.6" y1="215" x2="639.6" y2="323.6" stroke="#b8bcc0" stroke-width="0.8"/><line x1="530.8" y1="323.6" x2="747.6999999999999" y2="323.6" stroke="#6a6e72" stroke-width="0.9"/><rect x="530.8" y="324.1" width="216.9" height="17" fill="#141517"/><rect x="530.8" y="341" width="216.9" height="10" fill="#1c1e22"/><circle cx="638" cy="225.9" r="1.65" fill="#30d0e8"/><text x="641.00" y="226.90" font-family="Liberation Sans" font-size="2.7" font-weight="bold" fill="#e6e8ea">Triangle</text><circle cx="615" cy="229.2" r="1.65" fill="#d42ac8"/><text x="618.00" y="230.20" font-family="Liberation Sans" font-size="2.7" font-weight="bold" fill="#e6e8ea">Side Drum</text><circle cx="657.3" cy="230.3" r="1.65" fill="#30d0e8"/><text x="660.30" y="231.30" font-family="Liberation Sans" font-size="2.7" font-weight="bold" fill="#e6e8ea">Clash Cymbal</text><circle cx="594.3" cy="235.4" r="1.65" fill="#d42ac8"/><text x="597.30" y="236.40" font-family="Liberation Sans" font-size="2.7" font-weight="bold" fill="#e6e8ea">Bass Drum</text><circle cx="678.8" cy="236.1" r="1.65" fill="#30d0e8"/><text x="681.80" y="237.10" font-family="Liberation Sans" font-size="2.7" font-weight="bold" fill="#e6e8ea">Timpani</text><circle cx="633" cy="246" r="1.65" fill="#f2dc3a"/><text x="636.00" y="247.00" font-family="Liberation Sans" font-size="2.7" font-weight="bold" fill="#e6e8ea">Trumpet 2</text><circle cx="670.8" cy="247.8" r="1.65" fill="#f2dc3a"/><text x="673.80" y="248.80" font-family="Liberation Sans" font-size="2.7" font-weight="bold" fill="#e6e8ea">Trombone 1</text><circle cx="593.9" cy="251.8" r="1.65" fill="#f2dc3a"/><text x="596.90" y="252.80" font-family="Liberation Sans" font-size="2.7" font-weight="bold" fill="#e6e8ea">Horn 3</text><circle cx="615.4" cy="251" r="1.65" fill="#f2dc3a"/><text x="618.40" y="252.00" font-family="Liberation Sans" font-size="2.7" font-weight="bold" fill="#e6e8ea">Trumpet 1</text><circle cx="650.4" cy="250.7" r="1.65" fill="#f2dc3a"/><text x="653.40" y="251.70" font-family="Liberation Sans" font-size="2.7" font-weight="bold" fill="#e6e8ea">Trumpet 3</text><circle cx="572.4" cy="255" r="1.65" fill="#f2dc3a"/><text x="575.40" y="256.00" font-family="Liberation Sans" font-size="2.7" font-weight="bold" fill="#e6e8ea">Horn 1</text><circle cx="682.5" cy="255.4" r="1.65" fill="#f2dc3a"/><text x="685.50" y="256.40" font-family="Liberation Sans" font-size="2.7" font-weight="bold" fill="#e6e8ea">Trombone 2</text><circle cx="602.3" cy="259" r="1.65" fill="#f2dc3a"/><text x="605.30" y="260.00" font-family="Liberation Sans" font-size="2.7" font-weight="bold" fill="#e6e8ea">Horn 4</text><circle cx="583" cy="261.6" r="1.65" fill="#f2dc3a"/><text x="586.00" y="262.60" font-family="Liberation Sans" font-size="2.7" font-weight="bold" fill="#e6e8ea">Horn 2</text><circle cx="698.5" cy="262" r="1.65" fill="#f2dc3a"/><text x="701.50" y="263.00" font-family="Liberation Sans" font-size="2.7" font-weight="bold" fill="#e6e8ea">Trombone 3</text><circle cx="710.2" cy="269.3" r="1.65" fill="#f2dc3a"/><text x="713.20" y="270.30" font-family="Liberation Sans" font-size="2.7" font-weight="bold" fill="#e6e8ea">Tuba</text><circle cx="610.7" cy="268.5" r="1.65" fill="#d42ac8"/><text x="613.70" y="269.50" font-family="Liberation Sans" font-size="2.7" font-weight="bold" fill="#e6e8ea">Clarinet 1</text><circle cx="645.7" cy="268.2" r="1.65" fill="#d42ac8"/><text x="648.70" y="269.20" font-family="Liberation Sans" font-size="2.7" font-weight="bold" fill="#e6e8ea">Bassoon 1</text><circle cx="663.9" cy="270.4" r="1.65" fill="#d42ac8"/><text x="666.90" y="271.40" font-family="Liberation Sans" font-size="2.7" font-weight="bold" fill="#e6e8ea">Bassoon 2</text><circle cx="583.7" cy="274.7" r="1.65" fill="#d42ac8"/><text x="586.70" y="275.70" font-family="Liberation Sans" font-size="2.7" font-weight="bold" fill="#e6e8ea">Clarinet 2</text><circle cx="680.7" cy="274.4" r="1.65" fill="#d42ac8"/><text x="683.70" y="275.40" font-family="Liberation Sans" font-size="2.7" font-weight="bold" fill="#e6e8ea">Contrabassoon</text><circle cx="615" cy="279" r="1.65" fill="#d42ac8"/><text x="618.00" y="280.00" font-family="Liberation Sans" font-size="2.7" font-weight="bold" fill="#e6e8ea">Flute 1</text><circle cx="645.7" cy="278.7" r="1.65" fill="#d42ac8"/><text x="648.70" y="279.70" font-family="Liberation Sans" font-size="2.7" font-weight="bold" fill="#e6e8ea">Oboe 1</text><circle cx="591.4" cy="285" r="1.65" fill="#d42ac8"/><text x="594.40" y="286.00" font-family="Liberation Sans" font-size="2.7" font-weight="bold" fill="#e6e8ea">Flute 2</text><circle cx="669.4" cy="284.2" r="1.65" fill="#d42ac8"/><text x="672.40" y="285.20" font-family="Liberation Sans" font-size="2.7" font-weight="bold" fill="#e6e8ea">Oboe 2</text><circle cx="613.6" cy="298.4" r="1.65" fill="#d42ac8"/><text x="616.60" y="299.40" font-family="Liberation Sans" font-size="2.7" font-weight="bold" fill="#e6e8ea">Violin II</text><circle cx="656.6" cy="299.2" r="1.65" fill="#d42ac8"/><text x="659.60" y="300.20" font-family="Liberation Sans" font-size="2.7" font-weight="bold" fill="#e6e8ea">Viola</text><circle cx="707.3" cy="304.3" r="1.65" fill="#d42ac8"/><text x="710.30" y="305.30" font-family="Liberation Sans" font-size="2.7" font-weight="bold" fill="#e6e8ea">Double Bass</text><circle cx="586.6" cy="317.8" r="1.65" fill="#d42ac8"/><text x="589.60" y="318.80" font-family="Liberation Sans" font-size="2.7" font-weight="bold" fill="#e6e8ea">Violin I</text><circle cx="687.2" cy="317.8" r="1.65" fill="#f0902a"/><text x="690.20" y="318.80" font-family="Liberation Sans" font-size="2.7" font-weight="bold" fill="#f09030">Violoncello</text><path d="M534.6 344.5 v4 h3.6 v-4 M536.4 343 v4 M535.2 344.2 l1.2 -1.3 l1.2 1.3" stroke="#b8bcc0" stroke-width="0.6" fill="none"/><rect x="541.8" y="345.8" width="4" height="0.9" fill="#c8ccd0"/><rect x="549.2" y="345.8" width="4" height="0.9" fill="#c8ccd0"/><rect x="550.75" y="344.2" width="0.9" height="4" fill="#c8ccd0"/></svg></div></div></body></html>
